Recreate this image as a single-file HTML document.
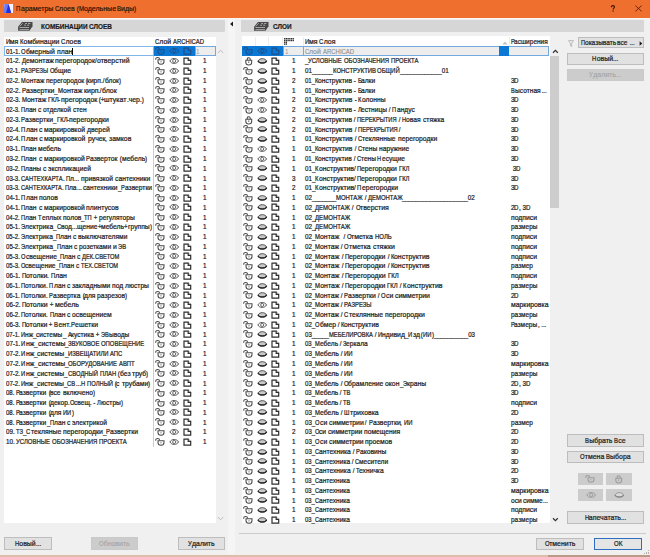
<!DOCTYPE html>
<html><head><meta charset="utf-8"><style>
html,body{margin:0;padding:0;width:650px;height:557px;overflow:hidden;background:#f0f0f0}
.a{position:absolute;display:block}
.t{position:absolute;white-space:pre;font-family:"Liberation Sans",sans-serif;font-size:6.94px;line-height:7px;color:#1c1c1c;-webkit-text-stroke:0.22px #1c1c1c}
.b{font-weight:bold}
.c{text-align:center}
</style></head><body>
<div class="a" style="left:0.00px;top:0.00px;width:650.00px;height:17.50px;background:#ee6f2e"></div>
<div class="a" style="left:0.00px;top:18.00px;width:650.00px;height:1.00px;background:#f8f7f0"></div>
<svg class="a" style="left:4.3px;top:4.3px" width="9" height="9" viewBox="0 0 8.75 8.75"><rect x="0" y="0" width="8.75" height="8.75" fill="#f4f2ff"/><path d="M0 0 H4.4 L7.0 8.75 H0 Z" fill="#6d78f0"/><path d="M2.0 8.75 L4.4 0 L7.0 8.75 Z" fill="#1f2ee0"/><path d="M0 0 H1.5 L0 5 Z" fill="#8f98f4"/></svg>
<div class="t" style="left:16.20px;top:5.00px;color:#240c02;-webkit-text-stroke:0.15px #240c02"><span style="display:inline-block;transform:scaleX(0.8674);transform-origin:0 0;margin-right:-0.662px">П</span><span style="display:inline-block;transform:scaleX(1.0100);transform-origin:0 0;margin-right:0.322px">араметры</span><span style="display:inline-block;transform:scaleX(0.9125);transform-origin:0 0;margin-right:-0.169px"> </span><span style="display:inline-block;transform:scaleX(0.8674);transform-origin:0 0;margin-right:-0.665px">С</span><span style="display:inline-block;transform:scaleX(1.0100);transform-origin:0 0;margin-right:0.155px">лоев</span><span style="display:inline-block;transform:scaleX(0.9125);transform-origin:0 0;margin-right:-0.371px"> (</span><span style="display:inline-block;transform:scaleX(0.8674);transform-origin:0 0;margin-right:-0.767px">М</span><span style="display:inline-block;transform:scaleX(1.0100);transform-origin:0 0;margin-right:0.321px">одельные</span><span style="display:inline-block;transform:scaleX(0.9125);transform-origin:0 0;margin-right:-0.169px"> </span><span style="display:inline-block;transform:scaleX(0.8674);transform-origin:0 0;margin-right:-0.614px">В</span><span style="display:inline-block;transform:scaleX(1.0100);transform-origin:0 0;margin-right:0.129px">иды</span><span style="display:inline-block;transform:scaleX(0.9125);transform-origin:0 0;margin-right:-0.202px">)</span></div>
<svg class="a" style="left:610px;top:5px" width="6" height="8" viewBox="0 0 6 8"><path d="M1.3 2.3 C1.3 0.9 2.2 0.6 2.9 0.6 C3.8 0.6 4.5 1.2 4.5 2.0 C4.5 3.1 3.1 3.3 3.1 4.6" fill="none" stroke="#3a1000" stroke-width="1.05"/><circle cx="3.1" cy="6.0" r="0.65" fill="#3a1000"/></svg>
<svg class="a" style="left:635px;top:5.3px" width="8" height="8" viewBox="0 0 8 8"><path d="M0.4 0.6 L6.6 6.3 M6.6 0.6 L0.4 6.3" stroke="#4a1804" stroke-width="0.8"/></svg>
<div class="a" style="left:4.00px;top:19.80px;width:220.70px;height:12.50px;background:#d6d6d6;border-radius:1.2px"></div>
<svg class="a" style="left:17.80px;top:21.60px" width="16" height="10" viewBox="0 0 16 10"><path d="M0.1 4.7 L3.9 0.1 H14.5 V4.3 L11.5 8.7 H0.1 Z" fill="#474747"/><path d="M1.5 5.5 H11.0 M1.5 7.6 H11.0" stroke="#d9d9d9" stroke-width="0.65"/><path d="M1.8 4.3 L4.8 1.1" stroke="#d9d9d9" stroke-width="0.6"/><path d="M7.2 1.5 H9.0 M10.2 1.5 H12.4 M6.2 3.2 H8.0 M9.2 3.2 H11.2" stroke="#d9d9d9" stroke-width="0.7"/></svg>
<div class="t b" style="left:40.90px;top:22.90px;font-size:7.25px"><span style="display:inline-block;transform:scaleX(0.8828);transform-origin:0 0;margin-right:-6.180px">КОМБИНАЦИИ</span><span style="display:inline-block;transform:scaleX(0.8648);transform-origin:0 0;margin-right:-0.272px"> </span><span style="display:inline-block;transform:scaleX(0.8828);transform-origin:0 0;margin-right:-3.052px">СЛОЕВ</span></div>
<div class="a" style="left:4.00px;top:36.60px;width:211.50px;height:486.40px;background:#fff"></div>
<div class="t" style="left:5.50px;top:38.00px;"><span style="display:inline-block;transform:scaleX(0.8588);transform-origin:0 0;margin-right:-0.704px">И</span>мя<span style="display:inline-block;transform:scaleX(0.9035);transform-origin:0 0;margin-right:-0.186px"> </span><span style="display:inline-block;transform:scaleX(0.8588);transform-origin:0 0;margin-right:-0.571px">К</span>омбинации<span style="display:inline-block;transform:scaleX(0.9035);transform-origin:0 0;margin-right:-0.186px"> </span><span style="display:inline-block;transform:scaleX(0.8588);transform-origin:0 0;margin-right:-0.708px">С</span>лоев</div>
<div class="t" style="left:155.00px;top:38.00px;"><span style="display:inline-block;transform:scaleX(0.8588);transform-origin:0 0;margin-right:-0.708px">С</span>лой<span style="display:inline-block;transform:scaleX(0.9035);transform-origin:0 0;margin-right:-0.186px"> </span><span style="display:inline-block;transform:scaleX(0.8588);transform-origin:0 0;margin-right:-5.118px">ARCHICAD</span></div>
<div class="a" style="left:153.30px;top:46.30px;width:0.70px;height:400.74px;background:#cdcdcd"></div>
<div class="a" style="left:4.20px;top:46.30px;width:149.40px;height:9.60px;border:1px solid #80b6e8;box-sizing:border-box"></div>
<div class="a" style="left:153.60px;top:46.30px;width:41.00px;height:9.60px;background:#0a78d4"></div>
<div class="a" style="left:194.50px;top:46.30px;width:21.20px;height:9.60px;background:#ededed;border:1px solid #72aae0;box-sizing:border-box"></div>
<div class="t" style="left:5.50px;top:47.60px;width:147.5px;height:10px;overflow:hidden"><span style="display:inline-block;transform:scaleX(0.8971);transform-origin:0 0;margin-right:-1.826px">01-1. </span><span style="display:inline-block;transform:scaleX(0.8528);transform-origin:0 0;margin-right:-0.795px">О</span><span style="display:inline-block;transform:scaleX(0.9930);transform-origin:0 0;margin-right:-0.204px">бмерный</span><span style="display:inline-block;transform:scaleX(0.8971);transform-origin:0 0;margin-right:-0.198px"> </span><span style="display:inline-block;transform:scaleX(0.9930);transform-origin:0 0;margin-right:-0.108px">план</span></div>
<svg class="a" style="left:151.60px;top:46.30px" width="14" height="10" viewBox="0 0 14 10"><path d="M3.7 3.8 C3.5 2.0 4.6 1.5 5.8 1.5 C6.9 1.5 7.5 2.2 7.6 3.4" fill="none" stroke="#1d4f8c" stroke-width="1.05"/><path d="M6.0 3.75 H12.0 V5.5 C12.0 7.3 10.3 8.3 9.0 8.35 C7.7 8.3 6.0 7.3 6.0 5.5 Z" fill="none" stroke="#1d4f8c" stroke-width="1.05"/><circle cx="9.0" cy="5.8" r="0.6" fill="#1d4f8c"/></svg>
<svg class="a" style="left:168.00px;top:46.30px" width="12" height="10" viewBox="0 0 12 10"><path d="M1.9 4.95 C3.3 1.7 9.1 1.7 10.5 4.95 C9.1 8.2 3.3 8.2 1.9 4.95 Z" fill="none" stroke="#1d4f8c" stroke-width="1.0"/><circle cx="6.2" cy="4.95" r="1.55" fill="none" stroke="#1d4f8c" stroke-width="0.9"/></svg>
<svg class="a" style="left:181.90px;top:46.30px" width="11" height="10" viewBox="0 0 11 10"><path d="M2.0 2.1 H6.2 V4.3 H8.7 V8.2 H2.0 Z" fill="none" stroke="#1d4f8c" stroke-width="1.2"/><path d="M6.4 2.0 L8.7 4.0" fill="none" stroke="#1d4f8c" stroke-width="0.7" opacity="0.55"/></svg>
<div class="t" style="left:196.20px;top:47.60px;color:#a0a0a0;-webkit-text-stroke:0"><span style="display:inline-block;transform:scaleX(0.9035);transform-origin:0 0;margin-right:-0.373px">1</span></div>
<div class="a" style="left:72.20px;top:47.90px;width:0.70px;height:7.00px;background:#000"></div>
<div class="t" style="left:5.50px;top:57.36px;width:147.5px;height:10px;overflow:hidden"><span style="display:inline-block;transform:scaleX(0.9017);transform-origin:0 0;margin-right:-1.744px">01-2. </span><span style="display:inline-block;transform:scaleX(0.8572);transform-origin:0 0;margin-right:-0.671px">Д</span><span style="display:inline-block;transform:scaleX(0.9981);transform-origin:0 0;margin-right:-0.053px">емонтаж</span><span style="display:inline-block;transform:scaleX(0.9017);transform-origin:0 0;margin-right:-0.189px"> </span><span style="display:inline-block;transform:scaleX(0.9981);transform-origin:0 0;margin-right:-0.077px">перегородок</span><span style="display:inline-block;transform:scaleX(0.9017);transform-origin:0 0;margin-right:-0.189px">/</span><span style="display:inline-block;transform:scaleX(0.9981);transform-origin:0 0;margin-right:-0.062px">отверстий</span></div>
<svg class="a" style="left:151.60px;top:56.06px" width="14" height="10" viewBox="0 0 14 10"><path d="M3.7 3.8 C3.5 2.0 4.6 1.5 5.8 1.5 C6.9 1.5 7.5 2.2 7.6 3.4" fill="none" stroke="#4a4a4a" stroke-width="1.05"/><path d="M6.0 3.75 H12.0 V5.5 C12.0 7.3 10.3 8.3 9.0 8.35 C7.7 8.3 6.0 7.3 6.0 5.5 Z" fill="#fff" stroke="#4a4a4a" stroke-width="1.05"/><circle cx="9.0" cy="5.8" r="0.6" fill="#4a4a4a"/></svg>
<svg class="a" style="left:168.00px;top:56.06px" width="12" height="10" viewBox="0 0 12 10"><path d="M1.9 4.95 C3.3 1.7 9.1 1.7 10.5 4.95 C9.1 8.2 3.3 8.2 1.9 4.95 Z" fill="#fff" stroke="#555" stroke-width="1.0"/><circle cx="6.2" cy="4.95" r="1.55" fill="none" stroke="#555" stroke-width="0.9"/></svg>
<svg class="a" style="left:181.90px;top:56.06px" width="11" height="10" viewBox="0 0 11 10"><path d="M2.0 2.1 H6.2 V4.3 H8.7 V8.2 H2.0 Z" fill="#fff" stroke="#2e2e2e" stroke-width="1.2"/><path d="M6.4 2.0 L8.7 4.0" fill="none" stroke="#2e2e2e" stroke-width="0.7" opacity="0.55"/></svg>
<div class="t" style="left:203.00px;top:57.36px;"><span style="display:inline-block;transform:scaleX(0.9035);transform-origin:0 0;margin-right:-0.373px">1</span></div>
<div class="t" style="left:5.50px;top:67.12px;width:147.5px;height:10px;overflow:hidden"><span style="display:inline-block;transform:scaleX(0.8823);transform-origin:0 0;margin-right:-2.088px">02-1. </span><span style="display:inline-block;transform:scaleX(0.8387);transform-origin:0 0;margin-right:-5.330px">РАЗРЕЗЫ</span><span style="display:inline-block;transform:scaleX(0.8823);transform-origin:0 0;margin-right:-0.227px"> </span><span style="display:inline-block;transform:scaleX(0.8387);transform-origin:0 0;margin-right:-0.871px">О</span><span style="display:inline-block;transform:scaleX(0.9766);transform-origin:0 0;margin-right:-0.408px">бщие</span></div>
<svg class="a" style="left:151.60px;top:65.82px" width="14" height="10" viewBox="0 0 14 10"><path d="M3.7 3.8 C3.5 2.0 4.6 1.5 5.8 1.5 C6.9 1.5 7.5 2.2 7.6 3.4" fill="none" stroke="#4a4a4a" stroke-width="1.05"/><path d="M6.0 3.75 H12.0 V5.5 C12.0 7.3 10.3 8.3 9.0 8.35 C7.7 8.3 6.0 7.3 6.0 5.5 Z" fill="#fff" stroke="#4a4a4a" stroke-width="1.05"/><circle cx="9.0" cy="5.8" r="0.6" fill="#4a4a4a"/></svg>
<svg class="a" style="left:168.00px;top:65.82px" width="12" height="10" viewBox="0 0 12 10"><path d="M1.9 4.95 C3.3 1.7 9.1 1.7 10.5 4.95 C9.1 8.2 3.3 8.2 1.9 4.95 Z" fill="#fff" stroke="#555" stroke-width="1.0"/><circle cx="6.2" cy="4.95" r="1.55" fill="none" stroke="#555" stroke-width="0.9"/></svg>
<svg class="a" style="left:181.90px;top:65.82px" width="11" height="10" viewBox="0 0 11 10"><path d="M2.0 2.1 H6.2 V4.3 H8.7 V8.2 H2.0 Z" fill="#fff" stroke="#2e2e2e" stroke-width="1.2"/><path d="M6.4 2.0 L8.7 4.0" fill="none" stroke="#2e2e2e" stroke-width="0.7" opacity="0.55"/></svg>
<div class="t" style="left:203.00px;top:67.12px;"><span style="display:inline-block;transform:scaleX(0.9035);transform-origin:0 0;margin-right:-0.373px">1</span></div>
<div class="t" style="left:5.50px;top:76.89px;width:147.5px;height:10px;overflow:hidden"><span style="display:inline-block;transform:scaleX(0.8614);transform-origin:0 0;margin-right:-2.459px">02-2. </span><span style="display:inline-block;transform:scaleX(0.8189);transform-origin:0 0;margin-right:-1.047px">М</span><span style="display:inline-block;transform:scaleX(0.9535);transform-origin:0 0;margin-right:-0.901px">онтаж</span><span style="display:inline-block;transform:scaleX(0.8614);transform-origin:0 0;margin-right:-0.267px"> </span><span style="display:inline-block;transform:scaleX(0.9535);transform-origin:0 0;margin-right:-1.878px">перегородок</span><span style="display:inline-block;transform:scaleX(0.8614);transform-origin:0 0;margin-right:-0.587px"> (</span><span style="display:inline-block;transform:scaleX(0.9535);transform-origin:0 0;margin-right:-0.676px">кирп</span><span style="display:inline-block;transform:scaleX(0.8614);transform-origin:0 0;margin-right:-0.534px">./</span><span style="display:inline-block;transform:scaleX(0.9535);transform-origin:0 0;margin-right:-0.694px">блок</span><span style="display:inline-block;transform:scaleX(0.8614);transform-origin:0 0;margin-right:-0.320px">)</span></div>
<svg class="a" style="left:151.60px;top:75.59px" width="14" height="10" viewBox="0 0 14 10"><path d="M3.7 3.8 C3.5 2.0 4.6 1.5 5.8 1.5 C6.9 1.5 7.5 2.2 7.6 3.4" fill="none" stroke="#4a4a4a" stroke-width="1.05"/><path d="M6.0 3.75 H12.0 V5.5 C12.0 7.3 10.3 8.3 9.0 8.35 C7.7 8.3 6.0 7.3 6.0 5.5 Z" fill="#fff" stroke="#4a4a4a" stroke-width="1.05"/><circle cx="9.0" cy="5.8" r="0.6" fill="#4a4a4a"/></svg>
<svg class="a" style="left:168.00px;top:75.59px" width="12" height="10" viewBox="0 0 12 10"><path d="M1.9 4.95 C3.3 1.7 9.1 1.7 10.5 4.95 C9.1 8.2 3.3 8.2 1.9 4.95 Z" fill="#fff" stroke="#555" stroke-width="1.0"/><circle cx="6.2" cy="4.95" r="1.55" fill="none" stroke="#555" stroke-width="0.9"/></svg>
<svg class="a" style="left:181.90px;top:75.59px" width="11" height="10" viewBox="0 0 11 10"><path d="M2.0 2.1 H6.2 V4.3 H8.7 V8.2 H2.0 Z" fill="#fff" stroke="#2e2e2e" stroke-width="1.2"/><path d="M6.4 2.0 L8.7 4.0" fill="none" stroke="#2e2e2e" stroke-width="0.7" opacity="0.55"/></svg>
<div class="t" style="left:203.00px;top:76.89px;"><span style="display:inline-block;transform:scaleX(0.9035);transform-origin:0 0;margin-right:-0.373px">1</span></div>
<div class="t" style="left:5.50px;top:86.65px;width:147.5px;height:10px;overflow:hidden"><span style="display:inline-block;transform:scaleX(0.9098);transform-origin:0 0;margin-right:-1.601px">02-2. </span><span style="display:inline-block;transform:scaleX(0.8648);transform-origin:0 0;margin-right:-0.626px">Р</span><span style="display:inline-block;transform:scaleX(1.0070);transform-origin:0 0;margin-right:0.200px">азвертки</span><span style="display:inline-block;transform:scaleX(0.9098);transform-origin:0 0;margin-right:-0.348px">_</span><span style="display:inline-block;transform:scaleX(0.8648);transform-origin:0 0;margin-right:-0.782px">М</span><span style="display:inline-block;transform:scaleX(1.0070);transform-origin:0 0;margin-right:0.136px">онтаж</span><span style="display:inline-block;transform:scaleX(0.9098);transform-origin:0 0;margin-right:-0.174px"> </span><span style="display:inline-block;transform:scaleX(1.0070);transform-origin:0 0;margin-right:0.102px">кирп</span><span style="display:inline-block;transform:scaleX(0.9098);transform-origin:0 0;margin-right:-0.348px">./</span><span style="display:inline-block;transform:scaleX(1.0070);transform-origin:0 0;margin-right:0.104px">блок</span></div>
<svg class="a" style="left:151.60px;top:85.35px" width="14" height="10" viewBox="0 0 14 10"><path d="M3.7 3.8 C3.5 2.0 4.6 1.5 5.8 1.5 C6.9 1.5 7.5 2.2 7.6 3.4" fill="none" stroke="#4a4a4a" stroke-width="1.05"/><path d="M6.0 3.75 H12.0 V5.5 C12.0 7.3 10.3 8.3 9.0 8.35 C7.7 8.3 6.0 7.3 6.0 5.5 Z" fill="#fff" stroke="#4a4a4a" stroke-width="1.05"/><circle cx="9.0" cy="5.8" r="0.6" fill="#4a4a4a"/></svg>
<svg class="a" style="left:168.00px;top:85.35px" width="12" height="10" viewBox="0 0 12 10"><path d="M1.9 4.95 C3.3 1.7 9.1 1.7 10.5 4.95 C9.1 8.2 3.3 8.2 1.9 4.95 Z" fill="#fff" stroke="#555" stroke-width="1.0"/><circle cx="6.2" cy="4.95" r="1.55" fill="none" stroke="#555" stroke-width="0.9"/></svg>
<svg class="a" style="left:181.90px;top:85.35px" width="11" height="10" viewBox="0 0 11 10"><path d="M2.0 2.1 H6.2 V4.3 H8.7 V8.2 H2.0 Z" fill="#fff" stroke="#2e2e2e" stroke-width="1.2"/><path d="M6.4 2.0 L8.7 4.0" fill="none" stroke="#2e2e2e" stroke-width="0.7" opacity="0.55"/></svg>
<div class="t" style="left:203.00px;top:86.65px;"><span style="display:inline-block;transform:scaleX(0.9035);transform-origin:0 0;margin-right:-0.373px">1</span></div>
<div class="t" style="left:5.50px;top:96.41px;width:147.5px;height:10px;overflow:hidden"><span style="display:inline-block;transform:scaleX(0.9071);transform-origin:0 0;margin-right:-1.649px">02-3. </span><span style="display:inline-block;transform:scaleX(0.8622);transform-origin:0 0;margin-right:-0.796px">М</span><span style="display:inline-block;transform:scaleX(1.0040);transform-origin:0 0;margin-right:0.077px">онтаж</span><span style="display:inline-block;transform:scaleX(0.9071);transform-origin:0 0;margin-right:-0.179px"> </span><span style="display:inline-block;transform:scaleX(0.8622);transform-origin:0 0;margin-right:-1.702px">ГКЛ</span><span style="display:inline-block;transform:scaleX(0.9071);transform-origin:0 0;margin-right:-0.215px">-</span><span style="display:inline-block;transform:scaleX(1.0040);transform-origin:0 0;margin-right:0.146px">прегородок</span><span style="display:inline-block;transform:scaleX(0.9071);transform-origin:0 0;margin-right:-0.771px"> (+</span><span style="display:inline-block;transform:scaleX(1.0040);transform-origin:0 0;margin-right:0.089px">штукат</span><span style="display:inline-block;transform:scaleX(0.9071);transform-origin:0 0;margin-right:-0.179px">.</span>чер<span style="display:inline-block;transform:scaleX(0.9071);transform-origin:0 0;margin-right:-0.394px">.)</span></div>
<svg class="a" style="left:151.60px;top:95.11px" width="14" height="10" viewBox="0 0 14 10"><path d="M3.7 3.8 C3.5 2.0 4.6 1.5 5.8 1.5 C6.9 1.5 7.5 2.2 7.6 3.4" fill="none" stroke="#4a4a4a" stroke-width="1.05"/><path d="M6.0 3.75 H12.0 V5.5 C12.0 7.3 10.3 8.3 9.0 8.35 C7.7 8.3 6.0 7.3 6.0 5.5 Z" fill="#fff" stroke="#4a4a4a" stroke-width="1.05"/><circle cx="9.0" cy="5.8" r="0.6" fill="#4a4a4a"/></svg>
<svg class="a" style="left:168.00px;top:95.11px" width="12" height="10" viewBox="0 0 12 10"><path d="M1.9 4.95 C3.3 1.7 9.1 1.7 10.5 4.95 C9.1 8.2 3.3 8.2 1.9 4.95 Z" fill="#fff" stroke="#555" stroke-width="1.0"/><circle cx="6.2" cy="4.95" r="1.55" fill="none" stroke="#555" stroke-width="0.9"/></svg>
<svg class="a" style="left:181.90px;top:95.11px" width="11" height="10" viewBox="0 0 11 10"><path d="M2.0 2.1 H6.2 V4.3 H8.7 V8.2 H2.0 Z" fill="#fff" stroke="#2e2e2e" stroke-width="1.2"/><path d="M6.4 2.0 L8.7 4.0" fill="none" stroke="#2e2e2e" stroke-width="0.7" opacity="0.55"/></svg>
<div class="t" style="left:203.00px;top:96.41px;"><span style="display:inline-block;transform:scaleX(0.9035);transform-origin:0 0;margin-right:-0.373px">1</span></div>
<div class="t" style="left:5.50px;top:106.17px;width:147.5px;height:10px;overflow:hidden"><span style="display:inline-block;transform:scaleX(0.8664);transform-origin:0 0;margin-right:-2.371px">02-3. </span><span style="display:inline-block;transform:scaleX(0.8236);transform-origin:0 0;margin-right:-0.880px">П</span><span style="display:inline-block;transform:scaleX(0.9590);transform-origin:0 0;margin-right:-0.481px">лан</span><span style="display:inline-block;transform:scaleX(0.8664);transform-origin:0 0;margin-right:-0.258px"> </span><span style="display:inline-block;transform:scaleX(0.9590);transform-origin:0 0;margin-right:-0.142px">с</span><span style="display:inline-block;transform:scaleX(0.8664);transform-origin:0 0;margin-right:-0.258px"> </span><span style="display:inline-block;transform:scaleX(0.9590);transform-origin:0 0;margin-right:-1.221px">отделкой</span><span style="display:inline-block;transform:scaleX(0.8664);transform-origin:0 0;margin-right:-0.258px"> </span><span style="display:inline-block;transform:scaleX(0.9590);transform-origin:0 0;margin-right:-0.588px">стен</span></div>
<svg class="a" style="left:151.60px;top:104.87px" width="14" height="10" viewBox="0 0 14 10"><path d="M3.7 3.8 C3.5 2.0 4.6 1.5 5.8 1.5 C6.9 1.5 7.5 2.2 7.6 3.4" fill="none" stroke="#4a4a4a" stroke-width="1.05"/><path d="M6.0 3.75 H12.0 V5.5 C12.0 7.3 10.3 8.3 9.0 8.35 C7.7 8.3 6.0 7.3 6.0 5.5 Z" fill="#fff" stroke="#4a4a4a" stroke-width="1.05"/><circle cx="9.0" cy="5.8" r="0.6" fill="#4a4a4a"/></svg>
<svg class="a" style="left:168.00px;top:104.87px" width="12" height="10" viewBox="0 0 12 10"><path d="M1.9 4.95 C3.3 1.7 9.1 1.7 10.5 4.95 C9.1 8.2 3.3 8.2 1.9 4.95 Z" fill="#fff" stroke="#555" stroke-width="1.0"/><circle cx="6.2" cy="4.95" r="1.55" fill="none" stroke="#555" stroke-width="0.9"/></svg>
<svg class="a" style="left:181.90px;top:104.87px" width="11" height="10" viewBox="0 0 11 10"><path d="M2.0 2.1 H6.2 V4.3 H8.7 V8.2 H2.0 Z" fill="#fff" stroke="#2e2e2e" stroke-width="1.2"/><path d="M6.4 2.0 L8.7 4.0" fill="none" stroke="#2e2e2e" stroke-width="0.7" opacity="0.55"/></svg>
<div class="t" style="left:203.00px;top:106.17px;"><span style="display:inline-block;transform:scaleX(0.9035);transform-origin:0 0;margin-right:-0.373px">1</span></div>
<div class="t" style="left:5.50px;top:115.93px;width:147.5px;height:10px;overflow:hidden"><span style="display:inline-block;transform:scaleX(0.8958);transform-origin:0 0;margin-right:-1.850px">02-3. </span><span style="display:inline-block;transform:scaleX(0.8515);transform-origin:0 0;margin-right:-0.687px">Р</span><span style="display:inline-block;transform:scaleX(0.9915);transform-origin:0 0;margin-right:-0.243px">азвертки</span><span style="display:inline-block;transform:scaleX(0.8958);transform-origin:0 0;margin-right:-0.402px">_</span><span style="display:inline-block;transform:scaleX(0.8515);transform-origin:0 0;margin-right:-1.835px">ГКЛ</span><span style="display:inline-block;transform:scaleX(0.8958);transform-origin:0 0;margin-right:-0.241px">-</span><span style="display:inline-block;transform:scaleX(0.9915);transform-origin:0 0;margin-right:-0.343px">перегородки</span></div>
<svg class="a" style="left:151.60px;top:114.63px" width="14" height="10" viewBox="0 0 14 10"><path d="M3.7 3.8 C3.5 2.0 4.6 1.5 5.8 1.5 C6.9 1.5 7.5 2.2 7.6 3.4" fill="none" stroke="#4a4a4a" stroke-width="1.05"/><path d="M6.0 3.75 H12.0 V5.5 C12.0 7.3 10.3 8.3 9.0 8.35 C7.7 8.3 6.0 7.3 6.0 5.5 Z" fill="#fff" stroke="#4a4a4a" stroke-width="1.05"/><circle cx="9.0" cy="5.8" r="0.6" fill="#4a4a4a"/></svg>
<svg class="a" style="left:168.00px;top:114.63px" width="12" height="10" viewBox="0 0 12 10"><path d="M1.9 4.95 C3.3 1.7 9.1 1.7 10.5 4.95 C9.1 8.2 3.3 8.2 1.9 4.95 Z" fill="#fff" stroke="#555" stroke-width="1.0"/><circle cx="6.2" cy="4.95" r="1.55" fill="none" stroke="#555" stroke-width="0.9"/></svg>
<svg class="a" style="left:181.90px;top:114.63px" width="11" height="10" viewBox="0 0 11 10"><path d="M2.0 2.1 H6.2 V4.3 H8.7 V8.2 H2.0 Z" fill="#fff" stroke="#2e2e2e" stroke-width="1.2"/><path d="M6.4 2.0 L8.7 4.0" fill="none" stroke="#2e2e2e" stroke-width="0.7" opacity="0.55"/></svg>
<div class="t" style="left:203.00px;top:115.93px;"><span style="display:inline-block;transform:scaleX(0.9035);transform-origin:0 0;margin-right:-0.373px">1</span></div>
<div class="t" style="left:5.50px;top:125.70px;width:147.5px;height:10px;overflow:hidden"><span style="display:inline-block;transform:scaleX(0.8904);transform-origin:0 0;margin-right:-1.944px">02-4. </span><span style="display:inline-block;transform:scaleX(0.8464);transform-origin:0 0;margin-right:-0.766px">П</span><span style="display:inline-block;transform:scaleX(0.9856);transform-origin:0 0;margin-right:-0.169px">лан</span><span style="display:inline-block;transform:scaleX(0.8904);transform-origin:0 0;margin-right:-0.211px"> </span>с<span style="display:inline-block;transform:scaleX(0.8904);transform-origin:0 0;margin-right:-0.211px"> </span><span style="display:inline-block;transform:scaleX(0.9856);transform-origin:0 0;margin-right:-0.599px">маркировкой</span><span style="display:inline-block;transform:scaleX(0.8904);transform-origin:0 0;margin-right:-0.211px"> </span><span style="display:inline-block;transform:scaleX(0.9856);transform-origin:0 0;margin-right:-0.334px">дверей</span></div>
<svg class="a" style="left:151.60px;top:124.40px" width="14" height="10" viewBox="0 0 14 10"><path d="M3.7 3.8 C3.5 2.0 4.6 1.5 5.8 1.5 C6.9 1.5 7.5 2.2 7.6 3.4" fill="none" stroke="#4a4a4a" stroke-width="1.05"/><path d="M6.0 3.75 H12.0 V5.5 C12.0 7.3 10.3 8.3 9.0 8.35 C7.7 8.3 6.0 7.3 6.0 5.5 Z" fill="#fff" stroke="#4a4a4a" stroke-width="1.05"/><circle cx="9.0" cy="5.8" r="0.6" fill="#4a4a4a"/></svg>
<svg class="a" style="left:168.00px;top:124.40px" width="12" height="10" viewBox="0 0 12 10"><path d="M1.9 4.95 C3.3 1.7 9.1 1.7 10.5 4.95 C9.1 8.2 3.3 8.2 1.9 4.95 Z" fill="#fff" stroke="#555" stroke-width="1.0"/><circle cx="6.2" cy="4.95" r="1.55" fill="none" stroke="#555" stroke-width="0.9"/></svg>
<svg class="a" style="left:181.90px;top:124.40px" width="11" height="10" viewBox="0 0 11 10"><path d="M2.0 2.1 H6.2 V4.3 H8.7 V8.2 H2.0 Z" fill="#fff" stroke="#2e2e2e" stroke-width="1.2"/><path d="M6.4 2.0 L8.7 4.0" fill="none" stroke="#2e2e2e" stroke-width="0.7" opacity="0.55"/></svg>
<div class="t" style="left:203.00px;top:125.70px;"><span style="display:inline-block;transform:scaleX(0.9035);transform-origin:0 0;margin-right:-0.373px">1</span></div>
<div class="t" style="left:5.50px;top:135.46px;width:147.5px;height:10px;overflow:hidden"><span style="display:inline-block;transform:scaleX(0.8974);transform-origin:0 0;margin-right:-1.821px">02-4. </span><span style="display:inline-block;transform:scaleX(0.8530);transform-origin:0 0;margin-right:-0.733px">П</span><span style="display:inline-block;transform:scaleX(0.9933);transform-origin:0 0;margin-right:-0.079px">лан</span><span style="display:inline-block;transform:scaleX(0.8974);transform-origin:0 0;margin-right:-0.198px"> </span>с<span style="display:inline-block;transform:scaleX(0.8974);transform-origin:0 0;margin-right:-0.198px"> </span><span style="display:inline-block;transform:scaleX(0.9933);transform-origin:0 0;margin-right:-0.279px">маркировкой</span><span style="display:inline-block;transform:scaleX(0.8974);transform-origin:0 0;margin-right:-0.198px"> </span><span style="display:inline-block;transform:scaleX(0.9933);transform-origin:0 0;margin-right:-0.120px">ручек</span><span style="display:inline-block;transform:scaleX(0.8974);transform-origin:0 0;margin-right:-0.396px">, </span><span style="display:inline-block;transform:scaleX(0.9933);transform-origin:0 0;margin-right:-0.150px">замков</span></div>
<svg class="a" style="left:151.60px;top:134.16px" width="14" height="10" viewBox="0 0 14 10"><path d="M3.7 3.8 C3.5 2.0 4.6 1.5 5.8 1.5 C6.9 1.5 7.5 2.2 7.6 3.4" fill="none" stroke="#4a4a4a" stroke-width="1.05"/><path d="M6.0 3.75 H12.0 V5.5 C12.0 7.3 10.3 8.3 9.0 8.35 C7.7 8.3 6.0 7.3 6.0 5.5 Z" fill="#fff" stroke="#4a4a4a" stroke-width="1.05"/><circle cx="9.0" cy="5.8" r="0.6" fill="#4a4a4a"/></svg>
<svg class="a" style="left:168.00px;top:134.16px" width="12" height="10" viewBox="0 0 12 10"><path d="M1.9 4.95 C3.3 1.7 9.1 1.7 10.5 4.95 C9.1 8.2 3.3 8.2 1.9 4.95 Z" fill="#fff" stroke="#555" stroke-width="1.0"/><circle cx="6.2" cy="4.95" r="1.55" fill="none" stroke="#555" stroke-width="0.9"/></svg>
<svg class="a" style="left:181.90px;top:134.16px" width="11" height="10" viewBox="0 0 11 10"><path d="M2.0 2.1 H6.2 V4.3 H8.7 V8.2 H2.0 Z" fill="#fff" stroke="#2e2e2e" stroke-width="1.2"/><path d="M6.4 2.0 L8.7 4.0" fill="none" stroke="#2e2e2e" stroke-width="0.7" opacity="0.55"/></svg>
<div class="t" style="left:203.00px;top:135.46px;"><span style="display:inline-block;transform:scaleX(0.9035);transform-origin:0 0;margin-right:-0.373px">1</span></div>
<div class="t" style="left:5.50px;top:145.22px;width:147.5px;height:10px;overflow:hidden"><span style="display:inline-block;transform:scaleX(0.8783);transform-origin:0 0;margin-right:-2.161px">03-1. </span><span style="display:inline-block;transform:scaleX(0.8348);transform-origin:0 0;margin-right:-0.824px">П</span><span style="display:inline-block;transform:scaleX(0.9721);transform-origin:0 0;margin-right:-0.328px">лан</span><span style="display:inline-block;transform:scaleX(0.8783);transform-origin:0 0;margin-right:-0.235px"> </span><span style="display:inline-block;transform:scaleX(0.9721);transform-origin:0 0;margin-right:-0.673px">мебель</span></div>
<svg class="a" style="left:151.60px;top:143.92px" width="14" height="10" viewBox="0 0 14 10"><path d="M3.7 3.8 C3.5 2.0 4.6 1.5 5.8 1.5 C6.9 1.5 7.5 2.2 7.6 3.4" fill="none" stroke="#4a4a4a" stroke-width="1.05"/><path d="M6.0 3.75 H12.0 V5.5 C12.0 7.3 10.3 8.3 9.0 8.35 C7.7 8.3 6.0 7.3 6.0 5.5 Z" fill="#fff" stroke="#4a4a4a" stroke-width="1.05"/><circle cx="9.0" cy="5.8" r="0.6" fill="#4a4a4a"/></svg>
<svg class="a" style="left:168.00px;top:143.92px" width="12" height="10" viewBox="0 0 12 10"><path d="M1.9 4.95 C3.3 1.7 9.1 1.7 10.5 4.95 C9.1 8.2 3.3 8.2 1.9 4.95 Z" fill="#fff" stroke="#555" stroke-width="1.0"/><circle cx="6.2" cy="4.95" r="1.55" fill="none" stroke="#555" stroke-width="0.9"/></svg>
<svg class="a" style="left:181.90px;top:143.92px" width="11" height="10" viewBox="0 0 11 10"><path d="M2.0 2.1 H6.2 V4.3 H8.7 V8.2 H2.0 Z" fill="#fff" stroke="#2e2e2e" stroke-width="1.2"/><path d="M6.4 2.0 L8.7 4.0" fill="none" stroke="#2e2e2e" stroke-width="0.7" opacity="0.55"/></svg>
<div class="t" style="left:203.00px;top:145.22px;"><span style="display:inline-block;transform:scaleX(0.9035);transform-origin:0 0;margin-right:-0.373px">1</span></div>
<div class="t" style="left:5.50px;top:154.98px;width:147.5px;height:10px;overflow:hidden"><span style="display:inline-block;transform:scaleX(0.8844);transform-origin:0 0;margin-right:-2.052px">03-2. </span><span style="display:inline-block;transform:scaleX(0.8407);transform-origin:0 0;margin-right:-0.795px">П</span><span style="display:inline-block;transform:scaleX(0.9789);transform-origin:0 0;margin-right:-0.248px">лан</span><span style="display:inline-block;transform:scaleX(0.8844);transform-origin:0 0;margin-right:-0.223px"> </span><span style="display:inline-block;transform:scaleX(0.9789);transform-origin:0 0;margin-right:-0.073px">с</span><span style="display:inline-block;transform:scaleX(0.8844);transform-origin:0 0;margin-right:-0.223px"> </span><span style="display:inline-block;transform:scaleX(0.9789);transform-origin:0 0;margin-right:-0.877px">маркировкой</span><span style="display:inline-block;transform:scaleX(0.8844);transform-origin:0 0;margin-right:-0.223px"> </span><span style="display:inline-block;transform:scaleX(0.8407);transform-origin:0 0;margin-right:-0.738px">Р</span><span style="display:inline-block;transform:scaleX(0.9789);transform-origin:0 0;margin-right:-0.602px">азверток</span><span style="display:inline-block;transform:scaleX(0.8844);transform-origin:0 0;margin-right:-0.490px"> (</span><span style="display:inline-block;transform:scaleX(0.9789);transform-origin:0 0;margin-right:-0.509px">мебель</span><span style="display:inline-block;transform:scaleX(0.8844);transform-origin:0 0;margin-right:-0.267px">)</span></div>
<svg class="a" style="left:151.60px;top:153.68px" width="14" height="10" viewBox="0 0 14 10"><path d="M3.7 3.8 C3.5 2.0 4.6 1.5 5.8 1.5 C6.9 1.5 7.5 2.2 7.6 3.4" fill="none" stroke="#4a4a4a" stroke-width="1.05"/><path d="M6.0 3.75 H12.0 V5.5 C12.0 7.3 10.3 8.3 9.0 8.35 C7.7 8.3 6.0 7.3 6.0 5.5 Z" fill="#fff" stroke="#4a4a4a" stroke-width="1.05"/><circle cx="9.0" cy="5.8" r="0.6" fill="#4a4a4a"/></svg>
<svg class="a" style="left:168.00px;top:153.68px" width="12" height="10" viewBox="0 0 12 10"><path d="M1.9 4.95 C3.3 1.7 9.1 1.7 10.5 4.95 C9.1 8.2 3.3 8.2 1.9 4.95 Z" fill="#fff" stroke="#555" stroke-width="1.0"/><circle cx="6.2" cy="4.95" r="1.55" fill="none" stroke="#555" stroke-width="0.9"/></svg>
<svg class="a" style="left:181.90px;top:153.68px" width="11" height="10" viewBox="0 0 11 10"><path d="M2.0 2.1 H6.2 V4.3 H8.7 V8.2 H2.0 Z" fill="#fff" stroke="#2e2e2e" stroke-width="1.2"/><path d="M6.4 2.0 L8.7 4.0" fill="none" stroke="#2e2e2e" stroke-width="0.7" opacity="0.55"/></svg>
<div class="t" style="left:203.00px;top:154.98px;"><span style="display:inline-block;transform:scaleX(0.9035);transform-origin:0 0;margin-right:-0.373px">1</span></div>
<div class="t" style="left:5.50px;top:164.74px;width:147.5px;height:10px;overflow:hidden"><span style="display:inline-block;transform:scaleX(0.8727);transform-origin:0 0;margin-right:-2.260px">03-2. </span><span style="display:inline-block;transform:scaleX(0.8295);transform-origin:0 0;margin-right:-0.850px">П</span><span style="display:inline-block;transform:scaleX(0.9659);transform-origin:0 0;margin-right:-0.570px">ланы</span><span style="display:inline-block;transform:scaleX(0.8727);transform-origin:0 0;margin-right:-0.246px"> </span><span style="display:inline-block;transform:scaleX(0.9659);transform-origin:0 0;margin-right:-0.118px">с</span><span style="display:inline-block;transform:scaleX(0.8727);transform-origin:0 0;margin-right:-0.246px"> </span><span style="display:inline-block;transform:scaleX(0.9659);transform-origin:0 0;margin-right:-1.508px">экспликацией</span></div>
<svg class="a" style="left:151.60px;top:163.44px" width="14" height="10" viewBox="0 0 14 10"><path d="M3.7 3.8 C3.5 2.0 4.6 1.5 5.8 1.5 C6.9 1.5 7.5 2.2 7.6 3.4" fill="none" stroke="#4a4a4a" stroke-width="1.05"/><path d="M6.0 3.75 H12.0 V5.5 C12.0 7.3 10.3 8.3 9.0 8.35 C7.7 8.3 6.0 7.3 6.0 5.5 Z" fill="#fff" stroke="#4a4a4a" stroke-width="1.05"/><circle cx="9.0" cy="5.8" r="0.6" fill="#4a4a4a"/></svg>
<svg class="a" style="left:168.00px;top:163.44px" width="12" height="10" viewBox="0 0 12 10"><path d="M1.9 4.95 C3.3 1.7 9.1 1.7 10.5 4.95 C9.1 8.2 3.3 8.2 1.9 4.95 Z" fill="#fff" stroke="#555" stroke-width="1.0"/><circle cx="6.2" cy="4.95" r="1.55" fill="none" stroke="#555" stroke-width="0.9"/></svg>
<svg class="a" style="left:181.90px;top:163.44px" width="11" height="10" viewBox="0 0 11 10"><path d="M2.0 2.1 H6.2 V4.3 H8.7 V8.2 H2.0 Z" fill="#fff" stroke="#2e2e2e" stroke-width="1.2"/><path d="M6.4 2.0 L8.7 4.0" fill="none" stroke="#2e2e2e" stroke-width="0.7" opacity="0.55"/></svg>
<div class="t" style="left:203.00px;top:164.74px;"><span style="display:inline-block;transform:scaleX(0.9035);transform-origin:0 0;margin-right:-0.373px">1</span></div>
<div class="t" style="left:5.50px;top:174.51px;width:147.5px;height:10px;overflow:hidden"><span style="display:inline-block;transform:scaleX(0.8826);transform-origin:0 0;margin-right:-2.084px">03-3. </span><span style="display:inline-block;transform:scaleX(0.8390);transform-origin:0 0;margin-right:-8.104px">САНТЕХКАРТА</span><span style="display:inline-block;transform:scaleX(0.8826);transform-origin:0 0;margin-right:-0.453px">. </span><span style="display:inline-block;transform:scaleX(0.8390);transform-origin:0 0;margin-right:-0.803px">П</span><span style="display:inline-block;transform:scaleX(0.9769);transform-origin:0 0;margin-right:-0.094px">л</span><span style="display:inline-block;transform:scaleX(0.8826);transform-origin:0 0;margin-right:-0.906px">... </span><span style="display:inline-block;transform:scaleX(0.9769);transform-origin:0 0;margin-right:-0.760px">привязкой</span><span style="display:inline-block;transform:scaleX(0.8826);transform-origin:0 0;margin-right:-0.226px"> </span><span style="display:inline-block;transform:scaleX(0.9769);transform-origin:0 0;margin-right:-0.838px">сантехники</span></div>
<svg class="a" style="left:151.60px;top:173.21px" width="14" height="10" viewBox="0 0 14 10"><path d="M3.7 3.8 C3.5 2.0 4.6 1.5 5.8 1.5 C6.9 1.5 7.5 2.2 7.6 3.4" fill="none" stroke="#4a4a4a" stroke-width="1.05"/><path d="M6.0 3.75 H12.0 V5.5 C12.0 7.3 10.3 8.3 9.0 8.35 C7.7 8.3 6.0 7.3 6.0 5.5 Z" fill="#fff" stroke="#4a4a4a" stroke-width="1.05"/><circle cx="9.0" cy="5.8" r="0.6" fill="#4a4a4a"/></svg>
<svg class="a" style="left:168.00px;top:173.21px" width="12" height="10" viewBox="0 0 12 10"><path d="M1.9 4.95 C3.3 1.7 9.1 1.7 10.5 4.95 C9.1 8.2 3.3 8.2 1.9 4.95 Z" fill="#fff" stroke="#555" stroke-width="1.0"/><circle cx="6.2" cy="4.95" r="1.55" fill="none" stroke="#555" stroke-width="0.9"/></svg>
<svg class="a" style="left:181.90px;top:173.21px" width="11" height="10" viewBox="0 0 11 10"><path d="M2.0 2.1 H6.2 V4.3 H8.7 V8.2 H2.0 Z" fill="#fff" stroke="#2e2e2e" stroke-width="1.2"/><path d="M6.4 2.0 L8.7 4.0" fill="none" stroke="#2e2e2e" stroke-width="0.7" opacity="0.55"/></svg>
<div class="t" style="left:203.00px;top:174.51px;"><span style="display:inline-block;transform:scaleX(0.9035);transform-origin:0 0;margin-right:-0.373px">1</span></div>
<div class="t" style="left:5.50px;top:184.27px;width:147.5px;height:10px;overflow:hidden"><span style="display:inline-block;transform:scaleX(0.8647);transform-origin:0 0;margin-right:-2.401px">03-3. </span><span style="display:inline-block;transform:scaleX(0.8219);transform-origin:0 0;margin-right:-8.959px">САНТЕХКАРТА</span><span style="display:inline-block;transform:scaleX(0.8647);transform-origin:0 0;margin-right:-0.522px">. </span><span style="display:inline-block;transform:scaleX(0.8219);transform-origin:0 0;margin-right:-0.888px">П</span><span style="display:inline-block;transform:scaleX(0.9571);transform-origin:0 0;margin-right:-0.339px">ла</span><span style="display:inline-block;transform:scaleX(0.8647);transform-origin:0 0;margin-right:-1.044px">... </span><span style="display:inline-block;transform:scaleX(0.9571);transform-origin:0 0;margin-right:-1.557px">сантехники</span><span style="display:inline-block;transform:scaleX(0.8647);transform-origin:0 0;margin-right:-0.522px">_</span><span style="display:inline-block;transform:scaleX(0.8219);transform-origin:0 0;margin-right:-0.824px">Р</span><span style="display:inline-block;transform:scaleX(0.9571);transform-origin:0 0;margin-right:-1.224px">азвертки</span></div>
<svg class="a" style="left:151.60px;top:182.97px" width="14" height="10" viewBox="0 0 14 10"><path d="M3.7 3.8 C3.5 2.0 4.6 1.5 5.8 1.5 C6.9 1.5 7.5 2.2 7.6 3.4" fill="none" stroke="#4a4a4a" stroke-width="1.05"/><path d="M6.0 3.75 H12.0 V5.5 C12.0 7.3 10.3 8.3 9.0 8.35 C7.7 8.3 6.0 7.3 6.0 5.5 Z" fill="#fff" stroke="#4a4a4a" stroke-width="1.05"/><circle cx="9.0" cy="5.8" r="0.6" fill="#4a4a4a"/></svg>
<svg class="a" style="left:168.00px;top:182.97px" width="12" height="10" viewBox="0 0 12 10"><path d="M1.9 4.95 C3.3 1.7 9.1 1.7 10.5 4.95 C9.1 8.2 3.3 8.2 1.9 4.95 Z" fill="#fff" stroke="#555" stroke-width="1.0"/><circle cx="6.2" cy="4.95" r="1.55" fill="none" stroke="#555" stroke-width="0.9"/></svg>
<svg class="a" style="left:181.90px;top:182.97px" width="11" height="10" viewBox="0 0 11 10"><path d="M2.0 2.1 H6.2 V4.3 H8.7 V8.2 H2.0 Z" fill="#fff" stroke="#2e2e2e" stroke-width="1.2"/><path d="M6.4 2.0 L8.7 4.0" fill="none" stroke="#2e2e2e" stroke-width="0.7" opacity="0.55"/></svg>
<div class="t" style="left:203.00px;top:184.27px;"><span style="display:inline-block;transform:scaleX(0.9035);transform-origin:0 0;margin-right:-0.373px">1</span></div>
<div class="t" style="left:5.50px;top:194.03px;width:147.5px;height:10px;overflow:hidden"><span style="display:inline-block;transform:scaleX(0.8881);transform-origin:0 0;margin-right:-1.986px">04-1. </span><span style="display:inline-block;transform:scaleX(0.8442);transform-origin:0 0;margin-right:-0.777px">П</span><span style="display:inline-block;transform:scaleX(0.9830);transform-origin:0 0;margin-right:-0.200px">лан</span><span style="display:inline-block;transform:scaleX(0.8881);transform-origin:0 0;margin-right:-0.216px"> </span><span style="display:inline-block;transform:scaleX(0.9830);transform-origin:0 0;margin-right:-0.327px">полов</span></div>
<svg class="a" style="left:151.60px;top:192.73px" width="14" height="10" viewBox="0 0 14 10"><path d="M3.7 3.8 C3.5 2.0 4.6 1.5 5.8 1.5 C6.9 1.5 7.5 2.2 7.6 3.4" fill="none" stroke="#4a4a4a" stroke-width="1.05"/><path d="M6.0 3.75 H12.0 V5.5 C12.0 7.3 10.3 8.3 9.0 8.35 C7.7 8.3 6.0 7.3 6.0 5.5 Z" fill="#fff" stroke="#4a4a4a" stroke-width="1.05"/><circle cx="9.0" cy="5.8" r="0.6" fill="#4a4a4a"/></svg>
<svg class="a" style="left:168.00px;top:192.73px" width="12" height="10" viewBox="0 0 12 10"><path d="M1.9 4.95 C3.3 1.7 9.1 1.7 10.5 4.95 C9.1 8.2 3.3 8.2 1.9 4.95 Z" fill="#fff" stroke="#555" stroke-width="1.0"/><circle cx="6.2" cy="4.95" r="1.55" fill="none" stroke="#555" stroke-width="0.9"/></svg>
<svg class="a" style="left:181.90px;top:192.73px" width="11" height="10" viewBox="0 0 11 10"><path d="M2.0 2.1 H6.2 V4.3 H8.7 V8.2 H2.0 Z" fill="#fff" stroke="#2e2e2e" stroke-width="1.2"/><path d="M6.4 2.0 L8.7 4.0" fill="none" stroke="#2e2e2e" stroke-width="0.7" opacity="0.55"/></svg>
<div class="t" style="left:203.00px;top:194.03px;"><span style="display:inline-block;transform:scaleX(0.9035);transform-origin:0 0;margin-right:-0.373px">1</span></div>
<div class="t" style="left:5.50px;top:203.79px;width:147.5px;height:10px;overflow:hidden"><span style="display:inline-block;transform:scaleX(0.8858);transform-origin:0 0;margin-right:-2.028px">04-1. </span><span style="display:inline-block;transform:scaleX(0.8420);transform-origin:0 0;margin-right:-0.788px">П</span><span style="display:inline-block;transform:scaleX(0.9804);transform-origin:0 0;margin-right:-0.230px">лан</span><span style="display:inline-block;transform:scaleX(0.8858);transform-origin:0 0;margin-right:-0.220px"> </span><span style="display:inline-block;transform:scaleX(0.9804);transform-origin:0 0;margin-right:-0.068px">с</span><span style="display:inline-block;transform:scaleX(0.8858);transform-origin:0 0;margin-right:-0.220px"> </span><span style="display:inline-block;transform:scaleX(0.9804);transform-origin:0 0;margin-right:-0.815px">маркировкой</span><span style="display:inline-block;transform:scaleX(0.8858);transform-origin:0 0;margin-right:-0.220px"> </span><span style="display:inline-block;transform:scaleX(0.9804);transform-origin:0 0;margin-right:-0.650px">плинтусов</span></div>
<svg class="a" style="left:151.60px;top:202.49px" width="14" height="10" viewBox="0 0 14 10"><path d="M3.7 3.8 C3.5 2.0 4.6 1.5 5.8 1.5 C6.9 1.5 7.5 2.2 7.6 3.4" fill="none" stroke="#4a4a4a" stroke-width="1.05"/><path d="M6.0 3.75 H12.0 V5.5 C12.0 7.3 10.3 8.3 9.0 8.35 C7.7 8.3 6.0 7.3 6.0 5.5 Z" fill="#fff" stroke="#4a4a4a" stroke-width="1.05"/><circle cx="9.0" cy="5.8" r="0.6" fill="#4a4a4a"/></svg>
<svg class="a" style="left:168.00px;top:202.49px" width="12" height="10" viewBox="0 0 12 10"><path d="M1.9 4.95 C3.3 1.7 9.1 1.7 10.5 4.95 C9.1 8.2 3.3 8.2 1.9 4.95 Z" fill="#fff" stroke="#555" stroke-width="1.0"/><circle cx="6.2" cy="4.95" r="1.55" fill="none" stroke="#555" stroke-width="0.9"/></svg>
<svg class="a" style="left:181.90px;top:202.49px" width="11" height="10" viewBox="0 0 11 10"><path d="M2.0 2.1 H6.2 V4.3 H8.7 V8.2 H2.0 Z" fill="#fff" stroke="#2e2e2e" stroke-width="1.2"/><path d="M6.4 2.0 L8.7 4.0" fill="none" stroke="#2e2e2e" stroke-width="0.7" opacity="0.55"/></svg>
<div class="t" style="left:203.00px;top:203.79px;"><span style="display:inline-block;transform:scaleX(0.9035);transform-origin:0 0;margin-right:-0.373px">1</span></div>
<div class="t" style="left:5.50px;top:213.55px;width:147.5px;height:10px;overflow:hidden"><span style="display:inline-block;transform:scaleX(0.8683);transform-origin:0 0;margin-right:-2.337px">04-2. </span><span style="display:inline-block;transform:scaleX(0.8254);transform-origin:0 0;margin-right:-0.871px">П</span><span style="display:inline-block;transform:scaleX(0.9611);transform-origin:0 0;margin-right:-0.457px">лан</span><span style="display:inline-block;transform:scaleX(0.8683);transform-origin:0 0;margin-right:-0.254px"> </span><span style="display:inline-block;transform:scaleX(0.8254);transform-origin:0 0;margin-right:-0.740px">Т</span><span style="display:inline-block;transform:scaleX(0.9611);transform-origin:0 0;margin-right:-0.783px">еплых</span><span style="display:inline-block;transform:scaleX(0.8683);transform-origin:0 0;margin-right:-0.254px"> </span><span style="display:inline-block;transform:scaleX(0.9611);transform-origin:0 0;margin-right:-0.747px">полов</span><span style="display:inline-block;transform:scaleX(0.8683);transform-origin:0 0;margin-right:-0.508px">_</span><span style="display:inline-block;transform:scaleX(0.8254);transform-origin:0 0;margin-right:-1.611px">ТП</span><span style="display:inline-block;transform:scaleX(0.8683);transform-origin:0 0;margin-right:-1.042px"> + </span><span style="display:inline-block;transform:scaleX(0.9611);transform-origin:0 0;margin-right:-1.455px">регуляторы</span></div>
<svg class="a" style="left:151.60px;top:212.25px" width="14" height="10" viewBox="0 0 14 10"><path d="M3.7 3.8 C3.5 2.0 4.6 1.5 5.8 1.5 C6.9 1.5 7.5 2.2 7.6 3.4" fill="none" stroke="#4a4a4a" stroke-width="1.05"/><path d="M6.0 3.75 H12.0 V5.5 C12.0 7.3 10.3 8.3 9.0 8.35 C7.7 8.3 6.0 7.3 6.0 5.5 Z" fill="#fff" stroke="#4a4a4a" stroke-width="1.05"/><circle cx="9.0" cy="5.8" r="0.6" fill="#4a4a4a"/></svg>
<svg class="a" style="left:168.00px;top:212.25px" width="12" height="10" viewBox="0 0 12 10"><path d="M1.9 4.95 C3.3 1.7 9.1 1.7 10.5 4.95 C9.1 8.2 3.3 8.2 1.9 4.95 Z" fill="#fff" stroke="#555" stroke-width="1.0"/><circle cx="6.2" cy="4.95" r="1.55" fill="none" stroke="#555" stroke-width="0.9"/></svg>
<svg class="a" style="left:181.90px;top:212.25px" width="11" height="10" viewBox="0 0 11 10"><path d="M2.0 2.1 H6.2 V4.3 H8.7 V8.2 H2.0 Z" fill="#fff" stroke="#2e2e2e" stroke-width="1.2"/><path d="M6.4 2.0 L8.7 4.0" fill="none" stroke="#2e2e2e" stroke-width="0.7" opacity="0.55"/></svg>
<div class="t" style="left:203.00px;top:213.55px;"><span style="display:inline-block;transform:scaleX(0.9035);transform-origin:0 0;margin-right:-0.373px">1</span></div>
<div class="t" style="left:5.50px;top:223.32px;width:147.5px;height:10px;overflow:hidden"><span style="display:inline-block;transform:scaleX(0.8776);transform-origin:0 0;margin-right:-2.172px">05-1. </span><span style="display:inline-block;transform:scaleX(0.8342);transform-origin:0 0;margin-right:-0.827px">Э</span><span style="display:inline-block;transform:scaleX(0.9714);transform-origin:0 0;margin-right:-0.822px">лектрика</span><span style="display:inline-block;transform:scaleX(0.8776);transform-origin:0 0;margin-right:-0.472px">_</span><span style="display:inline-block;transform:scaleX(0.8342);transform-origin:0 0;margin-right:-0.831px">С</span><span style="display:inline-block;transform:scaleX(0.9714);transform-origin:0 0;margin-right:-0.332px">вод</span><span style="display:inline-block;transform:scaleX(0.8776);transform-origin:0 0;margin-right:-0.708px">...</span><span style="display:inline-block;transform:scaleX(0.9714);transform-origin:0 0;margin-right:-0.605px">щение</span><span style="display:inline-block;transform:scaleX(0.8776);transform-origin:0 0;margin-right:-0.496px">+</span><span style="display:inline-block;transform:scaleX(0.9714);transform-origin:0 0;margin-right:-0.690px">мебель</span><span style="display:inline-block;transform:scaleX(0.8776);transform-origin:0 0;margin-right:-0.496px">+</span><span style="display:inline-block;transform:scaleX(0.9714);transform-origin:0 0;margin-right:-0.640px">группы</span><span style="display:inline-block;transform:scaleX(0.8776);transform-origin:0 0;margin-right:-0.283px">)</span></div>
<svg class="a" style="left:151.60px;top:222.02px" width="14" height="10" viewBox="0 0 14 10"><path d="M3.7 3.8 C3.5 2.0 4.6 1.5 5.8 1.5 C6.9 1.5 7.5 2.2 7.6 3.4" fill="none" stroke="#4a4a4a" stroke-width="1.05"/><path d="M6.0 3.75 H12.0 V5.5 C12.0 7.3 10.3 8.3 9.0 8.35 C7.7 8.3 6.0 7.3 6.0 5.5 Z" fill="#fff" stroke="#4a4a4a" stroke-width="1.05"/><circle cx="9.0" cy="5.8" r="0.6" fill="#4a4a4a"/></svg>
<svg class="a" style="left:168.00px;top:222.02px" width="12" height="10" viewBox="0 0 12 10"><path d="M1.9 4.95 C3.3 1.7 9.1 1.7 10.5 4.95 C9.1 8.2 3.3 8.2 1.9 4.95 Z" fill="#fff" stroke="#555" stroke-width="1.0"/><circle cx="6.2" cy="4.95" r="1.55" fill="none" stroke="#555" stroke-width="0.9"/></svg>
<svg class="a" style="left:181.90px;top:222.02px" width="11" height="10" viewBox="0 0 11 10"><path d="M2.0 2.1 H6.2 V4.3 H8.7 V8.2 H2.0 Z" fill="#fff" stroke="#2e2e2e" stroke-width="1.2"/><path d="M6.4 2.0 L8.7 4.0" fill="none" stroke="#2e2e2e" stroke-width="0.7" opacity="0.55"/></svg>
<div class="t" style="left:203.00px;top:223.32px;"><span style="display:inline-block;transform:scaleX(0.9035);transform-origin:0 0;margin-right:-0.373px">1</span></div>
<div class="t" style="left:5.50px;top:233.08px;width:147.5px;height:10px;overflow:hidden"><span style="display:inline-block;transform:scaleX(0.8682);transform-origin:0 0;margin-right:-2.339px">05-2. </span><span style="display:inline-block;transform:scaleX(0.8253);transform-origin:0 0;margin-right:-0.871px">Э</span><span style="display:inline-block;transform:scaleX(0.9610);transform-origin:0 0;margin-right:-1.121px">лектрика</span><span style="display:inline-block;transform:scaleX(0.8682);transform-origin:0 0;margin-right:-0.509px">_</span><span style="display:inline-block;transform:scaleX(0.8253);transform-origin:0 0;margin-right:-0.871px">П</span><span style="display:inline-block;transform:scaleX(0.9610);transform-origin:0 0;margin-right:-0.458px">лан</span><span style="display:inline-block;transform:scaleX(0.8682);transform-origin:0 0;margin-right:-0.254px"> </span><span style="display:inline-block;transform:scaleX(0.9610);transform-origin:0 0;margin-right:-0.135px">с</span><span style="display:inline-block;transform:scaleX(0.8682);transform-origin:0 0;margin-right:-0.254px"> </span><span style="display:inline-block;transform:scaleX(0.9610);transform-origin:0 0;margin-right:-2.025px">выключателями</span></div>
<svg class="a" style="left:151.60px;top:231.78px" width="14" height="10" viewBox="0 0 14 10"><path d="M3.7 3.8 C3.5 2.0 4.6 1.5 5.8 1.5 C6.9 1.5 7.5 2.2 7.6 3.4" fill="none" stroke="#4a4a4a" stroke-width="1.05"/><path d="M6.0 3.75 H12.0 V5.5 C12.0 7.3 10.3 8.3 9.0 8.35 C7.7 8.3 6.0 7.3 6.0 5.5 Z" fill="#fff" stroke="#4a4a4a" stroke-width="1.05"/><circle cx="9.0" cy="5.8" r="0.6" fill="#4a4a4a"/></svg>
<svg class="a" style="left:168.00px;top:231.78px" width="12" height="10" viewBox="0 0 12 10"><path d="M1.9 4.95 C3.3 1.7 9.1 1.7 10.5 4.95 C9.1 8.2 3.3 8.2 1.9 4.95 Z" fill="#fff" stroke="#555" stroke-width="1.0"/><circle cx="6.2" cy="4.95" r="1.55" fill="none" stroke="#555" stroke-width="0.9"/></svg>
<svg class="a" style="left:181.90px;top:231.78px" width="11" height="10" viewBox="0 0 11 10"><path d="M2.0 2.1 H6.2 V4.3 H8.7 V8.2 H2.0 Z" fill="#fff" stroke="#2e2e2e" stroke-width="1.2"/><path d="M6.4 2.0 L8.7 4.0" fill="none" stroke="#2e2e2e" stroke-width="0.7" opacity="0.55"/></svg>
<div class="t" style="left:203.00px;top:233.08px;"><span style="display:inline-block;transform:scaleX(0.9035);transform-origin:0 0;margin-right:-0.373px">1</span></div>
<div class="t" style="left:5.50px;top:242.84px;width:147.5px;height:10px;overflow:hidden"><span style="display:inline-block;transform:scaleX(0.8757);transform-origin:0 0;margin-right:-2.205px">05-2. </span><span style="display:inline-block;transform:scaleX(0.8324);transform-origin:0 0;margin-right:-0.836px">Э</span><span style="display:inline-block;transform:scaleX(0.9693);transform-origin:0 0;margin-right:-0.883px">лектрика</span><span style="display:inline-block;transform:scaleX(0.8757);transform-origin:0 0;margin-right:-0.480px">_</span><span style="display:inline-block;transform:scaleX(0.8324);transform-origin:0 0;margin-right:-0.836px">П</span><span style="display:inline-block;transform:scaleX(0.9693);transform-origin:0 0;margin-right:-0.360px">лан</span><span style="display:inline-block;transform:scaleX(0.8757);transform-origin:0 0;margin-right:-0.240px"> </span><span style="display:inline-block;transform:scaleX(0.9693);transform-origin:0 0;margin-right:-0.107px">с</span><span style="display:inline-block;transform:scaleX(0.8757);transform-origin:0 0;margin-right:-0.240px"> </span><span style="display:inline-block;transform:scaleX(0.9693);transform-origin:0 0;margin-right:-1.028px">розетками</span><span style="display:inline-block;transform:scaleX(0.8757);transform-origin:0 0;margin-right:-0.240px"> </span><span style="display:inline-block;transform:scaleX(0.9693);transform-origin:0 0;margin-right:-0.119px">и</span><span style="display:inline-block;transform:scaleX(0.8757);transform-origin:0 0;margin-right:-0.240px"> </span><span style="display:inline-block;transform:scaleX(0.8324);transform-origin:0 0;margin-right:-1.612px">ЭВ</span></div>
<svg class="a" style="left:151.60px;top:241.54px" width="14" height="10" viewBox="0 0 14 10"><path d="M3.7 3.8 C3.5 2.0 4.6 1.5 5.8 1.5 C6.9 1.5 7.5 2.2 7.6 3.4" fill="none" stroke="#4a4a4a" stroke-width="1.05"/><path d="M6.0 3.75 H12.0 V5.5 C12.0 7.3 10.3 8.3 9.0 8.35 C7.7 8.3 6.0 7.3 6.0 5.5 Z" fill="#fff" stroke="#4a4a4a" stroke-width="1.05"/><circle cx="9.0" cy="5.8" r="0.6" fill="#4a4a4a"/></svg>
<svg class="a" style="left:168.00px;top:241.54px" width="12" height="10" viewBox="0 0 12 10"><path d="M1.9 4.95 C3.3 1.7 9.1 1.7 10.5 4.95 C9.1 8.2 3.3 8.2 1.9 4.95 Z" fill="#fff" stroke="#555" stroke-width="1.0"/><circle cx="6.2" cy="4.95" r="1.55" fill="none" stroke="#555" stroke-width="0.9"/></svg>
<svg class="a" style="left:181.90px;top:241.54px" width="11" height="10" viewBox="0 0 11 10"><path d="M2.0 2.1 H6.2 V4.3 H8.7 V8.2 H2.0 Z" fill="#fff" stroke="#2e2e2e" stroke-width="1.2"/><path d="M6.4 2.0 L8.7 4.0" fill="none" stroke="#2e2e2e" stroke-width="0.7" opacity="0.55"/></svg>
<div class="t" style="left:203.00px;top:242.84px;"><span style="display:inline-block;transform:scaleX(0.9035);transform-origin:0 0;margin-right:-0.373px">1</span></div>
<div class="t" style="left:5.50px;top:252.60px;width:147.5px;height:10px;overflow:hidden"><span style="display:inline-block;transform:scaleX(0.8743);transform-origin:0 0;margin-right:-2.231px">05-3. </span><span style="display:inline-block;transform:scaleX(0.8311);transform-origin:0 0;margin-right:-0.912px">О</span><span style="display:inline-block;transform:scaleX(0.9677);transform-origin:0 0;margin-right:-1.039px">свещение</span><span style="display:inline-block;transform:scaleX(0.8743);transform-origin:0 0;margin-right:-0.485px">_</span><span style="display:inline-block;transform:scaleX(0.8311);transform-origin:0 0;margin-right:-0.843px">П</span><span style="display:inline-block;transform:scaleX(0.9677);transform-origin:0 0;margin-right:-0.379px">лан</span><span style="display:inline-block;transform:scaleX(0.8743);transform-origin:0 0;margin-right:-0.242px"> </span><span style="display:inline-block;transform:scaleX(0.9677);transform-origin:0 0;margin-right:-0.112px">с</span><span style="display:inline-block;transform:scaleX(0.8743);transform-origin:0 0;margin-right:-0.242px"> </span><span style="display:inline-block;transform:scaleX(0.8311);transform-origin:0 0;margin-right:-2.259px">ДЕК</span><span style="display:inline-block;transform:scaleX(0.8743);transform-origin:0 0;margin-right:-0.242px">.</span><span style="display:inline-block;transform:scaleX(0.8311);transform-origin:0 0;margin-right:-5.016px">СВЕТОМ</span></div>
<svg class="a" style="left:151.60px;top:251.30px" width="14" height="10" viewBox="0 0 14 10"><path d="M3.7 3.8 C3.5 2.0 4.6 1.5 5.8 1.5 C6.9 1.5 7.5 2.2 7.6 3.4" fill="none" stroke="#4a4a4a" stroke-width="1.05"/><path d="M6.0 3.75 H12.0 V5.5 C12.0 7.3 10.3 8.3 9.0 8.35 C7.7 8.3 6.0 7.3 6.0 5.5 Z" fill="#fff" stroke="#4a4a4a" stroke-width="1.05"/><circle cx="9.0" cy="5.8" r="0.6" fill="#4a4a4a"/></svg>
<svg class="a" style="left:168.00px;top:251.30px" width="12" height="10" viewBox="0 0 12 10"><path d="M1.9 4.95 C3.3 1.7 9.1 1.7 10.5 4.95 C9.1 8.2 3.3 8.2 1.9 4.95 Z" fill="#fff" stroke="#555" stroke-width="1.0"/><circle cx="6.2" cy="4.95" r="1.55" fill="none" stroke="#555" stroke-width="0.9"/></svg>
<svg class="a" style="left:181.90px;top:251.30px" width="11" height="10" viewBox="0 0 11 10"><path d="M2.0 2.1 H6.2 V4.3 H8.7 V8.2 H2.0 Z" fill="#fff" stroke="#2e2e2e" stroke-width="1.2"/><path d="M6.4 2.0 L8.7 4.0" fill="none" stroke="#2e2e2e" stroke-width="0.7" opacity="0.55"/></svg>
<div class="t" style="left:203.00px;top:252.60px;"><span style="display:inline-block;transform:scaleX(0.9035);transform-origin:0 0;margin-right:-0.373px">1</span></div>
<div class="t" style="left:5.50px;top:262.36px;width:147.5px;height:10px;overflow:hidden"><span style="display:inline-block;transform:scaleX(0.8627);transform-origin:0 0;margin-right:-2.436px">05-3. </span><span style="display:inline-block;transform:scaleX(0.8201);transform-origin:0 0;margin-right:-0.971px">О</span><span style="display:inline-block;transform:scaleX(0.9549);transform-origin:0 0;margin-right:-1.450px">свещение</span><span style="display:inline-block;transform:scaleX(0.8627);transform-origin:0 0;margin-right:-0.530px">_</span><span style="display:inline-block;transform:scaleX(0.8201);transform-origin:0 0;margin-right:-0.898px">П</span><span style="display:inline-block;transform:scaleX(0.9549);transform-origin:0 0;margin-right:-0.530px">лан</span><span style="display:inline-block;transform:scaleX(0.8627);transform-origin:0 0;margin-right:-0.265px"> </span><span style="display:inline-block;transform:scaleX(0.9549);transform-origin:0 0;margin-right:-0.156px">с</span><span style="display:inline-block;transform:scaleX(0.8627);transform-origin:0 0;margin-right:-0.265px"> </span><span style="display:inline-block;transform:scaleX(0.8201);transform-origin:0 0;margin-right:-2.429px">ТЕХ</span><span style="display:inline-block;transform:scaleX(0.8627);transform-origin:0 0;margin-right:-0.265px">.</span><span style="display:inline-block;transform:scaleX(0.8201);transform-origin:0 0;margin-right:-5.342px">СВЕТОМ</span></div>
<svg class="a" style="left:151.60px;top:261.06px" width="14" height="10" viewBox="0 0 14 10"><path d="M3.7 3.8 C3.5 2.0 4.6 1.5 5.8 1.5 C6.9 1.5 7.5 2.2 7.6 3.4" fill="none" stroke="#4a4a4a" stroke-width="1.05"/><path d="M6.0 3.75 H12.0 V5.5 C12.0 7.3 10.3 8.3 9.0 8.35 C7.7 8.3 6.0 7.3 6.0 5.5 Z" fill="#fff" stroke="#4a4a4a" stroke-width="1.05"/><circle cx="9.0" cy="5.8" r="0.6" fill="#4a4a4a"/></svg>
<svg class="a" style="left:168.00px;top:261.06px" width="12" height="10" viewBox="0 0 12 10"><path d="M1.9 4.95 C3.3 1.7 9.1 1.7 10.5 4.95 C9.1 8.2 3.3 8.2 1.9 4.95 Z" fill="#fff" stroke="#555" stroke-width="1.0"/><circle cx="6.2" cy="4.95" r="1.55" fill="none" stroke="#555" stroke-width="0.9"/></svg>
<svg class="a" style="left:181.90px;top:261.06px" width="11" height="10" viewBox="0 0 11 10"><path d="M2.0 2.1 H6.2 V4.3 H8.7 V8.2 H2.0 Z" fill="#fff" stroke="#2e2e2e" stroke-width="1.2"/><path d="M6.4 2.0 L8.7 4.0" fill="none" stroke="#2e2e2e" stroke-width="0.7" opacity="0.55"/></svg>
<div class="t" style="left:203.00px;top:262.36px;"><span style="display:inline-block;transform:scaleX(0.9035);transform-origin:0 0;margin-right:-0.373px">1</span></div>
<div class="t" style="left:5.50px;top:272.13px;width:147.5px;height:10px;overflow:hidden"><span style="display:inline-block;transform:scaleX(0.9053);transform-origin:0 0;margin-right:-1.681px">06-1. </span><span style="display:inline-block;transform:scaleX(0.8605);transform-origin:0 0;margin-right:-0.696px">П</span>отолки<span style="display:inline-block;transform:scaleX(0.9053);transform-origin:0 0;margin-right:-0.365px">. </span><span style="display:inline-block;transform:scaleX(0.8605);transform-origin:0 0;margin-right:-0.696px">П</span>лан</div>
<svg class="a" style="left:151.60px;top:270.83px" width="14" height="10" viewBox="0 0 14 10"><path d="M3.7 3.8 C3.5 2.0 4.6 1.5 5.8 1.5 C6.9 1.5 7.5 2.2 7.6 3.4" fill="none" stroke="#4a4a4a" stroke-width="1.05"/><path d="M6.0 3.75 H12.0 V5.5 C12.0 7.3 10.3 8.3 9.0 8.35 C7.7 8.3 6.0 7.3 6.0 5.5 Z" fill="#fff" stroke="#4a4a4a" stroke-width="1.05"/><circle cx="9.0" cy="5.8" r="0.6" fill="#4a4a4a"/></svg>
<svg class="a" style="left:168.00px;top:270.83px" width="12" height="10" viewBox="0 0 12 10"><path d="M1.9 4.95 C3.3 1.7 9.1 1.7 10.5 4.95 C9.1 8.2 3.3 8.2 1.9 4.95 Z" fill="#fff" stroke="#555" stroke-width="1.0"/><circle cx="6.2" cy="4.95" r="1.55" fill="none" stroke="#555" stroke-width="0.9"/></svg>
<svg class="a" style="left:181.90px;top:270.83px" width="11" height="10" viewBox="0 0 11 10"><path d="M2.0 2.1 H6.2 V4.3 H8.7 V8.2 H2.0 Z" fill="#fff" stroke="#2e2e2e" stroke-width="1.2"/><path d="M6.4 2.0 L8.7 4.0" fill="none" stroke="#2e2e2e" stroke-width="0.7" opacity="0.55"/></svg>
<div class="t" style="left:203.00px;top:272.13px;"><span style="display:inline-block;transform:scaleX(0.9035);transform-origin:0 0;margin-right:-0.373px">1</span></div>
<div class="t" style="left:5.50px;top:281.89px;width:147.5px;height:10px;overflow:hidden"><span style="display:inline-block;transform:scaleX(0.8745);transform-origin:0 0;margin-right:-2.228px">06-1. </span><span style="display:inline-block;transform:scaleX(0.8312);transform-origin:0 0;margin-right:-0.842px">П</span><span style="display:inline-block;transform:scaleX(0.9679);transform-origin:0 0;margin-right:-0.702px">отолки</span><span style="display:inline-block;transform:scaleX(0.8745);transform-origin:0 0;margin-right:-0.484px">. </span><span style="display:inline-block;transform:scaleX(0.8312);transform-origin:0 0;margin-right:-0.842px">П</span><span style="display:inline-block;transform:scaleX(0.9679);transform-origin:0 0;margin-right:-0.377px">лан</span><span style="display:inline-block;transform:scaleX(0.8745);transform-origin:0 0;margin-right:-0.242px"> </span><span style="display:inline-block;transform:scaleX(0.9679);transform-origin:0 0;margin-right:-0.111px">с</span><span style="display:inline-block;transform:scaleX(0.8745);transform-origin:0 0;margin-right:-0.242px"> </span><span style="display:inline-block;transform:scaleX(0.9679);transform-origin:0 0;margin-right:-1.268px">закладными</span><span style="display:inline-block;transform:scaleX(0.8745);transform-origin:0 0;margin-right:-0.242px"> </span><span style="display:inline-block;transform:scaleX(0.9679);transform-origin:0 0;margin-right:-0.375px">под</span><span style="display:inline-block;transform:scaleX(0.8745);transform-origin:0 0;margin-right:-0.242px"> </span><span style="display:inline-block;transform:scaleX(0.9679);transform-origin:0 0;margin-right:-0.795px">люстры</span></div>
<svg class="a" style="left:151.60px;top:280.59px" width="14" height="10" viewBox="0 0 14 10"><path d="M3.7 3.8 C3.5 2.0 4.6 1.5 5.8 1.5 C6.9 1.5 7.5 2.2 7.6 3.4" fill="none" stroke="#4a4a4a" stroke-width="1.05"/><path d="M6.0 3.75 H12.0 V5.5 C12.0 7.3 10.3 8.3 9.0 8.35 C7.7 8.3 6.0 7.3 6.0 5.5 Z" fill="#fff" stroke="#4a4a4a" stroke-width="1.05"/><circle cx="9.0" cy="5.8" r="0.6" fill="#4a4a4a"/></svg>
<svg class="a" style="left:168.00px;top:280.59px" width="12" height="10" viewBox="0 0 12 10"><path d="M1.9 4.95 C3.3 1.7 9.1 1.7 10.5 4.95 C9.1 8.2 3.3 8.2 1.9 4.95 Z" fill="#fff" stroke="#555" stroke-width="1.0"/><circle cx="6.2" cy="4.95" r="1.55" fill="none" stroke="#555" stroke-width="0.9"/></svg>
<svg class="a" style="left:181.90px;top:280.59px" width="11" height="10" viewBox="0 0 11 10"><path d="M2.0 2.1 H6.2 V4.3 H8.7 V8.2 H2.0 Z" fill="#fff" stroke="#2e2e2e" stroke-width="1.2"/><path d="M6.4 2.0 L8.7 4.0" fill="none" stroke="#2e2e2e" stroke-width="0.7" opacity="0.55"/></svg>
<div class="t" style="left:203.00px;top:281.89px;"><span style="display:inline-block;transform:scaleX(0.9035);transform-origin:0 0;margin-right:-0.373px">1</span></div>
<div class="t" style="left:5.50px;top:291.65px;width:147.5px;height:10px;overflow:hidden"><span style="display:inline-block;transform:scaleX(0.8728);transform-origin:0 0;margin-right:-2.257px">06-1. </span><span style="display:inline-block;transform:scaleX(0.8297);transform-origin:0 0;margin-right:-0.850px">П</span><span style="display:inline-block;transform:scaleX(0.9661);transform-origin:0 0;margin-right:-0.741px">отолки</span><span style="display:inline-block;transform:scaleX(0.8728);transform-origin:0 0;margin-right:-0.490px">. </span><span style="display:inline-block;transform:scaleX(0.8297);transform-origin:0 0;margin-right:-0.788px">Р</span><span style="display:inline-block;transform:scaleX(0.9661);transform-origin:0 0;margin-right:-0.967px">азвертка</span><span style="display:inline-block;transform:scaleX(0.8728);transform-origin:0 0;margin-right:-0.539px"> (</span><span style="display:inline-block;transform:scaleX(0.9661);transform-origin:0 0;margin-right:-0.402px">для</span><span style="display:inline-block;transform:scaleX(0.8728);transform-origin:0 0;margin-right:-0.245px"> </span><span style="display:inline-block;transform:scaleX(0.9661);transform-origin:0 0;margin-right:-0.995px">разрезов</span><span style="display:inline-block;transform:scaleX(0.8728);transform-origin:0 0;margin-right:-0.294px">)</span></div>
<svg class="a" style="left:151.60px;top:290.35px" width="14" height="10" viewBox="0 0 14 10"><path d="M3.7 3.8 C3.5 2.0 4.6 1.5 5.8 1.5 C6.9 1.5 7.5 2.2 7.6 3.4" fill="none" stroke="#4a4a4a" stroke-width="1.05"/><path d="M6.0 3.75 H12.0 V5.5 C12.0 7.3 10.3 8.3 9.0 8.35 C7.7 8.3 6.0 7.3 6.0 5.5 Z" fill="#fff" stroke="#4a4a4a" stroke-width="1.05"/><circle cx="9.0" cy="5.8" r="0.6" fill="#4a4a4a"/></svg>
<svg class="a" style="left:168.00px;top:290.35px" width="12" height="10" viewBox="0 0 12 10"><path d="M1.9 4.95 C3.3 1.7 9.1 1.7 10.5 4.95 C9.1 8.2 3.3 8.2 1.9 4.95 Z" fill="#fff" stroke="#555" stroke-width="1.0"/><circle cx="6.2" cy="4.95" r="1.55" fill="none" stroke="#555" stroke-width="0.9"/></svg>
<svg class="a" style="left:181.90px;top:290.35px" width="11" height="10" viewBox="0 0 11 10"><path d="M2.0 2.1 H6.2 V4.3 H8.7 V8.2 H2.0 Z" fill="#fff" stroke="#2e2e2e" stroke-width="1.2"/><path d="M6.4 2.0 L8.7 4.0" fill="none" stroke="#2e2e2e" stroke-width="0.7" opacity="0.55"/></svg>
<div class="t" style="left:203.00px;top:291.65px;"><span style="display:inline-block;transform:scaleX(0.9035);transform-origin:0 0;margin-right:-0.373px">1</span></div>
<div class="t" style="left:5.50px;top:301.41px;width:147.5px;height:10px;overflow:hidden"><span style="display:inline-block;transform:scaleX(0.9103);transform-origin:0 0;margin-right:-1.591px">06-2. </span><span style="display:inline-block;transform:scaleX(0.8653);transform-origin:0 0;margin-right:-0.672px">П</span><span style="display:inline-block;transform:scaleX(1.0076);transform-origin:0 0;margin-right:0.166px">отолки</span><span style="display:inline-block;transform:scaleX(0.9103);transform-origin:0 0;margin-right:-0.709px"> + </span><span style="display:inline-block;transform:scaleX(1.0076);transform-origin:0 0;margin-right:0.183px">мебель</span></div>
<svg class="a" style="left:151.60px;top:300.11px" width="14" height="10" viewBox="0 0 14 10"><path d="M3.7 3.8 C3.5 2.0 4.6 1.5 5.8 1.5 C6.9 1.5 7.5 2.2 7.6 3.4" fill="none" stroke="#4a4a4a" stroke-width="1.05"/><path d="M6.0 3.75 H12.0 V5.5 C12.0 7.3 10.3 8.3 9.0 8.35 C7.7 8.3 6.0 7.3 6.0 5.5 Z" fill="#fff" stroke="#4a4a4a" stroke-width="1.05"/><circle cx="9.0" cy="5.8" r="0.6" fill="#4a4a4a"/></svg>
<svg class="a" style="left:168.00px;top:300.11px" width="12" height="10" viewBox="0 0 12 10"><path d="M1.9 4.95 C3.3 1.7 9.1 1.7 10.5 4.95 C9.1 8.2 3.3 8.2 1.9 4.95 Z" fill="#fff" stroke="#555" stroke-width="1.0"/><circle cx="6.2" cy="4.95" r="1.55" fill="none" stroke="#555" stroke-width="0.9"/></svg>
<svg class="a" style="left:181.90px;top:300.11px" width="11" height="10" viewBox="0 0 11 10"><path d="M2.0 2.1 H6.2 V4.3 H8.7 V8.2 H2.0 Z" fill="#fff" stroke="#2e2e2e" stroke-width="1.2"/><path d="M6.4 2.0 L8.7 4.0" fill="none" stroke="#2e2e2e" stroke-width="0.7" opacity="0.55"/></svg>
<div class="t" style="left:203.00px;top:301.41px;"><span style="display:inline-block;transform:scaleX(0.9035);transform-origin:0 0;margin-right:-0.373px">1</span></div>
<div class="t" style="left:5.50px;top:311.17px;width:147.5px;height:10px;overflow:hidden"><span style="display:inline-block;transform:scaleX(0.8811);transform-origin:0 0;margin-right:-2.111px">06-2. </span><span style="display:inline-block;transform:scaleX(0.8375);transform-origin:0 0;margin-right:-0.811px">П</span><span style="display:inline-block;transform:scaleX(0.9752);transform-origin:0 0;margin-right:-0.542px">отолки</span><span style="display:inline-block;transform:scaleX(0.8811);transform-origin:0 0;margin-right:-0.459px">. </span><span style="display:inline-block;transform:scaleX(0.8375);transform-origin:0 0;margin-right:-0.811px">П</span><span style="display:inline-block;transform:scaleX(0.9752);transform-origin:0 0;margin-right:-0.291px">лан</span><span style="display:inline-block;transform:scaleX(0.8811);transform-origin:0 0;margin-right:-0.229px"> </span><span style="display:inline-block;transform:scaleX(0.9752);transform-origin:0 0;margin-right:-0.086px">с</span><span style="display:inline-block;transform:scaleX(0.8811);transform-origin:0 0;margin-right:-0.229px"> </span><span style="display:inline-block;transform:scaleX(0.9752);transform-origin:0 0;margin-right:-1.011px">освещением</span></div>
<svg class="a" style="left:151.60px;top:309.87px" width="14" height="10" viewBox="0 0 14 10"><path d="M3.7 3.8 C3.5 2.0 4.6 1.5 5.8 1.5 C6.9 1.5 7.5 2.2 7.6 3.4" fill="none" stroke="#4a4a4a" stroke-width="1.05"/><path d="M6.0 3.75 H12.0 V5.5 C12.0 7.3 10.3 8.3 9.0 8.35 C7.7 8.3 6.0 7.3 6.0 5.5 Z" fill="#fff" stroke="#4a4a4a" stroke-width="1.05"/><circle cx="9.0" cy="5.8" r="0.6" fill="#4a4a4a"/></svg>
<svg class="a" style="left:168.00px;top:309.87px" width="12" height="10" viewBox="0 0 12 10"><path d="M1.9 4.95 C3.3 1.7 9.1 1.7 10.5 4.95 C9.1 8.2 3.3 8.2 1.9 4.95 Z" fill="#fff" stroke="#555" stroke-width="1.0"/><circle cx="6.2" cy="4.95" r="1.55" fill="none" stroke="#555" stroke-width="0.9"/></svg>
<svg class="a" style="left:181.90px;top:309.87px" width="11" height="10" viewBox="0 0 11 10"><path d="M2.0 2.1 H6.2 V4.3 H8.7 V8.2 H2.0 Z" fill="#fff" stroke="#2e2e2e" stroke-width="1.2"/><path d="M6.4 2.0 L8.7 4.0" fill="none" stroke="#2e2e2e" stroke-width="0.7" opacity="0.55"/></svg>
<div class="t" style="left:203.00px;top:311.17px;"><span style="display:inline-block;transform:scaleX(0.9035);transform-origin:0 0;margin-right:-0.373px">1</span></div>
<div class="t" style="left:5.50px;top:320.94px;width:147.5px;height:10px;overflow:hidden"><span style="display:inline-block;transform:scaleX(0.9026);transform-origin:0 0;margin-right:-1.728px">06-3. </span><span style="display:inline-block;transform:scaleX(0.8580);transform-origin:0 0;margin-right:-0.708px">П</span>отолки<span style="display:inline-block;transform:scaleX(0.9026);transform-origin:0 0;margin-right:-0.770px"> + </span><span style="display:inline-block;transform:scaleX(0.8580);transform-origin:0 0;margin-right:-0.657px">В</span>ент<span style="display:inline-block;transform:scaleX(0.9026);transform-origin:0 0;margin-right:-0.188px">.</span><span style="display:inline-block;transform:scaleX(0.8580);transform-origin:0 0;margin-right:-0.657px">Р</span>ешетки</div>
<svg class="a" style="left:151.60px;top:319.64px" width="14" height="10" viewBox="0 0 14 10"><path d="M3.7 3.8 C3.5 2.0 4.6 1.5 5.8 1.5 C6.9 1.5 7.5 2.2 7.6 3.4" fill="none" stroke="#4a4a4a" stroke-width="1.05"/><path d="M6.0 3.75 H12.0 V5.5 C12.0 7.3 10.3 8.3 9.0 8.35 C7.7 8.3 6.0 7.3 6.0 5.5 Z" fill="#fff" stroke="#4a4a4a" stroke-width="1.05"/><circle cx="9.0" cy="5.8" r="0.6" fill="#4a4a4a"/></svg>
<svg class="a" style="left:168.00px;top:319.64px" width="12" height="10" viewBox="0 0 12 10"><path d="M1.9 4.95 C3.3 1.7 9.1 1.7 10.5 4.95 C9.1 8.2 3.3 8.2 1.9 4.95 Z" fill="#fff" stroke="#555" stroke-width="1.0"/><circle cx="6.2" cy="4.95" r="1.55" fill="none" stroke="#555" stroke-width="0.9"/></svg>
<svg class="a" style="left:181.90px;top:319.64px" width="11" height="10" viewBox="0 0 11 10"><path d="M2.0 2.1 H6.2 V4.3 H8.7 V8.2 H2.0 Z" fill="#fff" stroke="#2e2e2e" stroke-width="1.2"/><path d="M6.4 2.0 L8.7 4.0" fill="none" stroke="#2e2e2e" stroke-width="0.7" opacity="0.55"/></svg>
<div class="t" style="left:203.00px;top:320.94px;"><span style="display:inline-block;transform:scaleX(0.9035);transform-origin:0 0;margin-right:-0.373px">1</span></div>
<div class="t" style="left:5.50px;top:330.70px;width:147.5px;height:10px;overflow:hidden"><span style="display:inline-block;transform:scaleX(0.8619);transform-origin:0 0;margin-right:-2.451px">07-1. </span><span style="display:inline-block;transform:scaleX(0.8193);transform-origin:0 0;margin-right:-0.901px">И</span><span style="display:inline-block;transform:scaleX(0.9540);transform-origin:0 0;margin-right:-0.390px">нж</span><span style="display:inline-block;transform:scaleX(0.8619);transform-origin:0 0;margin-right:-0.533px">_</span><span style="display:inline-block;transform:scaleX(0.9540);transform-origin:0 0;margin-right:-1.270px">системы</span><span style="display:inline-block;transform:scaleX(0.8619);transform-origin:0 0;margin-right:-0.799px">_ </span><span style="display:inline-block;transform:scaleX(0.8193);transform-origin:0 0;margin-right:-0.837px">А</span><span style="display:inline-block;transform:scaleX(0.9540);transform-origin:0 0;margin-right:-1.101px">кустика</span><span style="display:inline-block;transform:scaleX(0.8619);transform-origin:0 0;margin-right:-1.092px"> + </span><span style="display:inline-block;transform:scaleX(0.8193);transform-origin:0 0;margin-right:-1.738px">ЭВ</span><span style="display:inline-block;transform:scaleX(0.9540);transform-origin:0 0;margin-right:-0.992px">ыводы</span></div>
<svg class="a" style="left:151.60px;top:329.40px" width="14" height="10" viewBox="0 0 14 10"><path d="M3.7 3.8 C3.5 2.0 4.6 1.5 5.8 1.5 C6.9 1.5 7.5 2.2 7.6 3.4" fill="none" stroke="#4a4a4a" stroke-width="1.05"/><path d="M6.0 3.75 H12.0 V5.5 C12.0 7.3 10.3 8.3 9.0 8.35 C7.7 8.3 6.0 7.3 6.0 5.5 Z" fill="#fff" stroke="#4a4a4a" stroke-width="1.05"/><circle cx="9.0" cy="5.8" r="0.6" fill="#4a4a4a"/></svg>
<svg class="a" style="left:168.00px;top:329.40px" width="12" height="10" viewBox="0 0 12 10"><path d="M1.9 4.95 C3.3 1.7 9.1 1.7 10.5 4.95 C9.1 8.2 3.3 8.2 1.9 4.95 Z" fill="#fff" stroke="#555" stroke-width="1.0"/><circle cx="6.2" cy="4.95" r="1.55" fill="none" stroke="#555" stroke-width="0.9"/></svg>
<svg class="a" style="left:181.90px;top:329.40px" width="11" height="10" viewBox="0 0 11 10"><path d="M2.0 2.1 H6.2 V4.3 H8.7 V8.2 H2.0 Z" fill="#fff" stroke="#2e2e2e" stroke-width="1.2"/><path d="M6.4 2.0 L8.7 4.0" fill="none" stroke="#2e2e2e" stroke-width="0.7" opacity="0.55"/></svg>
<div class="t" style="left:203.00px;top:330.70px;"><span style="display:inline-block;transform:scaleX(0.9035);transform-origin:0 0;margin-right:-0.373px">1</span></div>
<div class="t" style="left:5.50px;top:340.46px;width:147.5px;height:10px;overflow:hidden"><span style="display:inline-block;transform:scaleX(0.8972);transform-origin:0 0;margin-right:-1.824px">07-1. </span><span style="display:inline-block;transform:scaleX(0.8529);transform-origin:0 0;margin-right:-0.734px">И</span><span style="display:inline-block;transform:scaleX(0.9931);transform-origin:0 0;margin-right:-0.058px">нж</span><span style="display:inline-block;transform:scaleX(0.8972);transform-origin:0 0;margin-right:-0.397px">_</span><span style="display:inline-block;transform:scaleX(0.9931);transform-origin:0 0;margin-right:-0.191px">системы</span><span style="display:inline-block;transform:scaleX(0.8972);transform-origin:0 0;margin-right:-0.397px">_</span><span style="display:inline-block;transform:scaleX(0.8529);transform-origin:0 0;margin-right:-5.492px">ЗВУКОВОЕ</span><span style="display:inline-block;transform:scaleX(0.8972);transform-origin:0 0;margin-right:-0.198px"> </span><span style="display:inline-block;transform:scaleX(0.8529);transform-origin:0 0;margin-right:-7.475px">ОПОВЕЩЕНИЕ</span></div>
<svg class="a" style="left:151.60px;top:339.16px" width="14" height="10" viewBox="0 0 14 10"><path d="M3.7 3.8 C3.5 2.0 4.6 1.5 5.8 1.5 C6.9 1.5 7.5 2.2 7.6 3.4" fill="none" stroke="#4a4a4a" stroke-width="1.05"/><path d="M6.0 3.75 H12.0 V5.5 C12.0 7.3 10.3 8.3 9.0 8.35 C7.7 8.3 6.0 7.3 6.0 5.5 Z" fill="#fff" stroke="#4a4a4a" stroke-width="1.05"/><circle cx="9.0" cy="5.8" r="0.6" fill="#4a4a4a"/></svg>
<svg class="a" style="left:168.00px;top:339.16px" width="12" height="10" viewBox="0 0 12 10"><path d="M1.9 4.95 C3.3 1.7 9.1 1.7 10.5 4.95 C9.1 8.2 3.3 8.2 1.9 4.95 Z" fill="#fff" stroke="#555" stroke-width="1.0"/><circle cx="6.2" cy="4.95" r="1.55" fill="none" stroke="#555" stroke-width="0.9"/></svg>
<svg class="a" style="left:181.90px;top:339.16px" width="11" height="10" viewBox="0 0 11 10"><path d="M2.0 2.1 H6.2 V4.3 H8.7 V8.2 H2.0 Z" fill="#fff" stroke="#2e2e2e" stroke-width="1.2"/><path d="M6.4 2.0 L8.7 4.0" fill="none" stroke="#2e2e2e" stroke-width="0.7" opacity="0.55"/></svg>
<div class="t" style="left:203.00px;top:340.46px;"><span style="display:inline-block;transform:scaleX(0.9035);transform-origin:0 0;margin-right:-0.373px">1</span></div>
<div class="t" style="left:5.50px;top:350.22px;width:147.5px;height:10px;overflow:hidden"><span style="display:inline-block;transform:scaleX(0.8936);transform-origin:0 0;margin-right:-1.888px">07-2. </span><span style="display:inline-block;transform:scaleX(0.8494);transform-origin:0 0;margin-right:-0.751px">И</span><span style="display:inline-block;transform:scaleX(0.9891);transform-origin:0 0;margin-right:-0.092px">нж</span><span style="display:inline-block;transform:scaleX(0.8936);transform-origin:0 0;margin-right:-0.411px">_</span><span style="display:inline-block;transform:scaleX(0.9891);transform-origin:0 0;margin-right:-0.301px">системы</span><span style="display:inline-block;transform:scaleX(0.8936);transform-origin:0 0;margin-right:-0.411px">_</span><span style="display:inline-block;transform:scaleX(0.8494);transform-origin:0 0;margin-right:-7.279px">ИЗВЕЩАТИЛИ</span><span style="display:inline-block;transform:scaleX(0.8936);transform-origin:0 0;margin-right:-0.205px"> </span><span style="display:inline-block;transform:scaleX(0.8494);transform-origin:0 0;margin-right:-2.203px">АПС</span></div>
<svg class="a" style="left:151.60px;top:348.92px" width="14" height="10" viewBox="0 0 14 10"><path d="M3.7 3.8 C3.5 2.0 4.6 1.5 5.8 1.5 C6.9 1.5 7.5 2.2 7.6 3.4" fill="none" stroke="#4a4a4a" stroke-width="1.05"/><path d="M6.0 3.75 H12.0 V5.5 C12.0 7.3 10.3 8.3 9.0 8.35 C7.7 8.3 6.0 7.3 6.0 5.5 Z" fill="#fff" stroke="#4a4a4a" stroke-width="1.05"/><circle cx="9.0" cy="5.8" r="0.6" fill="#4a4a4a"/></svg>
<svg class="a" style="left:168.00px;top:348.92px" width="12" height="10" viewBox="0 0 12 10"><path d="M1.9 4.95 C3.3 1.7 9.1 1.7 10.5 4.95 C9.1 8.2 3.3 8.2 1.9 4.95 Z" fill="#fff" stroke="#555" stroke-width="1.0"/><circle cx="6.2" cy="4.95" r="1.55" fill="none" stroke="#555" stroke-width="0.9"/></svg>
<svg class="a" style="left:181.90px;top:348.92px" width="11" height="10" viewBox="0 0 11 10"><path d="M2.0 2.1 H6.2 V4.3 H8.7 V8.2 H2.0 Z" fill="#fff" stroke="#2e2e2e" stroke-width="1.2"/><path d="M6.4 2.0 L8.7 4.0" fill="none" stroke="#2e2e2e" stroke-width="0.7" opacity="0.55"/></svg>
<div class="t" style="left:203.00px;top:350.22px;"><span style="display:inline-block;transform:scaleX(0.9035);transform-origin:0 0;margin-right:-0.373px">1</span></div>
<div class="t" style="left:5.50px;top:359.98px;width:147.5px;height:10px;overflow:hidden"><span style="display:inline-block;transform:scaleX(0.8947);transform-origin:0 0;margin-right:-1.869px">07-2. </span><span style="display:inline-block;transform:scaleX(0.8505);transform-origin:0 0;margin-right:-0.746px">И</span><span style="display:inline-block;transform:scaleX(0.9903);transform-origin:0 0;margin-right:-0.082px">нж</span><span style="display:inline-block;transform:scaleX(0.8947);transform-origin:0 0;margin-right:-0.406px">_</span><span style="display:inline-block;transform:scaleX(0.9903);transform-origin:0 0;margin-right:-0.268px">системы</span><span style="display:inline-block;transform:scaleX(0.8947);transform-origin:0 0;margin-right:-0.406px">_</span><span style="display:inline-block;transform:scaleX(0.8505);transform-origin:0 0;margin-right:-8.729px">ОБОРУДОВАНИЕ</span><span style="display:inline-block;transform:scaleX(0.8947);transform-origin:0 0;margin-right:-0.203px"> </span><span style="display:inline-block;transform:scaleX(0.8505);transform-origin:0 0;margin-right:-2.764px">АВПТ</span></div>
<svg class="a" style="left:151.60px;top:358.68px" width="14" height="10" viewBox="0 0 14 10"><path d="M3.7 3.8 C3.5 2.0 4.6 1.5 5.8 1.5 C6.9 1.5 7.5 2.2 7.6 3.4" fill="none" stroke="#4a4a4a" stroke-width="1.05"/><path d="M6.0 3.75 H12.0 V5.5 C12.0 7.3 10.3 8.3 9.0 8.35 C7.7 8.3 6.0 7.3 6.0 5.5 Z" fill="#fff" stroke="#4a4a4a" stroke-width="1.05"/><circle cx="9.0" cy="5.8" r="0.6" fill="#4a4a4a"/></svg>
<svg class="a" style="left:168.00px;top:358.68px" width="12" height="10" viewBox="0 0 12 10"><path d="M1.9 4.95 C3.3 1.7 9.1 1.7 10.5 4.95 C9.1 8.2 3.3 8.2 1.9 4.95 Z" fill="#fff" stroke="#555" stroke-width="1.0"/><circle cx="6.2" cy="4.95" r="1.55" fill="none" stroke="#555" stroke-width="0.9"/></svg>
<svg class="a" style="left:181.90px;top:358.68px" width="11" height="10" viewBox="0 0 11 10"><path d="M2.0 2.1 H6.2 V4.3 H8.7 V8.2 H2.0 Z" fill="#fff" stroke="#2e2e2e" stroke-width="1.2"/><path d="M6.4 2.0 L8.7 4.0" fill="none" stroke="#2e2e2e" stroke-width="0.7" opacity="0.55"/></svg>
<div class="t" style="left:203.00px;top:359.98px;"><span style="display:inline-block;transform:scaleX(0.9035);transform-origin:0 0;margin-right:-0.373px">1</span></div>
<div class="t" style="left:5.50px;top:369.75px;width:147.5px;height:10px;overflow:hidden"><span style="display:inline-block;transform:scaleX(0.8889);transform-origin:0 0;margin-right:-1.971px">07-2. </span><span style="display:inline-block;transform:scaleX(0.8450);transform-origin:0 0;margin-right:-0.773px">И</span><span style="display:inline-block;transform:scaleX(0.9839);transform-origin:0 0;margin-right:-0.136px">нж</span><span style="display:inline-block;transform:scaleX(0.8889);transform-origin:0 0;margin-right:-0.429px">_</span><span style="display:inline-block;transform:scaleX(0.9839);transform-origin:0 0;margin-right:-0.445px">системы</span><span style="display:inline-block;transform:scaleX(0.8889);transform-origin:0 0;margin-right:-0.429px">_</span><span style="display:inline-block;transform:scaleX(0.8450);transform-origin:0 0;margin-right:-5.563px">СВОДНЫЙ</span><span style="display:inline-block;transform:scaleX(0.8889);transform-origin:0 0;margin-right:-0.214px"> </span><span style="display:inline-block;transform:scaleX(0.8450);transform-origin:0 0;margin-right:-2.974px">ПЛАН</span><span style="display:inline-block;transform:scaleX(0.8889);transform-origin:0 0;margin-right:-0.471px"> (</span><span style="display:inline-block;transform:scaleX(0.9839);transform-origin:0 0;margin-right:-0.177px">без</span><span style="display:inline-block;transform:scaleX(0.8889);transform-origin:0 0;margin-right:-0.214px"> </span><span style="display:inline-block;transform:scaleX(0.9839);transform-origin:0 0;margin-right:-0.233px">труб</span><span style="display:inline-block;transform:scaleX(0.8889);transform-origin:0 0;margin-right:-0.257px">)</span></div>
<svg class="a" style="left:151.60px;top:368.45px" width="14" height="10" viewBox="0 0 14 10"><path d="M3.7 3.8 C3.5 2.0 4.6 1.5 5.8 1.5 C6.9 1.5 7.5 2.2 7.6 3.4" fill="none" stroke="#4a4a4a" stroke-width="1.05"/><path d="M6.0 3.75 H12.0 V5.5 C12.0 7.3 10.3 8.3 9.0 8.35 C7.7 8.3 6.0 7.3 6.0 5.5 Z" fill="#fff" stroke="#4a4a4a" stroke-width="1.05"/><circle cx="9.0" cy="5.8" r="0.6" fill="#4a4a4a"/></svg>
<svg class="a" style="left:168.00px;top:368.45px" width="12" height="10" viewBox="0 0 12 10"><path d="M1.9 4.95 C3.3 1.7 9.1 1.7 10.5 4.95 C9.1 8.2 3.3 8.2 1.9 4.95 Z" fill="#fff" stroke="#555" stroke-width="1.0"/><circle cx="6.2" cy="4.95" r="1.55" fill="none" stroke="#555" stroke-width="0.9"/></svg>
<svg class="a" style="left:181.90px;top:368.45px" width="11" height="10" viewBox="0 0 11 10"><path d="M2.0 2.1 H6.2 V4.3 H8.7 V8.2 H2.0 Z" fill="#fff" stroke="#2e2e2e" stroke-width="1.2"/><path d="M6.4 2.0 L8.7 4.0" fill="none" stroke="#2e2e2e" stroke-width="0.7" opacity="0.55"/></svg>
<div class="t" style="left:203.00px;top:369.75px;"><span style="display:inline-block;transform:scaleX(0.9035);transform-origin:0 0;margin-right:-0.373px">1</span></div>
<div class="t" style="left:5.50px;top:379.51px;width:147.5px;height:10px;overflow:hidden"><span style="display:inline-block;transform:scaleX(0.8833);transform-origin:0 0;margin-right:-2.071px">07-2. </span><span style="display:inline-block;transform:scaleX(0.8396);transform-origin:0 0;margin-right:-0.800px">И</span><span style="display:inline-block;transform:scaleX(0.9777);transform-origin:0 0;margin-right:-0.189px">нж</span><span style="display:inline-block;transform:scaleX(0.8833);transform-origin:0 0;margin-right:-0.450px">_</span><span style="display:inline-block;transform:scaleX(0.9777);transform-origin:0 0;margin-right:-0.616px">системы</span><span style="display:inline-block;transform:scaleX(0.8833);transform-origin:0 0;margin-right:-0.450px">_</span><span style="display:inline-block;transform:scaleX(0.8396);transform-origin:0 0;margin-right:-1.546px">СВ</span><span style="display:inline-block;transform:scaleX(0.8833);transform-origin:0 0;margin-right:-0.675px">...</span><span style="display:inline-block;transform:scaleX(0.8396);transform-origin:0 0;margin-right:-0.804px">Н</span><span style="display:inline-block;transform:scaleX(0.8833);transform-origin:0 0;margin-right:-0.225px"> </span><span style="display:inline-block;transform:scaleX(0.8396);transform-origin:0 0;margin-right:-4.985px">ПОЛНЫЙ</span><span style="display:inline-block;transform:scaleX(0.8833);transform-origin:0 0;margin-right:-0.495px"> (</span><span style="display:inline-block;transform:scaleX(0.9777);transform-origin:0 0;margin-right:-0.077px">с</span><span style="display:inline-block;transform:scaleX(0.8833);transform-origin:0 0;margin-right:-0.225px"> </span><span style="display:inline-block;transform:scaleX(0.9777);transform-origin:0 0;margin-right:-0.602px">трубами</span><span style="display:inline-block;transform:scaleX(0.8833);transform-origin:0 0;margin-right:-0.270px">)</span></div>
<svg class="a" style="left:151.60px;top:378.21px" width="14" height="10" viewBox="0 0 14 10"><path d="M3.7 3.8 C3.5 2.0 4.6 1.5 5.8 1.5 C6.9 1.5 7.5 2.2 7.6 3.4" fill="none" stroke="#4a4a4a" stroke-width="1.05"/><path d="M6.0 3.75 H12.0 V5.5 C12.0 7.3 10.3 8.3 9.0 8.35 C7.7 8.3 6.0 7.3 6.0 5.5 Z" fill="#fff" stroke="#4a4a4a" stroke-width="1.05"/><circle cx="9.0" cy="5.8" r="0.6" fill="#4a4a4a"/></svg>
<svg class="a" style="left:168.00px;top:378.21px" width="12" height="10" viewBox="0 0 12 10"><path d="M1.9 4.95 C3.3 1.7 9.1 1.7 10.5 4.95 C9.1 8.2 3.3 8.2 1.9 4.95 Z" fill="#fff" stroke="#555" stroke-width="1.0"/><circle cx="6.2" cy="4.95" r="1.55" fill="none" stroke="#555" stroke-width="0.9"/></svg>
<svg class="a" style="left:181.90px;top:378.21px" width="11" height="10" viewBox="0 0 11 10"><path d="M2.0 2.1 H6.2 V4.3 H8.7 V8.2 H2.0 Z" fill="#fff" stroke="#2e2e2e" stroke-width="1.2"/><path d="M6.4 2.0 L8.7 4.0" fill="none" stroke="#2e2e2e" stroke-width="0.7" opacity="0.55"/></svg>
<div class="t" style="left:203.00px;top:379.51px;"><span style="display:inline-block;transform:scaleX(0.9035);transform-origin:0 0;margin-right:-0.373px">1</span></div>
<div class="t" style="left:5.50px;top:389.27px;width:147.5px;height:10px;overflow:hidden"><span style="display:inline-block;transform:scaleX(0.8731);transform-origin:0 0;margin-right:-1.469px">08. </span><span style="display:inline-block;transform:scaleX(0.8299);transform-origin:0 0;margin-right:-0.787px">Р</span><span style="display:inline-block;transform:scaleX(0.9664);transform-origin:0 0;margin-right:-0.959px">азвертки</span><span style="display:inline-block;transform:scaleX(0.8731);transform-origin:0 0;margin-right:-0.538px"> (</span><span style="display:inline-block;transform:scaleX(0.9664);transform-origin:0 0;margin-right:-0.370px">все</span><span style="display:inline-block;transform:scaleX(0.8731);transform-origin:0 0;margin-right:-0.245px"> </span><span style="display:inline-block;transform:scaleX(0.9664);transform-origin:0 0;margin-right:-1.046px">включено</span><span style="display:inline-block;transform:scaleX(0.8731);transform-origin:0 0;margin-right:-0.293px">)</span></div>
<svg class="a" style="left:151.60px;top:387.97px" width="14" height="10" viewBox="0 0 14 10"><path d="M3.7 3.8 C3.5 2.0 4.6 1.5 5.8 1.5 C6.9 1.5 7.5 2.2 7.6 3.4" fill="none" stroke="#4a4a4a" stroke-width="1.05"/><path d="M6.0 3.75 H12.0 V5.5 C12.0 7.3 10.3 8.3 9.0 8.35 C7.7 8.3 6.0 7.3 6.0 5.5 Z" fill="#fff" stroke="#4a4a4a" stroke-width="1.05"/><circle cx="9.0" cy="5.8" r="0.6" fill="#4a4a4a"/></svg>
<svg class="a" style="left:168.00px;top:387.97px" width="12" height="10" viewBox="0 0 12 10"><path d="M1.9 4.95 C3.3 1.7 9.1 1.7 10.5 4.95 C9.1 8.2 3.3 8.2 1.9 4.95 Z" fill="#fff" stroke="#555" stroke-width="1.0"/><circle cx="6.2" cy="4.95" r="1.55" fill="none" stroke="#555" stroke-width="0.9"/></svg>
<svg class="a" style="left:181.90px;top:387.97px" width="11" height="10" viewBox="0 0 11 10"><path d="M2.0 2.1 H6.2 V4.3 H8.7 V8.2 H2.0 Z" fill="#fff" stroke="#2e2e2e" stroke-width="1.2"/><path d="M6.4 2.0 L8.7 4.0" fill="none" stroke="#2e2e2e" stroke-width="0.7" opacity="0.55"/></svg>
<div class="t" style="left:203.00px;top:389.27px;"><span style="display:inline-block;transform:scaleX(0.9035);transform-origin:0 0;margin-right:-0.373px">1</span></div>
<div class="t" style="left:5.50px;top:399.03px;width:147.5px;height:10px;overflow:hidden"><span style="display:inline-block;transform:scaleX(0.8680);transform-origin:0 0;margin-right:-1.529px">08. </span><span style="display:inline-block;transform:scaleX(0.8250);transform-origin:0 0;margin-right:-0.810px">Р</span><span style="display:inline-block;transform:scaleX(0.9607);transform-origin:0 0;margin-right:-1.122px">азвертки</span><span style="display:inline-block;transform:scaleX(0.8680);transform-origin:0 0;margin-right:-0.560px"> (</span><span style="display:inline-block;transform:scaleX(0.9607);transform-origin:0 0;margin-right:-0.734px">декор</span><span style="display:inline-block;transform:scaleX(0.8680);transform-origin:0 0;margin-right:-0.255px">.</span><span style="display:inline-block;transform:scaleX(0.8250);transform-origin:0 0;margin-right:-0.944px">О</span><span style="display:inline-block;transform:scaleX(0.9607);transform-origin:0 0;margin-right:-0.657px">свещ</span><span style="display:inline-block;transform:scaleX(0.8680);transform-origin:0 0;margin-right:-1.069px">. - </span><span style="display:inline-block;transform:scaleX(0.8250);transform-origin:0 0;margin-right:-0.797px">Л</span><span style="display:inline-block;transform:scaleX(0.9607);transform-origin:0 0;margin-right:-0.814px">юстры</span><span style="display:inline-block;transform:scaleX(0.8680);transform-origin:0 0;margin-right:-0.305px">)</span></div>
<svg class="a" style="left:151.60px;top:397.73px" width="14" height="10" viewBox="0 0 14 10"><path d="M3.7 3.8 C3.5 2.0 4.6 1.5 5.8 1.5 C6.9 1.5 7.5 2.2 7.6 3.4" fill="none" stroke="#4a4a4a" stroke-width="1.05"/><path d="M6.0 3.75 H12.0 V5.5 C12.0 7.3 10.3 8.3 9.0 8.35 C7.7 8.3 6.0 7.3 6.0 5.5 Z" fill="#fff" stroke="#4a4a4a" stroke-width="1.05"/><circle cx="9.0" cy="5.8" r="0.6" fill="#4a4a4a"/></svg>
<svg class="a" style="left:168.00px;top:397.73px" width="12" height="10" viewBox="0 0 12 10"><path d="M1.9 4.95 C3.3 1.7 9.1 1.7 10.5 4.95 C9.1 8.2 3.3 8.2 1.9 4.95 Z" fill="#fff" stroke="#555" stroke-width="1.0"/><circle cx="6.2" cy="4.95" r="1.55" fill="none" stroke="#555" stroke-width="0.9"/></svg>
<svg class="a" style="left:181.90px;top:397.73px" width="11" height="10" viewBox="0 0 11 10"><path d="M2.0 2.1 H6.2 V4.3 H8.7 V8.2 H2.0 Z" fill="#fff" stroke="#2e2e2e" stroke-width="1.2"/><path d="M6.4 2.0 L8.7 4.0" fill="none" stroke="#2e2e2e" stroke-width="0.7" opacity="0.55"/></svg>
<div class="t" style="left:203.00px;top:399.03px;"><span style="display:inline-block;transform:scaleX(0.9035);transform-origin:0 0;margin-right:-0.373px">1</span></div>
<div class="t" style="left:5.50px;top:408.79px;width:147.5px;height:10px;overflow:hidden"><span style="display:inline-block;transform:scaleX(0.8698);transform-origin:0 0;margin-right:-1.508px">08. </span><span style="display:inline-block;transform:scaleX(0.8268);transform-origin:0 0;margin-right:-0.802px">Р</span><span style="display:inline-block;transform:scaleX(0.9627);transform-origin:0 0;margin-right:-1.065px">азвертки</span><span style="display:inline-block;transform:scaleX(0.8698);transform-origin:0 0;margin-right:-0.552px"> (</span><span style="display:inline-block;transform:scaleX(0.9627);transform-origin:0 0;margin-right:-0.442px">для</span><span style="display:inline-block;transform:scaleX(0.8698);transform-origin:0 0;margin-right:-0.251px"> </span><span style="display:inline-block;transform:scaleX(0.8268);transform-origin:0 0;margin-right:-1.728px">ИИ</span><span style="display:inline-block;transform:scaleX(0.8698);transform-origin:0 0;margin-right:-0.301px">)</span></div>
<svg class="a" style="left:151.60px;top:407.49px" width="14" height="10" viewBox="0 0 14 10"><path d="M3.7 3.8 C3.5 2.0 4.6 1.5 5.8 1.5 C6.9 1.5 7.5 2.2 7.6 3.4" fill="none" stroke="#4a4a4a" stroke-width="1.05"/><path d="M6.0 3.75 H12.0 V5.5 C12.0 7.3 10.3 8.3 9.0 8.35 C7.7 8.3 6.0 7.3 6.0 5.5 Z" fill="#fff" stroke="#4a4a4a" stroke-width="1.05"/><circle cx="9.0" cy="5.8" r="0.6" fill="#4a4a4a"/></svg>
<svg class="a" style="left:168.00px;top:407.49px" width="12" height="10" viewBox="0 0 12 10"><path d="M1.9 4.95 C3.3 1.7 9.1 1.7 10.5 4.95 C9.1 8.2 3.3 8.2 1.9 4.95 Z" fill="#fff" stroke="#555" stroke-width="1.0"/><circle cx="6.2" cy="4.95" r="1.55" fill="none" stroke="#555" stroke-width="0.9"/></svg>
<svg class="a" style="left:181.90px;top:407.49px" width="11" height="10" viewBox="0 0 11 10"><path d="M2.0 2.1 H6.2 V4.3 H8.7 V8.2 H2.0 Z" fill="#fff" stroke="#2e2e2e" stroke-width="1.2"/><path d="M6.4 2.0 L8.7 4.0" fill="none" stroke="#2e2e2e" stroke-width="0.7" opacity="0.55"/></svg>
<div class="t" style="left:203.00px;top:408.79px;"><span style="display:inline-block;transform:scaleX(0.9035);transform-origin:0 0;margin-right:-0.373px">1</span></div>
<div class="t" style="left:5.50px;top:418.56px;width:147.5px;height:10px;overflow:hidden"><span style="display:inline-block;transform:scaleX(0.8716);transform-origin:0 0;margin-right:-1.487px">08. </span><span style="display:inline-block;transform:scaleX(0.8285);transform-origin:0 0;margin-right:-0.794px">Р</span><span style="display:inline-block;transform:scaleX(0.9647);transform-origin:0 0;margin-right:-1.007px">азвертки</span><span style="display:inline-block;transform:scaleX(0.8716);transform-origin:0 0;margin-right:-0.496px">_</span><span style="display:inline-block;transform:scaleX(0.8285);transform-origin:0 0;margin-right:-0.856px">П</span><span style="display:inline-block;transform:scaleX(0.9647);transform-origin:0 0;margin-right:-0.414px">лан</span><span style="display:inline-block;transform:scaleX(0.8716);transform-origin:0 0;margin-right:-0.248px"> </span><span style="display:inline-block;transform:scaleX(0.9647);transform-origin:0 0;margin-right:-0.122px">с</span><span style="display:inline-block;transform:scaleX(0.8716);transform-origin:0 0;margin-right:-0.248px"> </span><span style="display:inline-block;transform:scaleX(0.9647);transform-origin:0 0;margin-right:-1.277px">электрикой</span></div>
<svg class="a" style="left:151.60px;top:417.26px" width="14" height="10" viewBox="0 0 14 10"><path d="M3.7 3.8 C3.5 2.0 4.6 1.5 5.8 1.5 C6.9 1.5 7.5 2.2 7.6 3.4" fill="none" stroke="#4a4a4a" stroke-width="1.05"/><path d="M6.0 3.75 H12.0 V5.5 C12.0 7.3 10.3 8.3 9.0 8.35 C7.7 8.3 6.0 7.3 6.0 5.5 Z" fill="#fff" stroke="#4a4a4a" stroke-width="1.05"/><circle cx="9.0" cy="5.8" r="0.6" fill="#4a4a4a"/></svg>
<svg class="a" style="left:168.00px;top:417.26px" width="12" height="10" viewBox="0 0 12 10"><path d="M1.9 4.95 C3.3 1.7 9.1 1.7 10.5 4.95 C9.1 8.2 3.3 8.2 1.9 4.95 Z" fill="#fff" stroke="#555" stroke-width="1.0"/><circle cx="6.2" cy="4.95" r="1.55" fill="none" stroke="#555" stroke-width="0.9"/></svg>
<svg class="a" style="left:181.90px;top:417.26px" width="11" height="10" viewBox="0 0 11 10"><path d="M2.0 2.1 H6.2 V4.3 H8.7 V8.2 H2.0 Z" fill="#fff" stroke="#2e2e2e" stroke-width="1.2"/><path d="M6.4 2.0 L8.7 4.0" fill="none" stroke="#2e2e2e" stroke-width="0.7" opacity="0.55"/></svg>
<div class="t" style="left:203.00px;top:418.56px;"><span style="display:inline-block;transform:scaleX(0.9035);transform-origin:0 0;margin-right:-0.373px">1</span></div>
<div class="t" style="left:5.50px;top:428.32px;width:147.5px;height:10px;overflow:hidden"><span style="display:inline-block;transform:scaleX(0.8960);transform-origin:0 0;margin-right:-1.204px">09. </span><span style="display:inline-block;transform:scaleX(0.8517);transform-origin:0 0;margin-right:-1.251px">ТЗ</span><span style="display:inline-block;transform:scaleX(0.8960);transform-origin:0 0;margin-right:-0.402px">_</span><span style="display:inline-block;transform:scaleX(0.8517);transform-origin:0 0;margin-right:-0.743px">С</span><span style="display:inline-block;transform:scaleX(0.9917);transform-origin:0 0;margin-right:-0.254px">текляные</span><span style="display:inline-block;transform:scaleX(0.8960);transform-origin:0 0;margin-right:-0.201px"> </span><span style="display:inline-block;transform:scaleX(0.9917);transform-origin:0 0;margin-right:-0.335px">перегородки</span><span style="display:inline-block;transform:scaleX(0.8960);transform-origin:0 0;margin-right:-0.402px">_</span><span style="display:inline-block;transform:scaleX(0.8517);transform-origin:0 0;margin-right:-0.687px">Р</span><span style="display:inline-block;transform:scaleX(0.9917);transform-origin:0 0;margin-right:-0.237px">азвертки</span></div>
<svg class="a" style="left:151.60px;top:427.02px" width="14" height="10" viewBox="0 0 14 10"><path d="M3.7 3.8 C3.5 2.0 4.6 1.5 5.8 1.5 C6.9 1.5 7.5 2.2 7.6 3.4" fill="none" stroke="#4a4a4a" stroke-width="1.05"/><path d="M6.0 3.75 H12.0 V5.5 C12.0 7.3 10.3 8.3 9.0 8.35 C7.7 8.3 6.0 7.3 6.0 5.5 Z" fill="#fff" stroke="#4a4a4a" stroke-width="1.05"/><circle cx="9.0" cy="5.8" r="0.6" fill="#4a4a4a"/></svg>
<svg class="a" style="left:168.00px;top:427.02px" width="12" height="10" viewBox="0 0 12 10"><path d="M1.9 4.95 C3.3 1.7 9.1 1.7 10.5 4.95 C9.1 8.2 3.3 8.2 1.9 4.95 Z" fill="#fff" stroke="#555" stroke-width="1.0"/><circle cx="6.2" cy="4.95" r="1.55" fill="none" stroke="#555" stroke-width="0.9"/></svg>
<svg class="a" style="left:181.90px;top:427.02px" width="11" height="10" viewBox="0 0 11 10"><path d="M2.0 2.1 H6.2 V4.3 H8.7 V8.2 H2.0 Z" fill="#fff" stroke="#2e2e2e" stroke-width="1.2"/><path d="M6.4 2.0 L8.7 4.0" fill="none" stroke="#2e2e2e" stroke-width="0.7" opacity="0.55"/></svg>
<div class="t" style="left:203.00px;top:428.32px;"><span style="display:inline-block;transform:scaleX(0.9035);transform-origin:0 0;margin-right:-0.373px">1</span></div>
<div class="t" style="left:5.50px;top:438.08px;width:147.5px;height:10px;overflow:hidden"><span style="display:inline-block;transform:scaleX(0.9051);transform-origin:0 0;margin-right:-1.099px">10. </span><span style="display:inline-block;transform:scaleX(0.8603);transform-origin:0 0;margin-right:-5.557px">УСЛОВНЫЕ</span><span style="display:inline-block;transform:scaleX(0.9051);transform-origin:0 0;margin-right:-0.183px"> </span><span style="display:inline-block;transform:scaleX(0.8603);transform-origin:0 0;margin-right:-7.465px">ОБОЗНАЧЕНИЯ</span><span style="display:inline-block;transform:scaleX(0.9051);transform-origin:0 0;margin-right:-0.183px"> </span><span style="display:inline-block;transform:scaleX(0.8603);transform-origin:0 0;margin-right:-4.547px">ПРОЕКТА</span></div>
<svg class="a" style="left:151.60px;top:436.78px" width="14" height="10" viewBox="0 0 14 10"><path d="M3.7 3.8 C3.5 2.0 4.6 1.5 5.8 1.5 C6.9 1.5 7.5 2.2 7.6 3.4" fill="none" stroke="#4a4a4a" stroke-width="1.05"/><path d="M6.0 3.75 H12.0 V5.5 C12.0 7.3 10.3 8.3 9.0 8.35 C7.7 8.3 6.0 7.3 6.0 5.5 Z" fill="#fff" stroke="#4a4a4a" stroke-width="1.05"/><circle cx="9.0" cy="5.8" r="0.6" fill="#4a4a4a"/></svg>
<svg class="a" style="left:168.00px;top:436.78px" width="12" height="10" viewBox="0 0 12 10"><path d="M1.9 4.95 C3.3 1.7 9.1 1.7 10.5 4.95 C9.1 8.2 3.3 8.2 1.9 4.95 Z" fill="#fff" stroke="#555" stroke-width="1.0"/><circle cx="6.2" cy="4.95" r="1.55" fill="none" stroke="#555" stroke-width="0.9"/></svg>
<svg class="a" style="left:181.90px;top:436.78px" width="11" height="10" viewBox="0 0 11 10"><path d="M2.0 2.1 H6.2 V4.3 H8.7 V8.2 H2.0 Z" fill="#fff" stroke="#2e2e2e" stroke-width="1.2"/><path d="M6.4 2.0 L8.7 4.0" fill="none" stroke="#2e2e2e" stroke-width="0.7" opacity="0.55"/></svg>
<div class="t" style="left:203.00px;top:438.08px;"><span style="display:inline-block;transform:scaleX(0.9035);transform-origin:0 0;margin-right:-0.373px">1</span></div>
<svg class="a" style="left:217.2px;top:49.2px" width="7" height="5" viewBox="0 0 7 5"><path d="M0.8 4 L3.5 1.2 L6.2 4" fill="none" stroke="#b8b8b8" stroke-width="0.9"/></svg>
<svg class="a" style="left:217.2px;top:516.0px" width="7" height="5" viewBox="0 0 7 5"><path d="M0.8 1 L3.5 3.8 L6.2 1" fill="none" stroke="#b8b8b8" stroke-width="0.9"/></svg>
<div class="a" style="left:4.20px;top:537.40px;width:47.50px;height:12.30px;background:#e1e1e1;border:1px solid #bdbdbd;box-sizing:border-box"></div><div class="t c" style="left:-32.05px;width:120px;top:539.65px;color:#1c1c1c"><span style="display:inline-block;transform:scaleX(0.8588);transform-origin:0 0;margin-right:-0.708px">Н</span>овый<span style="display:inline-block;transform:scaleX(0.9035);transform-origin:0 0;margin-right:-0.558px">...</span></div>
<div class="a" style="left:91.10px;top:537.40px;width:46.60px;height:12.30px;background:#cccccc;border:1px solid #cacaca;box-sizing:border-box"></div><div class="t c" style="left:54.40px;width:120px;top:539.65px;color:#a3a3a3;-webkit-text-stroke:0.1px #a3a3a3"><span style="display:inline-block;transform:scaleX(0.8588);transform-origin:0 0;margin-right:-0.762px">О</span>бновить</div>
<div class="a" style="left:178.10px;top:537.40px;width:46.60px;height:12.30px;background:#e1e1e1;border:1px solid #bdbdbd;box-sizing:border-box"></div><div class="t c" style="left:141.40px;width:120px;top:539.65px;color:#1c1c1c"><span style="display:inline-block;transform:scaleX(0.8588);transform-origin:0 0;margin-right:-0.623px">У</span>далить</div>
<div class="a" style="left:227.60px;top:18.50px;width:7.00px;height:535.00px;background:#f5f5f5"></div>
<svg class="a" style="left:228.9px;top:20.6px" width="5" height="6" viewBox="0 0 5 6"><path d="M4 0.4 L1.1 3 L4 5.6 Z" fill="#1a1a1a"/></svg>
<div class="a" style="left:241.30px;top:19.80px;width:403.20px;height:12.50px;background:#d6d6d6;border-radius:1.2px"></div>
<svg class="a" style="left:253.50px;top:21.80px" width="16" height="10" viewBox="0 0 16 10"><path d="M0.1 4.7 L3.9 0.1 H14.5 V4.3 L11.5 8.7 H0.1 Z" fill="#474747"/><path d="M1.5 5.5 H11.0 M1.5 7.6 H11.0" stroke="#d9d9d9" stroke-width="0.65"/><path d="M1.8 4.3 L4.8 1.1" stroke="#d9d9d9" stroke-width="0.6"/><path d="M7.2 1.5 H9.0 M10.2 1.5 H12.4 M6.2 3.2 H8.0 M9.2 3.2 H11.2" stroke="#d9d9d9" stroke-width="0.7"/></svg>
<div class="t b" style="left:272.70px;top:22.90px;font-size:7.25px"><span style="display:inline-block;transform:scaleX(0.8828);transform-origin:0 0;margin-right:-2.482px">СЛОИ</span></div>
<div class="a" style="left:241.60px;top:36.30px;width:308.40px;height:486.70px;background:#fff"></div>
<div class="a" style="left:255.00px;top:36.50px;width:0.70px;height:9.50px;background:#ececec"></div>
<div class="a" style="left:268.40px;top:36.50px;width:0.70px;height:9.50px;background:#ececec"></div>
<div class="a" style="left:282.20px;top:36.50px;width:0.70px;height:9.50px;background:#ececec"></div>
<div class="a" style="left:303.00px;top:36.50px;width:0.70px;height:9.50px;background:#ececec"></div>
<div class="a" style="left:509.40px;top:36.50px;width:0.70px;height:9.50px;background:#ececec"></div>
<svg class="a" style="left:283.8px;top:37.8px" width="11" height="8" viewBox="0 0 11 8"><rect x="0.00" y="0.00" width="1.35" height="1.4" fill="#333"/><rect x="1.72" y="0.00" width="1.35" height="1.4" fill="#333"/><rect x="3.44" y="0.00" width="1.35" height="1.4" fill="#333"/><rect x="5.16" y="0.00" width="1.35" height="1.4" fill="#333"/><rect x="6.88" y="0.00" width="1.35" height="1.4" fill="#333"/><rect x="8.60" y="0.00" width="1.35" height="1.4" fill="#333"/><rect x="0.00" y="1.80" width="1.35" height="1.4" fill="#333"/><rect x="1.72" y="1.80" width="1.35" height="1.4" fill="#333"/><rect x="3.44" y="1.80" width="1.35" height="1.4" fill="#333"/><rect x="5.16" y="1.80" width="1.35" height="1.4" fill="#333"/><rect x="6.88" y="1.80" width="1.35" height="1.4" fill="#333"/><rect x="8.60" y="1.80" width="1.35" height="1.4" fill="#333"/><rect x="0.00" y="3.60" width="1.35" height="1.4" fill="#333"/><rect x="1.72" y="3.60" width="1.35" height="1.4" fill="#333"/><rect x="0.00" y="5.40" width="1.35" height="1.4" fill="#333"/><rect x="1.72" y="5.40" width="1.35" height="1.4" fill="#333"/></svg>
<div class="t" style="left:304.80px;top:38.00px;"><span style="display:inline-block;transform:scaleX(0.8588);transform-origin:0 0;margin-right:-0.704px">И</span>мя<span style="display:inline-block;transform:scaleX(0.9035);transform-origin:0 0;margin-right:-0.186px"> </span><span style="display:inline-block;transform:scaleX(0.8588);transform-origin:0 0;margin-right:-0.708px">С</span>лоя</div>
<svg class="a" style="left:502.3px;top:41px" width="6" height="4" viewBox="0 0 6 4"><path d="M0.3 3.5 L3 0.5 L5.7 3.5 Z" fill="#c4c4c4"/></svg>
<div class="t" style="left:510.70px;top:38.00px;"><span style="display:inline-block;transform:scaleX(0.8073);transform-origin:0 0;margin-right:-0.892px">Р</span><span style="display:inline-block;transform:scaleX(0.9400);transform-origin:0 0;margin-right:-2.158px">асширения</span></div>
<div class="a" style="left:241.70px;top:46.30px;width:41.30px;height:9.50px;background:#0a78d4"></div>
<div class="a" style="left:282.70px;top:46.20px;width:21.10px;height:9.60px;background:#ededed;border:1px solid #72aae0;box-sizing:border-box"></div>
<div class="a" style="left:303.20px;top:46.20px;width:196.40px;height:9.60px;background:#ededed;border:1px solid #72aae0;border-right:none;box-sizing:border-box"></div>
<div class="a" style="left:499.40px;top:46.20px;width:9.80px;height:9.60px;background:#0a78d4"></div>
<div class="a" style="left:509.00px;top:46.20px;width:40.00px;height:9.60px;background:#ededed;border:1px solid #72aae0;border-left:none;box-sizing:border-box"></div>
<svg class="a" style="left:239.60px;top:46.30px" width="14" height="10" viewBox="0 0 14 10"><path d="M3.7 3.8 C3.5 2.0 4.6 1.5 5.8 1.5 C6.9 1.5 7.5 2.2 7.6 3.4" fill="none" stroke="#1d4f8c" stroke-width="1.05"/><path d="M6.0 3.75 H12.0 V5.5 C12.0 7.3 10.3 8.3 9.0 8.35 C7.7 8.3 6.0 7.3 6.0 5.5 Z" fill="none" stroke="#1d4f8c" stroke-width="1.05"/><circle cx="9.0" cy="5.8" r="0.6" fill="#1d4f8c"/></svg>
<svg class="a" style="left:256.00px;top:46.30px" width="12" height="10" viewBox="0 0 12 10"><path d="M1.9 4.95 C3.3 1.7 9.1 1.7 10.5 4.95 C9.1 8.2 3.3 8.2 1.9 4.95 Z" fill="none" stroke="#1d4f8c" stroke-width="1.0"/><circle cx="6.2" cy="4.95" r="1.55" fill="none" stroke="#1d4f8c" stroke-width="0.9"/></svg>
<svg class="a" style="left:269.90px;top:46.30px" width="11" height="10" viewBox="0 0 11 10"><path d="M2.0 2.1 H6.2 V4.3 H8.7 V8.2 H2.0 Z" fill="none" stroke="#1d4f8c" stroke-width="1.2"/><path d="M6.4 2.0 L8.7 4.0" fill="none" stroke="#1d4f8c" stroke-width="0.7" opacity="0.55"/></svg>
<div class="t" style="left:284.50px;top:47.60px;color:#9a9a9a;-webkit-text-stroke:0"><span style="display:inline-block;transform:scaleX(0.9035);transform-origin:0 0;margin-right:-0.373px">1</span></div>
<div class="t" style="left:304.60px;top:47.60px;color:#8a8a8a;-webkit-text-stroke:0.1px #8a8a8a"><span style="display:inline-block;transform:scaleX(0.8588);transform-origin:0 0;margin-right:-0.708px">С</span>лой<span style="display:inline-block;transform:scaleX(0.9035);transform-origin:0 0;margin-right:-0.186px"> </span><span style="display:inline-block;transform:scaleX(0.8588);transform-origin:0 0;margin-right:-5.118px">ARCHICAD</span></div>
<svg class="a" style="left:239.60px;top:56.06px" width="14" height="10" viewBox="0 0 14 10"><path d="M7.3 4.0 V3.0 C7.3 2.1 7.9 1.7 8.75 1.7 C9.6 1.7 10.2 2.1 10.2 3.0 V4.0" fill="none" stroke="#4a4a4a" stroke-width="1.05"/><path d="M5.8 4.3 H11.7 V6.2 C11.7 8.1 10.4 8.9 8.75 8.9 C7.1 8.9 5.8 8.1 5.8 6.2 Z" fill="#fff" stroke="#4a4a4a" stroke-width="1.05"/><path d="M8.75 5.4 V7.0" stroke="#4a4a4a" stroke-width="0.9"/></svg>
<svg class="a" style="left:256.00px;top:56.06px" width="12" height="10" viewBox="0 0 12 10"><path d="M2.0 4.95 C3.5 1.9 9.1 1.9 10.6 4.95 C9.1 8.0 3.5 8.0 2.0 4.95 Z" fill="#c8c8c8" stroke="#2a2a2a" stroke-width="0.9" stroke-opacity="0.9"/><path d="M1.9 4.9 C3.2 7.6 9.4 7.6 10.7 4.9" fill="none" stroke="#2a2a2a" stroke-width="1.25"/></svg>
<svg class="a" style="left:269.90px;top:56.06px" width="11" height="10" viewBox="0 0 11 10"><path d="M2.0 2.1 H6.2 V4.3 H8.7 V8.2 H2.0 Z" fill="#fff" stroke="#2e2e2e" stroke-width="1.2"/><path d="M6.4 2.0 L8.7 4.0" fill="none" stroke="#2e2e2e" stroke-width="0.7" opacity="0.55"/></svg>
<div class="t" style="left:291.70px;top:57.36px;"><span style="display:inline-block;transform:scaleX(0.9035);transform-origin:0 0;margin-right:-0.373px">1</span></div>
<div class="t dr" style="left:304.80px;top:57.36px;"><span style="display:inline-block;transform:scaleX(0.8986);transform-origin:0 0;margin-right:-0.391px">_</span><span style="display:inline-block;transform:scaleX(0.8542);transform-origin:0 0;margin-right:-5.803px">УСЛОВНЫЕ</span><span style="display:inline-block;transform:scaleX(0.8986);transform-origin:0 0;margin-right:-0.196px"> </span><span style="display:inline-block;transform:scaleX(0.8542);transform-origin:0 0;margin-right:-7.795px">ОБОЗНАЧЕНИЯ</span><span style="display:inline-block;transform:scaleX(0.8986);transform-origin:0 0;margin-right:-0.196px"> </span><span style="display:inline-block;transform:scaleX(0.8542);transform-origin:0 0;margin-right:-4.748px">ПРОЕКТА</span></div>
<svg class="a" style="left:239.60px;top:65.82px" width="14" height="10" viewBox="0 0 14 10"><path d="M3.7 3.8 C3.5 2.0 4.6 1.5 5.8 1.5 C6.9 1.5 7.5 2.2 7.6 3.4" fill="none" stroke="#4a4a4a" stroke-width="1.05"/><path d="M6.0 3.75 H12.0 V5.5 C12.0 7.3 10.3 8.3 9.0 8.35 C7.7 8.3 6.0 7.3 6.0 5.5 Z" fill="#fff" stroke="#4a4a4a" stroke-width="1.05"/><circle cx="9.0" cy="5.8" r="0.6" fill="#4a4a4a"/></svg>
<svg class="a" style="left:256.00px;top:65.82px" width="12" height="10" viewBox="0 0 12 10"><path d="M2.0 4.95 C3.5 1.9 9.1 1.9 10.6 4.95 C9.1 8.0 3.5 8.0 2.0 4.95 Z" fill="#c8c8c8" stroke="#2a2a2a" stroke-width="0.9" stroke-opacity="0.9"/><path d="M1.9 4.9 C3.2 7.6 9.4 7.6 10.7 4.9" fill="none" stroke="#2a2a2a" stroke-width="1.25"/></svg>
<svg class="a" style="left:269.90px;top:65.82px" width="11" height="10" viewBox="0 0 11 10"><path d="M2.0 2.1 H6.2 V4.3 H8.7 V8.2 H2.0 Z" fill="#fff" stroke="#2e2e2e" stroke-width="1.2"/><path d="M6.4 2.0 L8.7 4.0" fill="none" stroke="#2e2e2e" stroke-width="0.7" opacity="0.55"/></svg>
<div class="t" style="left:291.70px;top:67.12px;"><span style="display:inline-block;transform:scaleX(0.9035);transform-origin:0 0;margin-right:-0.373px">1</span></div>
<div class="t dr" style="left:304.80px;top:67.12px;"><span style="display:inline-block;transform:scaleX(0.9019);transform-origin:0 0;margin-right:-3.028px">01______</span><span style="display:inline-block;transform:scaleX(0.8573);transform-origin:0 0;margin-right:-7.225px">КОНСТРУКТИВ</span><span style="display:inline-block;transform:scaleX(0.9019);transform-origin:0 0;margin-right:-0.189px"> </span><span style="display:inline-block;transform:scaleX(0.8573);transform-origin:0 0;margin-right:-3.771px">ОБЩИЙ</span><span style="display:inline-block;transform:scaleX(0.9019);transform-origin:0 0;margin-right:-5.300px">____________01</span></div>
<svg class="a" style="left:239.60px;top:75.59px" width="14" height="10" viewBox="0 0 14 10"><path d="M3.7 3.8 C3.5 2.0 4.6 1.5 5.8 1.5 C6.9 1.5 7.5 2.2 7.6 3.4" fill="none" stroke="#4a4a4a" stroke-width="1.05"/><path d="M6.0 3.75 H12.0 V5.5 C12.0 7.3 10.3 8.3 9.0 8.35 C7.7 8.3 6.0 7.3 6.0 5.5 Z" fill="#fff" stroke="#4a4a4a" stroke-width="1.05"/><circle cx="9.0" cy="5.8" r="0.6" fill="#4a4a4a"/></svg>
<svg class="a" style="left:256.00px;top:75.59px" width="12" height="10" viewBox="0 0 12 10"><path d="M2.0 4.95 C3.5 1.9 9.1 1.9 10.6 4.95 C9.1 8.0 3.5 8.0 2.0 4.95 Z" fill="#c8c8c8" stroke="#2a2a2a" stroke-width="0.9" stroke-opacity="0.9"/><path d="M1.9 4.9 C3.2 7.6 9.4 7.6 10.7 4.9" fill="none" stroke="#2a2a2a" stroke-width="1.25"/></svg>
<svg class="a" style="left:269.90px;top:75.59px" width="11" height="10" viewBox="0 0 11 10"><path d="M2.0 2.1 H6.2 V4.3 H8.7 V8.2 H2.0 Z" fill="#fff" stroke="#2e2e2e" stroke-width="1.2"/><path d="M6.4 2.0 L8.7 4.0" fill="none" stroke="#2e2e2e" stroke-width="0.7" opacity="0.55"/></svg>
<div class="t" style="left:291.70px;top:76.89px;"><span style="display:inline-block;transform:scaleX(0.9035);transform-origin:0 0;margin-right:-0.373px">2</span></div>
<div class="t dr" style="left:304.80px;top:76.89px;"><span style="display:inline-block;transform:scaleX(0.8665);transform-origin:0 0;margin-right:-1.546px">01_</span><span style="display:inline-block;transform:scaleX(0.8237);transform-origin:0 0;margin-right:-0.713px">К</span><span style="display:inline-block;transform:scaleX(0.9591);transform-origin:0 0;margin-right:-1.450px">онструктив</span><span style="display:inline-block;transform:scaleX(0.8665);transform-origin:0 0;margin-right:-0.823px"> - </span><span style="display:inline-block;transform:scaleX(0.8237);transform-origin:0 0;margin-right:-0.803px">Б</span><span style="display:inline-block;transform:scaleX(0.9591);transform-origin:0 0;margin-right:-0.606px">алки</span></div>
<div class="t de" style="left:510.70px;top:76.89px;"><span style="display:inline-block;transform:scaleX(0.9382);transform-origin:0 0;margin-right:-0.238px">3</span><span style="display:inline-block;transform:scaleX(0.8919);transform-origin:0 0;margin-right:-0.542px">D</span></div>
<svg class="a" style="left:239.60px;top:85.35px" width="14" height="10" viewBox="0 0 14 10"><path d="M3.7 3.8 C3.5 2.0 4.6 1.5 5.8 1.5 C6.9 1.5 7.5 2.2 7.6 3.4" fill="none" stroke="#4a4a4a" stroke-width="1.05"/><path d="M6.0 3.75 H12.0 V5.5 C12.0 7.3 10.3 8.3 9.0 8.35 C7.7 8.3 6.0 7.3 6.0 5.5 Z" fill="#fff" stroke="#4a4a4a" stroke-width="1.05"/><circle cx="9.0" cy="5.8" r="0.6" fill="#4a4a4a"/></svg>
<svg class="a" style="left:256.00px;top:85.35px" width="12" height="10" viewBox="0 0 12 10"><path d="M2.0 4.95 C3.5 1.9 9.1 1.9 10.6 4.95 C9.1 8.0 3.5 8.0 2.0 4.95 Z" fill="#c8c8c8" stroke="#2a2a2a" stroke-width="0.9" stroke-opacity="0.9"/><path d="M1.9 4.9 C3.2 7.6 9.4 7.6 10.7 4.9" fill="none" stroke="#2a2a2a" stroke-width="1.25"/></svg>
<svg class="a" style="left:269.90px;top:85.35px" width="11" height="10" viewBox="0 0 11 10"><path d="M2.0 2.1 H6.2 V4.3 H8.7 V8.2 H2.0 Z" fill="#fff" stroke="#2e2e2e" stroke-width="1.2"/><path d="M6.4 2.0 L8.7 4.0" fill="none" stroke="#2e2e2e" stroke-width="0.7" opacity="0.55"/></svg>
<div class="t" style="left:291.70px;top:86.65px;"><span style="display:inline-block;transform:scaleX(0.9035);transform-origin:0 0;margin-right:-0.373px">1</span></div>
<div class="t dr" style="left:304.80px;top:86.65px;"><span style="display:inline-block;transform:scaleX(0.8665);transform-origin:0 0;margin-right:-1.546px">01_</span><span style="display:inline-block;transform:scaleX(0.8237);transform-origin:0 0;margin-right:-0.713px">К</span><span style="display:inline-block;transform:scaleX(0.9591);transform-origin:0 0;margin-right:-1.450px">онструктив</span><span style="display:inline-block;transform:scaleX(0.8665);transform-origin:0 0;margin-right:-0.823px"> - </span><span style="display:inline-block;transform:scaleX(0.8237);transform-origin:0 0;margin-right:-0.803px">Б</span><span style="display:inline-block;transform:scaleX(0.9591);transform-origin:0 0;margin-right:-0.606px">алки</span></div>
<div class="t de" style="left:510.70px;top:86.65px;"><span style="display:inline-block;transform:scaleX(0.8214);transform-origin:0 0;margin-right:-0.827px">В</span><span style="display:inline-block;transform:scaleX(0.9565);transform-origin:0 0;margin-right:-1.172px">ысотная</span><span style="display:inline-block;transform:scaleX(0.8642);transform-origin:0 0;margin-right:-1.048px"> ...</span></div>
<svg class="a" style="left:239.60px;top:95.11px" width="14" height="10" viewBox="0 0 14 10"><path d="M3.7 3.8 C3.5 2.0 4.6 1.5 5.8 1.5 C6.9 1.5 7.5 2.2 7.6 3.4" fill="none" stroke="#4a4a4a" stroke-width="1.05"/><path d="M6.0 3.75 H12.0 V5.5 C12.0 7.3 10.3 8.3 9.0 8.35 C7.7 8.3 6.0 7.3 6.0 5.5 Z" fill="#fff" stroke="#4a4a4a" stroke-width="1.05"/><circle cx="9.0" cy="5.8" r="0.6" fill="#4a4a4a"/></svg>
<svg class="a" style="left:256.00px;top:95.11px" width="12" height="10" viewBox="0 0 12 10"><path d="M1.9 4.95 C3.3 1.7 9.1 1.7 10.5 4.95 C9.1 8.2 3.3 8.2 1.9 4.95 Z" fill="#fff" stroke="#555" stroke-width="1.0"/><circle cx="6.2" cy="4.95" r="1.55" fill="none" stroke="#555" stroke-width="0.9"/></svg>
<svg class="a" style="left:269.90px;top:95.11px" width="11" height="10" viewBox="0 0 11 10"><path d="M2.0 2.1 H6.2 V4.3 H8.7 V8.2 H2.0 Z" fill="#fff" stroke="#2e2e2e" stroke-width="1.2"/><path d="M6.4 2.0 L8.7 4.0" fill="none" stroke="#2e2e2e" stroke-width="0.7" opacity="0.55"/></svg>
<div class="t" style="left:291.70px;top:96.41px;"><span style="display:inline-block;transform:scaleX(0.9035);transform-origin:0 0;margin-right:-0.373px">2</span></div>
<div class="t dr" style="left:304.80px;top:96.41px;"><span style="display:inline-block;transform:scaleX(0.8773);transform-origin:0 0;margin-right:-1.420px">01_</span><span style="display:inline-block;transform:scaleX(0.8340);transform-origin:0 0;margin-right:-0.671px">К</span><span style="display:inline-block;transform:scaleX(0.9711);transform-origin:0 0;margin-right:-1.024px">онструктив</span><span style="display:inline-block;transform:scaleX(0.8773);transform-origin:0 0;margin-right:-0.756px"> - </span><span style="display:inline-block;transform:scaleX(0.8340);transform-origin:0 0;margin-right:-0.671px">К</span><span style="display:inline-block;transform:scaleX(0.9711);transform-origin:0 0;margin-right:-0.706px">олонны</span></div>
<div class="t de" style="left:510.70px;top:96.41px;"><span style="display:inline-block;transform:scaleX(0.9382);transform-origin:0 0;margin-right:-0.238px">3</span><span style="display:inline-block;transform:scaleX(0.8919);transform-origin:0 0;margin-right:-0.542px">D</span></div>
<svg class="a" style="left:239.60px;top:104.87px" width="14" height="10" viewBox="0 0 14 10"><path d="M3.7 3.8 C3.5 2.0 4.6 1.5 5.8 1.5 C6.9 1.5 7.5 2.2 7.6 3.4" fill="none" stroke="#4a4a4a" stroke-width="1.05"/><path d="M6.0 3.75 H12.0 V5.5 C12.0 7.3 10.3 8.3 9.0 8.35 C7.7 8.3 6.0 7.3 6.0 5.5 Z" fill="#fff" stroke="#4a4a4a" stroke-width="1.05"/><circle cx="9.0" cy="5.8" r="0.6" fill="#4a4a4a"/></svg>
<svg class="a" style="left:256.00px;top:104.87px" width="12" height="10" viewBox="0 0 12 10"><path d="M1.9 4.95 C3.3 1.7 9.1 1.7 10.5 4.95 C9.1 8.2 3.3 8.2 1.9 4.95 Z" fill="#fff" stroke="#555" stroke-width="1.0"/><circle cx="6.2" cy="4.95" r="1.55" fill="none" stroke="#555" stroke-width="0.9"/></svg>
<svg class="a" style="left:269.90px;top:104.87px" width="11" height="10" viewBox="0 0 11 10"><path d="M2.0 2.1 H6.2 V4.3 H8.7 V8.2 H2.0 Z" fill="#fff" stroke="#2e2e2e" stroke-width="1.2"/><path d="M6.4 2.0 L8.7 4.0" fill="none" stroke="#2e2e2e" stroke-width="0.7" opacity="0.55"/></svg>
<div class="t" style="left:291.70px;top:106.17px;"><span style="display:inline-block;transform:scaleX(0.9035);transform-origin:0 0;margin-right:-0.373px">2</span></div>
<div class="t dr" style="left:304.80px;top:106.17px;"><span style="display:inline-block;transform:scaleX(0.8661);transform-origin:0 0;margin-right:-1.550px">01_</span><span style="display:inline-block;transform:scaleX(0.8233);transform-origin:0 0;margin-right:-0.714px">К</span><span style="display:inline-block;transform:scaleX(0.9587);transform-origin:0 0;margin-right:-1.464px">онструктив</span><span style="display:inline-block;transform:scaleX(0.8661);transform-origin:0 0;margin-right:-0.826px"> - </span><span style="display:inline-block;transform:scaleX(0.8233);transform-origin:0 0;margin-right:-0.805px">Л</span><span style="display:inline-block;transform:scaleX(0.9587);transform-origin:0 0;margin-right:-1.123px">естницы</span><span style="display:inline-block;transform:scaleX(0.8661);transform-origin:0 0;margin-right:-0.774px"> / </span><span style="display:inline-block;transform:scaleX(0.8233);transform-origin:0 0;margin-right:-0.881px">П</span><span style="display:inline-block;transform:scaleX(0.9587);transform-origin:0 0;margin-right:-0.772px">андус</span></div>
<div class="t de" style="left:510.70px;top:106.17px;"><span style="display:inline-block;transform:scaleX(0.9382);transform-origin:0 0;margin-right:-0.238px">3</span><span style="display:inline-block;transform:scaleX(0.8919);transform-origin:0 0;margin-right:-0.542px">D</span></div>
<svg class="a" style="left:239.60px;top:114.63px" width="14" height="10" viewBox="0 0 14 10"><path d="M7.3 4.0 V3.0 C7.3 2.1 7.9 1.7 8.75 1.7 C9.6 1.7 10.2 2.1 10.2 3.0 V4.0" fill="none" stroke="#4a4a4a" stroke-width="1.05"/><path d="M5.8 4.3 H11.7 V6.2 C11.7 8.1 10.4 8.9 8.75 8.9 C7.1 8.9 5.8 8.1 5.8 6.2 Z" fill="#fff" stroke="#4a4a4a" stroke-width="1.05"/><path d="M8.75 5.4 V7.0" stroke="#4a4a4a" stroke-width="0.9"/></svg>
<svg class="a" style="left:256.00px;top:114.63px" width="12" height="10" viewBox="0 0 12 10"><path d="M2.0 4.95 C3.5 1.9 9.1 1.9 10.6 4.95 C9.1 8.0 3.5 8.0 2.0 4.95 Z" fill="#c8c8c8" stroke="#2a2a2a" stroke-width="0.9" stroke-opacity="0.9"/><path d="M1.9 4.9 C3.2 7.6 9.4 7.6 10.7 4.9" fill="none" stroke="#2a2a2a" stroke-width="1.25"/></svg>
<svg class="a" style="left:269.90px;top:114.63px" width="11" height="10" viewBox="0 0 11 10"><path d="M2.0 2.1 H6.2 V4.3 H8.7 V8.2 H2.0 Z" fill="#fff" stroke="#2e2e2e" stroke-width="1.2"/><path d="M6.4 2.0 L8.7 4.0" fill="none" stroke="#2e2e2e" stroke-width="0.7" opacity="0.55"/></svg>
<div class="t" style="left:291.70px;top:115.93px;"><span style="display:inline-block;transform:scaleX(0.9035);transform-origin:0 0;margin-right:-0.373px">2</span></div>
<div class="t dr" style="left:304.80px;top:115.93px;"><span style="display:inline-block;transform:scaleX(0.8702);transform-origin:0 0;margin-right:-1.503px">01_</span><span style="display:inline-block;transform:scaleX(0.8272);transform-origin:0 0;margin-right:-0.699px">К</span><span style="display:inline-block;transform:scaleX(0.9632);transform-origin:0 0;margin-right:-1.305px">онструктив</span><span style="display:inline-block;transform:scaleX(0.8702);transform-origin:0 0;margin-right:-0.751px"> / </span><span style="display:inline-block;transform:scaleX(0.8272);transform-origin:0 0;margin-right:-8.283px">ПЕРЕКРЫТИЯ</span><span style="display:inline-block;transform:scaleX(0.8702);transform-origin:0 0;margin-right:-0.751px"> / </span><span style="display:inline-block;transform:scaleX(0.8272);transform-origin:0 0;margin-right:-0.866px">Н</span><span style="display:inline-block;transform:scaleX(0.9632);transform-origin:0 0;margin-right:-0.558px">овая</span><span style="display:inline-block;transform:scaleX(0.8702);transform-origin:0 0;margin-right:-0.250px"> </span><span style="display:inline-block;transform:scaleX(0.9632);transform-origin:0 0;margin-right:-0.808px">стяжка</span></div>
<div class="t de" style="left:510.70px;top:115.93px;"><span style="display:inline-block;transform:scaleX(0.9382);transform-origin:0 0;margin-right:-0.238px">3</span><span style="display:inline-block;transform:scaleX(0.8919);transform-origin:0 0;margin-right:-0.542px">D</span></div>
<svg class="a" style="left:239.60px;top:124.40px" width="14" height="10" viewBox="0 0 14 10"><path d="M3.7 3.8 C3.5 2.0 4.6 1.5 5.8 1.5 C6.9 1.5 7.5 2.2 7.6 3.4" fill="none" stroke="#4a4a4a" stroke-width="1.05"/><path d="M6.0 3.75 H12.0 V5.5 C12.0 7.3 10.3 8.3 9.0 8.35 C7.7 8.3 6.0 7.3 6.0 5.5 Z" fill="#fff" stroke="#4a4a4a" stroke-width="1.05"/><circle cx="9.0" cy="5.8" r="0.6" fill="#4a4a4a"/></svg>
<svg class="a" style="left:256.00px;top:124.40px" width="12" height="10" viewBox="0 0 12 10"><path d="M2.0 4.95 C3.5 1.9 9.1 1.9 10.6 4.95 C9.1 8.0 3.5 8.0 2.0 4.95 Z" fill="#c8c8c8" stroke="#2a2a2a" stroke-width="0.9" stroke-opacity="0.9"/><path d="M1.9 4.9 C3.2 7.6 9.4 7.6 10.7 4.9" fill="none" stroke="#2a2a2a" stroke-width="1.25"/></svg>
<svg class="a" style="left:269.90px;top:124.40px" width="11" height="10" viewBox="0 0 11 10"><path d="M2.0 2.1 H6.2 V4.3 H8.7 V8.2 H2.0 Z" fill="#fff" stroke="#2e2e2e" stroke-width="1.2"/><path d="M6.4 2.0 L8.7 4.0" fill="none" stroke="#2e2e2e" stroke-width="0.7" opacity="0.55"/></svg>
<div class="t" style="left:291.70px;top:125.70px;"><span style="display:inline-block;transform:scaleX(0.9035);transform-origin:0 0;margin-right:-0.373px">2</span></div>
<div class="t dr" style="left:304.80px;top:125.70px;"><span style="display:inline-block;transform:scaleX(0.8726);transform-origin:0 0;margin-right:-1.476px">01_</span><span style="display:inline-block;transform:scaleX(0.8294);transform-origin:0 0;margin-right:-0.690px">К</span><span style="display:inline-block;transform:scaleX(0.9658);transform-origin:0 0;margin-right:-1.212px">онструктив</span><span style="display:inline-block;transform:scaleX(0.8726);transform-origin:0 0;margin-right:-0.737px"> / </span><span style="display:inline-block;transform:scaleX(0.8294);transform-origin:0 0;margin-right:-8.176px">ПЕРЕКРЫТИЯ</span><span style="display:inline-block;transform:scaleX(0.8726);transform-origin:0 0;margin-right:-0.491px"> /</span></div>
<div class="t de" style="left:510.70px;top:125.70px;"><span style="display:inline-block;transform:scaleX(0.9382);transform-origin:0 0;margin-right:-0.238px">3</span><span style="display:inline-block;transform:scaleX(0.8919);transform-origin:0 0;margin-right:-0.542px">D</span></div>
<svg class="a" style="left:239.60px;top:134.16px" width="14" height="10" viewBox="0 0 14 10"><path d="M3.7 3.8 C3.5 2.0 4.6 1.5 5.8 1.5 C6.9 1.5 7.5 2.2 7.6 3.4" fill="none" stroke="#4a4a4a" stroke-width="1.05"/><path d="M6.0 3.75 H12.0 V5.5 C12.0 7.3 10.3 8.3 9.0 8.35 C7.7 8.3 6.0 7.3 6.0 5.5 Z" fill="#fff" stroke="#4a4a4a" stroke-width="1.05"/><circle cx="9.0" cy="5.8" r="0.6" fill="#4a4a4a"/></svg>
<svg class="a" style="left:256.00px;top:134.16px" width="12" height="10" viewBox="0 0 12 10"><path d="M2.0 4.95 C3.5 1.9 9.1 1.9 10.6 4.95 C9.1 8.0 3.5 8.0 2.0 4.95 Z" fill="#c8c8c8" stroke="#2a2a2a" stroke-width="0.9" stroke-opacity="0.9"/><path d="M1.9 4.9 C3.2 7.6 9.4 7.6 10.7 4.9" fill="none" stroke="#2a2a2a" stroke-width="1.25"/></svg>
<svg class="a" style="left:269.90px;top:134.16px" width="11" height="10" viewBox="0 0 11 10"><path d="M2.0 2.1 H6.2 V4.3 H8.7 V8.2 H2.0 Z" fill="#fff" stroke="#2e2e2e" stroke-width="1.2"/><path d="M6.4 2.0 L8.7 4.0" fill="none" stroke="#2e2e2e" stroke-width="0.7" opacity="0.55"/></svg>
<div class="t" style="left:291.70px;top:135.46px;"><span style="display:inline-block;transform:scaleX(0.9035);transform-origin:0 0;margin-right:-0.373px">1</span></div>
<div class="t dr" style="left:304.80px;top:135.46px;"><span style="display:inline-block;transform:scaleX(0.8828);transform-origin:0 0;margin-right:-1.357px">01_</span><span style="display:inline-block;transform:scaleX(0.8391);transform-origin:0 0;margin-right:-0.650px">К</span><span style="display:inline-block;transform:scaleX(0.9771);transform-origin:0 0;margin-right:-0.812px">онструктив</span><span style="display:inline-block;transform:scaleX(0.8828);transform-origin:0 0;margin-right:-0.678px"> / </span><span style="display:inline-block;transform:scaleX(0.8391);transform-origin:0 0;margin-right:-0.806px">С</span><span style="display:inline-block;transform:scaleX(0.9771);transform-origin:0 0;margin-right:-0.788px">теклянные</span><span style="display:inline-block;transform:scaleX(0.8828);transform-origin:0 0;margin-right:-0.226px"> </span><span style="display:inline-block;transform:scaleX(0.9771);transform-origin:0 0;margin-right:-0.925px">перегородки</span></div>
<div class="t de" style="left:510.70px;top:135.46px;"><span style="display:inline-block;transform:scaleX(0.9382);transform-origin:0 0;margin-right:-0.238px">3</span><span style="display:inline-block;transform:scaleX(0.8919);transform-origin:0 0;margin-right:-0.542px">D</span></div>
<svg class="a" style="left:239.60px;top:143.92px" width="14" height="10" viewBox="0 0 14 10"><path d="M3.7 3.8 C3.5 2.0 4.6 1.5 5.8 1.5 C6.9 1.5 7.5 2.2 7.6 3.4" fill="none" stroke="#4a4a4a" stroke-width="1.05"/><path d="M6.0 3.75 H12.0 V5.5 C12.0 7.3 10.3 8.3 9.0 8.35 C7.7 8.3 6.0 7.3 6.0 5.5 Z" fill="#fff" stroke="#4a4a4a" stroke-width="1.05"/><circle cx="9.0" cy="5.8" r="0.6" fill="#4a4a4a"/></svg>
<svg class="a" style="left:256.00px;top:143.92px" width="12" height="10" viewBox="0 0 12 10"><path d="M1.9 4.95 C3.3 1.7 9.1 1.7 10.5 4.95 C9.1 8.2 3.3 8.2 1.9 4.95 Z" fill="#fff" stroke="#555" stroke-width="1.0"/><circle cx="6.2" cy="4.95" r="1.55" fill="none" stroke="#555" stroke-width="0.9"/></svg>
<svg class="a" style="left:269.90px;top:143.92px" width="11" height="10" viewBox="0 0 11 10"><path d="M2.0 2.1 H6.2 V4.3 H8.7 V8.2 H2.0 Z" fill="#fff" stroke="#2e2e2e" stroke-width="1.2"/><path d="M6.4 2.0 L8.7 4.0" fill="none" stroke="#2e2e2e" stroke-width="0.7" opacity="0.55"/></svg>
<div class="t" style="left:291.70px;top:145.22px;"><span style="display:inline-block;transform:scaleX(0.9035);transform-origin:0 0;margin-right:-0.373px">1</span></div>
<div class="t dr" style="left:304.80px;top:145.22px;"><span style="display:inline-block;transform:scaleX(0.8772);transform-origin:0 0;margin-right:-1.422px">01_</span><span style="display:inline-block;transform:scaleX(0.8338);transform-origin:0 0;margin-right:-0.672px">К</span><span style="display:inline-block;transform:scaleX(0.9709);transform-origin:0 0;margin-right:-1.032px">онструктив</span><span style="display:inline-block;transform:scaleX(0.8772);transform-origin:0 0;margin-right:-0.711px"> / </span><span style="display:inline-block;transform:scaleX(0.8338);transform-origin:0 0;margin-right:-0.833px">С</span><span style="display:inline-block;transform:scaleX(0.9709);transform-origin:0 0;margin-right:-0.461px">тены</span><span style="display:inline-block;transform:scaleX(0.8772);transform-origin:0 0;margin-right:-0.237px"> </span><span style="display:inline-block;transform:scaleX(0.9709);transform-origin:0 0;margin-right:-0.909px">наружние</span></div>
<div class="t de" style="left:510.70px;top:145.22px;"><span style="display:inline-block;transform:scaleX(0.9382);transform-origin:0 0;margin-right:-0.238px">3</span><span style="display:inline-block;transform:scaleX(0.8919);transform-origin:0 0;margin-right:-0.542px">D</span></div>
<svg class="a" style="left:239.60px;top:153.68px" width="14" height="10" viewBox="0 0 14 10"><path d="M3.7 3.8 C3.5 2.0 4.6 1.5 5.8 1.5 C6.9 1.5 7.5 2.2 7.6 3.4" fill="none" stroke="#4a4a4a" stroke-width="1.05"/><path d="M6.0 3.75 H12.0 V5.5 C12.0 7.3 10.3 8.3 9.0 8.35 C7.7 8.3 6.0 7.3 6.0 5.5 Z" fill="#fff" stroke="#4a4a4a" stroke-width="1.05"/><circle cx="9.0" cy="5.8" r="0.6" fill="#4a4a4a"/></svg>
<svg class="a" style="left:256.00px;top:153.68px" width="12" height="10" viewBox="0 0 12 10"><path d="M1.9 4.95 C3.3 1.7 9.1 1.7 10.5 4.95 C9.1 8.2 3.3 8.2 1.9 4.95 Z" fill="#fff" stroke="#555" stroke-width="1.0"/><circle cx="6.2" cy="4.95" r="1.55" fill="none" stroke="#555" stroke-width="0.9"/></svg>
<svg class="a" style="left:269.90px;top:153.68px" width="11" height="10" viewBox="0 0 11 10"><path d="M2.0 2.1 H6.2 V4.3 H8.7 V8.2 H2.0 Z" fill="#fff" stroke="#2e2e2e" stroke-width="1.2"/><path d="M6.4 2.0 L8.7 4.0" fill="none" stroke="#2e2e2e" stroke-width="0.7" opacity="0.55"/></svg>
<div class="t" style="left:291.70px;top:154.98px;"><span style="display:inline-block;transform:scaleX(0.9035);transform-origin:0 0;margin-right:-0.373px">1</span></div>
<div class="t dr" style="left:304.80px;top:154.98px;"><span style="display:inline-block;transform:scaleX(0.8582);transform-origin:0 0;margin-right:-1.642px">01_</span><span style="display:inline-block;transform:scaleX(0.8158);transform-origin:0 0;margin-right:-0.745px">К</span><span style="display:inline-block;transform:scaleX(0.9499);transform-origin:0 0;margin-right:-1.776px">онструктив</span><span style="display:inline-block;transform:scaleX(0.8582);transform-origin:0 0;margin-right:-0.820px"> / </span><span style="display:inline-block;transform:scaleX(0.8158);transform-origin:0 0;margin-right:-0.923px">С</span><span style="display:inline-block;transform:scaleX(0.9499);transform-origin:0 0;margin-right:-0.795px">тены</span><span style="display:inline-block;transform:scaleX(0.8582);transform-origin:0 0;margin-right:-0.273px"> </span><span style="display:inline-block;transform:scaleX(0.8158);transform-origin:0 0;margin-right:-0.923px">Н</span><span style="display:inline-block;transform:scaleX(0.9499);transform-origin:0 0;margin-right:-1.215px">есущие</span></div>
<div class="t de" style="left:510.70px;top:154.98px;"><span style="display:inline-block;transform:scaleX(0.9382);transform-origin:0 0;margin-right:-0.238px">3</span><span style="display:inline-block;transform:scaleX(0.8919);transform-origin:0 0;margin-right:-0.542px">D</span></div>
<svg class="a" style="left:239.60px;top:163.44px" width="14" height="10" viewBox="0 0 14 10"><path d="M3.7 3.8 C3.5 2.0 4.6 1.5 5.8 1.5 C6.9 1.5 7.5 2.2 7.6 3.4" fill="none" stroke="#4a4a4a" stroke-width="1.05"/><path d="M6.0 3.75 H12.0 V5.5 C12.0 7.3 10.3 8.3 9.0 8.35 C7.7 8.3 6.0 7.3 6.0 5.5 Z" fill="#fff" stroke="#4a4a4a" stroke-width="1.05"/><circle cx="9.0" cy="5.8" r="0.6" fill="#4a4a4a"/></svg>
<svg class="a" style="left:256.00px;top:163.44px" width="12" height="10" viewBox="0 0 12 10"><path d="M2.0 4.95 C3.5 1.9 9.1 1.9 10.6 4.95 C9.1 8.0 3.5 8.0 2.0 4.95 Z" fill="#c8c8c8" stroke="#2a2a2a" stroke-width="0.9" stroke-opacity="0.9"/><path d="M1.9 4.9 C3.2 7.6 9.4 7.6 10.7 4.9" fill="none" stroke="#2a2a2a" stroke-width="1.25"/></svg>
<svg class="a" style="left:269.90px;top:163.44px" width="11" height="10" viewBox="0 0 11 10"><path d="M2.0 2.1 H6.2 V4.3 H8.7 V8.2 H2.0 Z" fill="#fff" stroke="#2e2e2e" stroke-width="1.2"/><path d="M6.4 2.0 L8.7 4.0" fill="none" stroke="#2e2e2e" stroke-width="0.7" opacity="0.55"/></svg>
<div class="t" style="left:291.70px;top:164.74px;"><span style="display:inline-block;transform:scaleX(0.9035);transform-origin:0 0;margin-right:-0.373px">1</span></div>
<div class="t dr" style="left:304.80px;top:164.74px;"><span style="display:inline-block;transform:scaleX(0.8922);transform-origin:0 0;margin-right:-1.249px">01_</span><span style="display:inline-block;transform:scaleX(0.8481);transform-origin:0 0;margin-right:-0.614px">К</span><span style="display:inline-block;transform:scaleX(0.9875);transform-origin:0 0;margin-right:-0.443px">онструктив</span><span style="display:inline-block;transform:scaleX(0.8922);transform-origin:0 0;margin-right:-0.416px">/ </span><span style="display:inline-block;transform:scaleX(0.8481);transform-origin:0 0;margin-right:-0.758px">П</span><span style="display:inline-block;transform:scaleX(0.9875);transform-origin:0 0;margin-right:-0.458px">ерегородки</span><span style="display:inline-block;transform:scaleX(0.8922);transform-origin:0 0;margin-right:-0.208px"> </span><span style="display:inline-block;transform:scaleX(0.8481);transform-origin:0 0;margin-right:-1.877px">ГКЛ</span></div>
<div class="t de" style="left:510.70px;top:164.74px;"><span style="display:inline-block;transform:scaleX(0.9271);transform-origin:0 0;margin-right:-0.422px"> 3</span><span style="display:inline-block;transform:scaleX(0.8813);transform-origin:0 0;margin-right:-0.595px">D</span></div>
<svg class="a" style="left:239.60px;top:173.21px" width="14" height="10" viewBox="0 0 14 10"><path d="M3.7 3.8 C3.5 2.0 4.6 1.5 5.8 1.5 C6.9 1.5 7.5 2.2 7.6 3.4" fill="none" stroke="#4a4a4a" stroke-width="1.05"/><path d="M6.0 3.75 H12.0 V5.5 C12.0 7.3 10.3 8.3 9.0 8.35 C7.7 8.3 6.0 7.3 6.0 5.5 Z" fill="#fff" stroke="#4a4a4a" stroke-width="1.05"/><circle cx="9.0" cy="5.8" r="0.6" fill="#4a4a4a"/></svg>
<svg class="a" style="left:256.00px;top:173.21px" width="12" height="10" viewBox="0 0 12 10"><path d="M2.0 4.95 C3.5 1.9 9.1 1.9 10.6 4.95 C9.1 8.0 3.5 8.0 2.0 4.95 Z" fill="#c8c8c8" stroke="#2a2a2a" stroke-width="0.9" stroke-opacity="0.9"/><path d="M1.9 4.9 C3.2 7.6 9.4 7.6 10.7 4.9" fill="none" stroke="#2a2a2a" stroke-width="1.25"/></svg>
<svg class="a" style="left:269.90px;top:173.21px" width="11" height="10" viewBox="0 0 11 10"><path d="M2.0 2.1 H6.2 V4.3 H8.7 V8.2 H2.0 Z" fill="#fff" stroke="#2e2e2e" stroke-width="1.2"/><path d="M6.4 2.0 L8.7 4.0" fill="none" stroke="#2e2e2e" stroke-width="0.7" opacity="0.55"/></svg>
<div class="t" style="left:291.70px;top:174.51px;"><span style="display:inline-block;transform:scaleX(0.9035);transform-origin:0 0;margin-right:-0.373px">3</span></div>
<div class="t dr" style="left:304.80px;top:174.51px;"><span style="display:inline-block;transform:scaleX(0.8922);transform-origin:0 0;margin-right:-1.249px">01_</span><span style="display:inline-block;transform:scaleX(0.8481);transform-origin:0 0;margin-right:-0.614px">К</span><span style="display:inline-block;transform:scaleX(0.9875);transform-origin:0 0;margin-right:-0.443px">онструктив</span><span style="display:inline-block;transform:scaleX(0.8922);transform-origin:0 0;margin-right:-0.416px">/ </span><span style="display:inline-block;transform:scaleX(0.8481);transform-origin:0 0;margin-right:-0.758px">П</span><span style="display:inline-block;transform:scaleX(0.9875);transform-origin:0 0;margin-right:-0.458px">ерегородки</span><span style="display:inline-block;transform:scaleX(0.8922);transform-origin:0 0;margin-right:-0.208px"> </span><span style="display:inline-block;transform:scaleX(0.8481);transform-origin:0 0;margin-right:-1.877px">ГКЛ</span></div>
<div class="t de" style="left:510.70px;top:174.51px;"><span style="display:inline-block;transform:scaleX(0.9382);transform-origin:0 0;margin-right:-0.238px">3</span><span style="display:inline-block;transform:scaleX(0.8919);transform-origin:0 0;margin-right:-0.542px">D</span></div>
<svg class="a" style="left:239.60px;top:182.97px" width="14" height="10" viewBox="0 0 14 10"><path d="M3.7 3.8 C3.5 2.0 4.6 1.5 5.8 1.5 C6.9 1.5 7.5 2.2 7.6 3.4" fill="none" stroke="#4a4a4a" stroke-width="1.05"/><path d="M6.0 3.75 H12.0 V5.5 C12.0 7.3 10.3 8.3 9.0 8.35 C7.7 8.3 6.0 7.3 6.0 5.5 Z" fill="#fff" stroke="#4a4a4a" stroke-width="1.05"/><circle cx="9.0" cy="5.8" r="0.6" fill="#4a4a4a"/></svg>
<svg class="a" style="left:256.00px;top:182.97px" width="12" height="10" viewBox="0 0 12 10"><path d="M2.0 4.95 C3.5 1.9 9.1 1.9 10.6 4.95 C9.1 8.0 3.5 8.0 2.0 4.95 Z" fill="#c8c8c8" stroke="#2a2a2a" stroke-width="0.9" stroke-opacity="0.9"/><path d="M1.9 4.9 C3.2 7.6 9.4 7.6 10.7 4.9" fill="none" stroke="#2a2a2a" stroke-width="1.25"/></svg>
<svg class="a" style="left:269.90px;top:182.97px" width="11" height="10" viewBox="0 0 11 10"><path d="M2.0 2.1 H6.2 V4.3 H8.7 V8.2 H2.0 Z" fill="#fff" stroke="#2e2e2e" stroke-width="1.2"/><path d="M6.4 2.0 L8.7 4.0" fill="none" stroke="#2e2e2e" stroke-width="0.7" opacity="0.55"/></svg>
<div class="t" style="left:291.70px;top:184.27px;"><span style="display:inline-block;transform:scaleX(0.9035);transform-origin:0 0;margin-right:-0.373px">2</span></div>
<div class="t dr" style="left:304.80px;top:184.27px;"><span style="display:inline-block;transform:scaleX(0.8974);transform-origin:0 0;margin-right:-1.188px">01_</span><span style="display:inline-block;transform:scaleX(0.8530);transform-origin:0 0;margin-right:-0.594px">К</span><span style="display:inline-block;transform:scaleX(0.9933);transform-origin:0 0;margin-right:-0.238px">онструктив</span><span style="display:inline-block;transform:scaleX(0.8974);transform-origin:0 0;margin-right:-0.396px">/ </span><span style="display:inline-block;transform:scaleX(0.8530);transform-origin:0 0;margin-right:-0.733px">П</span><span style="display:inline-block;transform:scaleX(0.9933);transform-origin:0 0;margin-right:-0.246px">ерегородки</span></div>
<div class="t de" style="left:510.70px;top:184.27px;"><span style="display:inline-block;transform:scaleX(0.9382);transform-origin:0 0;margin-right:-0.238px">3</span><span style="display:inline-block;transform:scaleX(0.8919);transform-origin:0 0;margin-right:-0.542px">D</span></div>
<svg class="a" style="left:239.60px;top:192.73px" width="14" height="10" viewBox="0 0 14 10"><path d="M3.7 3.8 C3.5 2.0 4.6 1.5 5.8 1.5 C6.9 1.5 7.5 2.2 7.6 3.4" fill="none" stroke="#4a4a4a" stroke-width="1.05"/><path d="M6.0 3.75 H12.0 V5.5 C12.0 7.3 10.3 8.3 9.0 8.35 C7.7 8.3 6.0 7.3 6.0 5.5 Z" fill="#fff" stroke="#4a4a4a" stroke-width="1.05"/><circle cx="9.0" cy="5.8" r="0.6" fill="#4a4a4a"/></svg>
<svg class="a" style="left:256.00px;top:192.73px" width="12" height="10" viewBox="0 0 12 10"><path d="M2.0 4.95 C3.5 1.9 9.1 1.9 10.6 4.95 C9.1 8.0 3.5 8.0 2.0 4.95 Z" fill="#c8c8c8" stroke="#2a2a2a" stroke-width="0.9" stroke-opacity="0.9"/><path d="M1.9 4.9 C3.2 7.6 9.4 7.6 10.7 4.9" fill="none" stroke="#2a2a2a" stroke-width="1.25"/></svg>
<svg class="a" style="left:269.90px;top:192.73px" width="11" height="10" viewBox="0 0 11 10"><path d="M2.0 2.1 H6.2 V4.3 H8.7 V8.2 H2.0 Z" fill="#fff" stroke="#2e2e2e" stroke-width="1.2"/><path d="M6.4 2.0 L8.7 4.0" fill="none" stroke="#2e2e2e" stroke-width="0.7" opacity="0.55"/></svg>
<div class="t" style="left:291.70px;top:194.03px;"><span style="display:inline-block;transform:scaleX(0.9035);transform-origin:0 0;margin-right:-0.373px">1</span></div>
<div class="t dr" style="left:304.80px;top:194.03px;"><span style="display:inline-block;transform:scaleX(0.8984);transform-origin:0 0;margin-right:-3.529px">02_______</span><span style="display:inline-block;transform:scaleX(0.8540);transform-origin:0 0;margin-right:-4.595px">МОНТАЖ</span><span style="display:inline-block;transform:scaleX(0.8984);transform-origin:0 0;margin-right:-0.588px"> / </span><span style="display:inline-block;transform:scaleX(0.8540);transform-origin:0 0;margin-right:-5.957px">ДЕМОНТАЖ</span><span style="display:inline-block;transform:scaleX(0.8984);transform-origin:0 0;margin-right:-8.235px">___________________02</span></div>
<svg class="a" style="left:239.60px;top:202.49px" width="14" height="10" viewBox="0 0 14 10"><path d="M3.7 3.8 C3.5 2.0 4.6 1.5 5.8 1.5 C6.9 1.5 7.5 2.2 7.6 3.4" fill="none" stroke="#4a4a4a" stroke-width="1.05"/><path d="M6.0 3.75 H12.0 V5.5 C12.0 7.3 10.3 8.3 9.0 8.35 C7.7 8.3 6.0 7.3 6.0 5.5 Z" fill="#fff" stroke="#4a4a4a" stroke-width="1.05"/><circle cx="9.0" cy="5.8" r="0.6" fill="#4a4a4a"/></svg>
<svg class="a" style="left:256.00px;top:202.49px" width="12" height="10" viewBox="0 0 12 10"><path d="M2.0 4.95 C3.5 1.9 9.1 1.9 10.6 4.95 C9.1 8.0 3.5 8.0 2.0 4.95 Z" fill="#c8c8c8" stroke="#2a2a2a" stroke-width="0.9" stroke-opacity="0.9"/><path d="M1.9 4.9 C3.2 7.6 9.4 7.6 10.7 4.9" fill="none" stroke="#2a2a2a" stroke-width="1.25"/></svg>
<svg class="a" style="left:269.90px;top:202.49px" width="11" height="10" viewBox="0 0 11 10"><path d="M2.0 2.1 H6.2 V4.3 H8.7 V8.2 H2.0 Z" fill="#fff" stroke="#2e2e2e" stroke-width="1.2"/><path d="M6.4 2.0 L8.7 4.0" fill="none" stroke="#2e2e2e" stroke-width="0.7" opacity="0.55"/></svg>
<div class="t" style="left:291.70px;top:203.79px;"><span style="display:inline-block;transform:scaleX(0.9035);transform-origin:0 0;margin-right:-0.373px">1</span></div>
<div class="t dr" style="left:304.80px;top:203.79px;"><span style="display:inline-block;transform:scaleX(0.9071);transform-origin:0 0;margin-right:-1.076px">02_</span><span style="display:inline-block;transform:scaleX(0.8622);transform-origin:0 0;margin-right:-5.621px">ДЕМОНТАЖ</span><span style="display:inline-block;transform:scaleX(0.9071);transform-origin:0 0;margin-right:-0.538px"> / </span><span style="display:inline-block;transform:scaleX(0.8622);transform-origin:0 0;margin-right:-0.744px">О</span><span style="display:inline-block;transform:scaleX(1.0040);transform-origin:0 0;margin-right:0.115px">тверстия</span></div>
<div class="t de" style="left:510.70px;top:203.79px;"><span style="display:inline-block;transform:scaleX(0.9272);transform-origin:0 0;margin-right:-0.281px">2</span><span style="display:inline-block;transform:scaleX(0.8814);transform-origin:0 0;margin-right:-0.595px">D</span><span style="display:inline-block;transform:scaleX(0.9272);transform-origin:0 0;margin-right:-0.562px">, 3</span><span style="display:inline-block;transform:scaleX(0.8814);transform-origin:0 0;margin-right:-0.595px">D</span></div>
<svg class="a" style="left:239.60px;top:212.25px" width="14" height="10" viewBox="0 0 14 10"><path d="M3.7 3.8 C3.5 2.0 4.6 1.5 5.8 1.5 C6.9 1.5 7.5 2.2 7.6 3.4" fill="none" stroke="#4a4a4a" stroke-width="1.05"/><path d="M6.0 3.75 H12.0 V5.5 C12.0 7.3 10.3 8.3 9.0 8.35 C7.7 8.3 6.0 7.3 6.0 5.5 Z" fill="#fff" stroke="#4a4a4a" stroke-width="1.05"/><circle cx="9.0" cy="5.8" r="0.6" fill="#4a4a4a"/></svg>
<svg class="a" style="left:256.00px;top:212.25px" width="12" height="10" viewBox="0 0 12 10"><path d="M2.0 4.95 C3.5 1.9 9.1 1.9 10.6 4.95 C9.1 8.0 3.5 8.0 2.0 4.95 Z" fill="#c8c8c8" stroke="#2a2a2a" stroke-width="0.9" stroke-opacity="0.9"/><path d="M1.9 4.9 C3.2 7.6 9.4 7.6 10.7 4.9" fill="none" stroke="#2a2a2a" stroke-width="1.25"/></svg>
<svg class="a" style="left:269.90px;top:212.25px" width="11" height="10" viewBox="0 0 11 10"><path d="M2.0 2.1 H6.2 V4.3 H8.7 V8.2 H2.0 Z" fill="#fff" stroke="#2e2e2e" stroke-width="1.2"/><path d="M6.4 2.0 L8.7 4.0" fill="none" stroke="#2e2e2e" stroke-width="0.7" opacity="0.55"/></svg>
<div class="t" style="left:291.70px;top:213.55px;"><span style="display:inline-block;transform:scaleX(0.9035);transform-origin:0 0;margin-right:-0.373px">1</span></div>
<div class="t dr" style="left:304.80px;top:213.55px;"><span style="display:inline-block;transform:scaleX(0.9178);transform-origin:0 0;margin-right:-0.952px">02_</span><span style="display:inline-block;transform:scaleX(0.8724);transform-origin:0 0;margin-right:-5.204px">ДЕМОНТАЖ</span></div>
<div class="t de" style="left:510.70px;top:213.55px;"><span style="display:inline-block;transform:scaleX(0.9854);transform-origin:0 0;margin-right:-0.389px">подписи</span></div>
<svg class="a" style="left:239.60px;top:222.02px" width="14" height="10" viewBox="0 0 14 10"><path d="M3.7 3.8 C3.5 2.0 4.6 1.5 5.8 1.5 C6.9 1.5 7.5 2.2 7.6 3.4" fill="none" stroke="#4a4a4a" stroke-width="1.05"/><path d="M6.0 3.75 H12.0 V5.5 C12.0 7.3 10.3 8.3 9.0 8.35 C7.7 8.3 6.0 7.3 6.0 5.5 Z" fill="#fff" stroke="#4a4a4a" stroke-width="1.05"/><circle cx="9.0" cy="5.8" r="0.6" fill="#4a4a4a"/></svg>
<svg class="a" style="left:256.00px;top:222.02px" width="12" height="10" viewBox="0 0 12 10"><path d="M2.0 4.95 C3.5 1.9 9.1 1.9 10.6 4.95 C9.1 8.0 3.5 8.0 2.0 4.95 Z" fill="#c8c8c8" stroke="#2a2a2a" stroke-width="0.9" stroke-opacity="0.9"/><path d="M1.9 4.9 C3.2 7.6 9.4 7.6 10.7 4.9" fill="none" stroke="#2a2a2a" stroke-width="1.25"/></svg>
<svg class="a" style="left:269.90px;top:222.02px" width="11" height="10" viewBox="0 0 11 10"><path d="M2.0 2.1 H6.2 V4.3 H8.7 V8.2 H2.0 Z" fill="#fff" stroke="#2e2e2e" stroke-width="1.2"/><path d="M6.4 2.0 L8.7 4.0" fill="none" stroke="#2e2e2e" stroke-width="0.7" opacity="0.55"/></svg>
<div class="t" style="left:291.70px;top:223.32px;"><span style="display:inline-block;transform:scaleX(0.9035);transform-origin:0 0;margin-right:-0.373px">1</span></div>
<div class="t dr" style="left:304.80px;top:223.32px;"><span style="display:inline-block;transform:scaleX(0.9178);transform-origin:0 0;margin-right:-0.952px">02_</span><span style="display:inline-block;transform:scaleX(0.8724);transform-origin:0 0;margin-right:-5.204px">ДЕМОНТАЖ</span></div>
<div class="t de" style="left:510.70px;top:223.32px;"><span style="display:inline-block;transform:scaleX(0.9334);transform-origin:0 0;margin-right:-1.890px">размеры</span></div>
<svg class="a" style="left:239.60px;top:231.78px" width="14" height="10" viewBox="0 0 14 10"><path d="M3.7 3.8 C3.5 2.0 4.6 1.5 5.8 1.5 C6.9 1.5 7.5 2.2 7.6 3.4" fill="none" stroke="#4a4a4a" stroke-width="1.05"/><path d="M6.0 3.75 H12.0 V5.5 C12.0 7.3 10.3 8.3 9.0 8.35 C7.7 8.3 6.0 7.3 6.0 5.5 Z" fill="#fff" stroke="#4a4a4a" stroke-width="1.05"/><circle cx="9.0" cy="5.8" r="0.6" fill="#4a4a4a"/></svg>
<svg class="a" style="left:256.00px;top:231.78px" width="12" height="10" viewBox="0 0 12 10"><path d="M2.0 4.95 C3.5 1.9 9.1 1.9 10.6 4.95 C9.1 8.0 3.5 8.0 2.0 4.95 Z" fill="#c8c8c8" stroke="#2a2a2a" stroke-width="0.9" stroke-opacity="0.9"/><path d="M1.9 4.9 C3.2 7.6 9.4 7.6 10.7 4.9" fill="none" stroke="#2a2a2a" stroke-width="1.25"/></svg>
<svg class="a" style="left:269.90px;top:231.78px" width="11" height="10" viewBox="0 0 11 10"><path d="M2.0 2.1 H6.2 V4.3 H8.7 V8.2 H2.0 Z" fill="#fff" stroke="#2e2e2e" stroke-width="1.2"/><path d="M6.4 2.0 L8.7 4.0" fill="none" stroke="#2e2e2e" stroke-width="0.7" opacity="0.55"/></svg>
<div class="t" style="left:291.70px;top:233.08px;"><span style="display:inline-block;transform:scaleX(0.9035);transform-origin:0 0;margin-right:-0.373px">1</span></div>
<div class="t dr" style="left:304.80px;top:233.08px;"><span style="display:inline-block;transform:scaleX(0.9062);transform-origin:0 0;margin-right:-1.086px">02_</span><span style="display:inline-block;transform:scaleX(0.8614);transform-origin:0 0;margin-right:-0.801px">М</span><span style="display:inline-block;transform:scaleX(1.0030);transform-origin:0 0;margin-right:0.058px">онтаж</span><span style="display:inline-block;transform:scaleX(0.9062);transform-origin:0 0;margin-right:-0.724px">  / </span><span style="display:inline-block;transform:scaleX(0.8614);transform-origin:0 0;margin-right:-0.748px">О</span><span style="display:inline-block;transform:scaleX(1.0030);transform-origin:0 0;margin-right:0.066px">тметка</span><span style="display:inline-block;transform:scaleX(0.9062);transform-origin:0 0;margin-right:-0.181px"> </span><span style="display:inline-block;transform:scaleX(0.8614);transform-origin:0 0;margin-right:-2.706px">НОЛЬ</span></div>
<div class="t de" style="left:510.70px;top:233.08px;"><span style="display:inline-block;transform:scaleX(0.9854);transform-origin:0 0;margin-right:-0.389px">подписи</span></div>
<svg class="a" style="left:239.60px;top:241.54px" width="14" height="10" viewBox="0 0 14 10"><path d="M3.7 3.8 C3.5 2.0 4.6 1.5 5.8 1.5 C6.9 1.5 7.5 2.2 7.6 3.4" fill="none" stroke="#4a4a4a" stroke-width="1.05"/><path d="M6.0 3.75 H12.0 V5.5 C12.0 7.3 10.3 8.3 9.0 8.35 C7.7 8.3 6.0 7.3 6.0 5.5 Z" fill="#fff" stroke="#4a4a4a" stroke-width="1.05"/><circle cx="9.0" cy="5.8" r="0.6" fill="#4a4a4a"/></svg>
<svg class="a" style="left:256.00px;top:241.54px" width="12" height="10" viewBox="0 0 12 10"><path d="M2.0 4.95 C3.5 1.9 9.1 1.9 10.6 4.95 C9.1 8.0 3.5 8.0 2.0 4.95 Z" fill="#c8c8c8" stroke="#2a2a2a" stroke-width="0.9" stroke-opacity="0.9"/><path d="M1.9 4.9 C3.2 7.6 9.4 7.6 10.7 4.9" fill="none" stroke="#2a2a2a" stroke-width="1.25"/></svg>
<svg class="a" style="left:269.90px;top:241.54px" width="11" height="10" viewBox="0 0 11 10"><path d="M2.0 2.1 H6.2 V4.3 H8.7 V8.2 H2.0 Z" fill="#fff" stroke="#2e2e2e" stroke-width="1.2"/><path d="M6.4 2.0 L8.7 4.0" fill="none" stroke="#2e2e2e" stroke-width="0.7" opacity="0.55"/></svg>
<div class="t" style="left:291.70px;top:242.84px;"><span style="display:inline-block;transform:scaleX(0.9035);transform-origin:0 0;margin-right:-0.373px">1</span></div>
<div class="t dr" style="left:304.80px;top:242.84px;"><span style="display:inline-block;transform:scaleX(0.8966);transform-origin:0 0;margin-right:-1.197px">02_</span><span style="display:inline-block;transform:scaleX(0.8523);transform-origin:0 0;margin-right:-0.854px">М</span><span style="display:inline-block;transform:scaleX(0.9924);transform-origin:0 0;margin-right:-0.147px">онтаж</span><span style="display:inline-block;transform:scaleX(0.8966);transform-origin:0 0;margin-right:-0.598px"> / </span><span style="display:inline-block;transform:scaleX(0.8523);transform-origin:0 0;margin-right:-0.798px">О</span><span style="display:inline-block;transform:scaleX(0.9924);transform-origin:0 0;margin-right:-0.166px">тметка</span><span style="display:inline-block;transform:scaleX(0.8966);transform-origin:0 0;margin-right:-0.199px"> </span><span style="display:inline-block;transform:scaleX(0.9924);transform-origin:0 0;margin-right:-0.167px">стяжки</span></div>
<div class="t de" style="left:510.70px;top:242.84px;"><span style="display:inline-block;transform:scaleX(0.9854);transform-origin:0 0;margin-right:-0.389px">подписи</span></div>
<svg class="a" style="left:239.60px;top:251.30px" width="14" height="10" viewBox="0 0 14 10"><path d="M3.7 3.8 C3.5 2.0 4.6 1.5 5.8 1.5 C6.9 1.5 7.5 2.2 7.6 3.4" fill="none" stroke="#4a4a4a" stroke-width="1.05"/><path d="M6.0 3.75 H12.0 V5.5 C12.0 7.3 10.3 8.3 9.0 8.35 C7.7 8.3 6.0 7.3 6.0 5.5 Z" fill="#fff" stroke="#4a4a4a" stroke-width="1.05"/><circle cx="9.0" cy="5.8" r="0.6" fill="#4a4a4a"/></svg>
<svg class="a" style="left:256.00px;top:251.30px" width="12" height="10" viewBox="0 0 12 10"><path d="M2.0 4.95 C3.5 1.9 9.1 1.9 10.6 4.95 C9.1 8.0 3.5 8.0 2.0 4.95 Z" fill="#c8c8c8" stroke="#2a2a2a" stroke-width="0.9" stroke-opacity="0.9"/><path d="M1.9 4.9 C3.2 7.6 9.4 7.6 10.7 4.9" fill="none" stroke="#2a2a2a" stroke-width="1.25"/></svg>
<svg class="a" style="left:269.90px;top:251.30px" width="11" height="10" viewBox="0 0 11 10"><path d="M2.0 2.1 H6.2 V4.3 H8.7 V8.2 H2.0 Z" fill="#fff" stroke="#2e2e2e" stroke-width="1.2"/><path d="M6.4 2.0 L8.7 4.0" fill="none" stroke="#2e2e2e" stroke-width="0.7" opacity="0.55"/></svg>
<div class="t" style="left:291.70px;top:252.60px;"><span style="display:inline-block;transform:scaleX(0.9035);transform-origin:0 0;margin-right:-0.373px">1</span></div>
<div class="t dr" style="left:304.80px;top:252.60px;"><span style="display:inline-block;transform:scaleX(0.9064);transform-origin:0 0;margin-right:-1.083px">02_</span><span style="display:inline-block;transform:scaleX(0.8616);transform-origin:0 0;margin-right:-0.800px">М</span><span style="display:inline-block;transform:scaleX(1.0033);transform-origin:0 0;margin-right:0.064px">онтаж</span><span style="display:inline-block;transform:scaleX(0.9064);transform-origin:0 0;margin-right:-0.541px"> / </span><span style="display:inline-block;transform:scaleX(0.8616);transform-origin:0 0;margin-right:-0.690px">П</span><span style="display:inline-block;transform:scaleX(1.0033);transform-origin:0 0;margin-right:0.121px">ерегородки</span><span style="display:inline-block;transform:scaleX(0.9064);transform-origin:0 0;margin-right:-0.541px"> / </span><span style="display:inline-block;transform:scaleX(0.8616);transform-origin:0 0;margin-right:-0.559px">К</span><span style="display:inline-block;transform:scaleX(1.0033);transform-origin:0 0;margin-right:0.117px">онструктив</span></div>
<div class="t de" style="left:510.70px;top:252.60px;"><span style="display:inline-block;transform:scaleX(0.9854);transform-origin:0 0;margin-right:-0.389px">подписи</span></div>
<svg class="a" style="left:239.60px;top:261.06px" width="14" height="10" viewBox="0 0 14 10"><path d="M3.7 3.8 C3.5 2.0 4.6 1.5 5.8 1.5 C6.9 1.5 7.5 2.2 7.6 3.4" fill="none" stroke="#4a4a4a" stroke-width="1.05"/><path d="M6.0 3.75 H12.0 V5.5 C12.0 7.3 10.3 8.3 9.0 8.35 C7.7 8.3 6.0 7.3 6.0 5.5 Z" fill="#fff" stroke="#4a4a4a" stroke-width="1.05"/><circle cx="9.0" cy="5.8" r="0.6" fill="#4a4a4a"/></svg>
<svg class="a" style="left:256.00px;top:261.06px" width="12" height="10" viewBox="0 0 12 10"><path d="M2.0 4.95 C3.5 1.9 9.1 1.9 10.6 4.95 C9.1 8.0 3.5 8.0 2.0 4.95 Z" fill="#c8c8c8" stroke="#2a2a2a" stroke-width="0.9" stroke-opacity="0.9"/><path d="M1.9 4.9 C3.2 7.6 9.4 7.6 10.7 4.9" fill="none" stroke="#2a2a2a" stroke-width="1.25"/></svg>
<svg class="a" style="left:269.90px;top:261.06px" width="11" height="10" viewBox="0 0 11 10"><path d="M2.0 2.1 H6.2 V4.3 H8.7 V8.2 H2.0 Z" fill="#fff" stroke="#2e2e2e" stroke-width="1.2"/><path d="M6.4 2.0 L8.7 4.0" fill="none" stroke="#2e2e2e" stroke-width="0.7" opacity="0.55"/></svg>
<div class="t" style="left:291.70px;top:262.36px;"><span style="display:inline-block;transform:scaleX(0.9035);transform-origin:0 0;margin-right:-0.373px">1</span></div>
<div class="t dr" style="left:304.80px;top:262.36px;"><span style="display:inline-block;transform:scaleX(0.9064);transform-origin:0 0;margin-right:-1.083px">02_</span><span style="display:inline-block;transform:scaleX(0.8616);transform-origin:0 0;margin-right:-0.800px">М</span><span style="display:inline-block;transform:scaleX(1.0033);transform-origin:0 0;margin-right:0.064px">онтаж</span><span style="display:inline-block;transform:scaleX(0.9064);transform-origin:0 0;margin-right:-0.541px"> / </span><span style="display:inline-block;transform:scaleX(0.8616);transform-origin:0 0;margin-right:-0.690px">П</span><span style="display:inline-block;transform:scaleX(1.0033);transform-origin:0 0;margin-right:0.121px">ерегородки</span><span style="display:inline-block;transform:scaleX(0.9064);transform-origin:0 0;margin-right:-0.541px"> / </span><span style="display:inline-block;transform:scaleX(0.8616);transform-origin:0 0;margin-right:-0.559px">К</span><span style="display:inline-block;transform:scaleX(1.0033);transform-origin:0 0;margin-right:0.117px">онструктив</span></div>
<div class="t de" style="left:510.70px;top:262.36px;"><span style="display:inline-block;transform:scaleX(0.9442);transform-origin:0 0;margin-right:-1.305px">размер</span></div>
<svg class="a" style="left:239.60px;top:270.83px" width="14" height="10" viewBox="0 0 14 10"><path d="M3.7 3.8 C3.5 2.0 4.6 1.5 5.8 1.5 C6.9 1.5 7.5 2.2 7.6 3.4" fill="none" stroke="#4a4a4a" stroke-width="1.05"/><path d="M6.0 3.75 H12.0 V5.5 C12.0 7.3 10.3 8.3 9.0 8.35 C7.7 8.3 6.0 7.3 6.0 5.5 Z" fill="#fff" stroke="#4a4a4a" stroke-width="1.05"/><circle cx="9.0" cy="5.8" r="0.6" fill="#4a4a4a"/></svg>
<svg class="a" style="left:256.00px;top:270.83px" width="12" height="10" viewBox="0 0 12 10"><path d="M2.0 4.95 C3.5 1.9 9.1 1.9 10.6 4.95 C9.1 8.0 3.5 8.0 2.0 4.95 Z" fill="#c8c8c8" stroke="#2a2a2a" stroke-width="0.9" stroke-opacity="0.9"/><path d="M1.9 4.9 C3.2 7.6 9.4 7.6 10.7 4.9" fill="none" stroke="#2a2a2a" stroke-width="1.25"/></svg>
<svg class="a" style="left:269.90px;top:270.83px" width="11" height="10" viewBox="0 0 11 10"><path d="M2.0 2.1 H6.2 V4.3 H8.7 V8.2 H2.0 Z" fill="#fff" stroke="#2e2e2e" stroke-width="1.2"/><path d="M6.4 2.0 L8.7 4.0" fill="none" stroke="#2e2e2e" stroke-width="0.7" opacity="0.55"/></svg>
<div class="t" style="left:291.70px;top:272.13px;"><span style="display:inline-block;transform:scaleX(0.9035);transform-origin:0 0;margin-right:-0.373px">1</span></div>
<div class="t dr" style="left:304.80px;top:272.13px;"><span style="display:inline-block;transform:scaleX(0.9111);transform-origin:0 0;margin-right:-1.029px">02_</span><span style="display:inline-block;transform:scaleX(0.8661);transform-origin:0 0;margin-right:-0.774px">М</span><span style="display:inline-block;transform:scaleX(1.0085);transform-origin:0 0;margin-right:0.165px">онтаж</span><span style="display:inline-block;transform:scaleX(0.9111);transform-origin:0 0;margin-right:-0.514px"> / </span><span style="display:inline-block;transform:scaleX(0.8661);transform-origin:0 0;margin-right:-0.668px">П</span><span style="display:inline-block;transform:scaleX(1.0085);transform-origin:0 0;margin-right:0.312px">ерегородки</span><span style="display:inline-block;transform:scaleX(0.9111);transform-origin:0 0;margin-right:-0.171px"> </span><span style="display:inline-block;transform:scaleX(0.8661);transform-origin:0 0;margin-right:-1.654px">ГКЛ</span></div>
<div class="t de" style="left:510.70px;top:272.13px;"><span style="display:inline-block;transform:scaleX(0.9854);transform-origin:0 0;margin-right:-0.389px">подписи</span></div>
<svg class="a" style="left:239.60px;top:280.59px" width="14" height="10" viewBox="0 0 14 10"><path d="M3.7 3.8 C3.5 2.0 4.6 1.5 5.8 1.5 C6.9 1.5 7.5 2.2 7.6 3.4" fill="none" stroke="#4a4a4a" stroke-width="1.05"/><path d="M6.0 3.75 H12.0 V5.5 C12.0 7.3 10.3 8.3 9.0 8.35 C7.7 8.3 6.0 7.3 6.0 5.5 Z" fill="#fff" stroke="#4a4a4a" stroke-width="1.05"/><circle cx="9.0" cy="5.8" r="0.6" fill="#4a4a4a"/></svg>
<svg class="a" style="left:256.00px;top:280.59px" width="12" height="10" viewBox="0 0 12 10"><path d="M2.0 4.95 C3.5 1.9 9.1 1.9 10.6 4.95 C9.1 8.0 3.5 8.0 2.0 4.95 Z" fill="#c8c8c8" stroke="#2a2a2a" stroke-width="0.9" stroke-opacity="0.9"/><path d="M1.9 4.9 C3.2 7.6 9.4 7.6 10.7 4.9" fill="none" stroke="#2a2a2a" stroke-width="1.25"/></svg>
<svg class="a" style="left:269.90px;top:280.59px" width="11" height="10" viewBox="0 0 11 10"><path d="M2.0 2.1 H6.2 V4.3 H8.7 V8.2 H2.0 Z" fill="#fff" stroke="#2e2e2e" stroke-width="1.2"/><path d="M6.4 2.0 L8.7 4.0" fill="none" stroke="#2e2e2e" stroke-width="0.7" opacity="0.55"/></svg>
<div class="t" style="left:291.70px;top:281.89px;"><span style="display:inline-block;transform:scaleX(0.9035);transform-origin:0 0;margin-right:-0.373px">1</span></div>
<div class="t dr" style="left:304.80px;top:281.89px;"><span style="display:inline-block;transform:scaleX(0.9055);transform-origin:0 0;margin-right:-1.094px">02_</span><span style="display:inline-block;transform:scaleX(0.8608);transform-origin:0 0;margin-right:-0.805px">М</span>онтаж<span style="display:inline-block;transform:scaleX(0.9055);transform-origin:0 0;margin-right:-0.546px"> / </span><span style="display:inline-block;transform:scaleX(0.8608);transform-origin:0 0;margin-right:-0.695px">П</span><span style="display:inline-block;transform:scaleX(1.0023);transform-origin:0 0;margin-right:0.084px">ерегородки</span><span style="display:inline-block;transform:scaleX(0.9055);transform-origin:0 0;margin-right:-0.182px"> </span><span style="display:inline-block;transform:scaleX(0.8608);transform-origin:0 0;margin-right:-1.720px">ГКЛ</span><span style="display:inline-block;transform:scaleX(0.9055);transform-origin:0 0;margin-right:-0.546px"> / </span><span style="display:inline-block;transform:scaleX(0.8608);transform-origin:0 0;margin-right:-0.563px">К</span><span style="display:inline-block;transform:scaleX(1.0023);transform-origin:0 0;margin-right:0.082px">онструктив</span></div>
<div class="t de" style="left:510.70px;top:281.89px;"><span style="display:inline-block;transform:scaleX(0.9334);transform-origin:0 0;margin-right:-1.890px">размеры</span></div>
<svg class="a" style="left:239.60px;top:290.35px" width="14" height="10" viewBox="0 0 14 10"><path d="M3.7 3.8 C3.5 2.0 4.6 1.5 5.8 1.5 C6.9 1.5 7.5 2.2 7.6 3.4" fill="none" stroke="#4a4a4a" stroke-width="1.05"/><path d="M6.0 3.75 H12.0 V5.5 C12.0 7.3 10.3 8.3 9.0 8.35 C7.7 8.3 6.0 7.3 6.0 5.5 Z" fill="#fff" stroke="#4a4a4a" stroke-width="1.05"/><circle cx="9.0" cy="5.8" r="0.6" fill="#4a4a4a"/></svg>
<svg class="a" style="left:256.00px;top:290.35px" width="12" height="10" viewBox="0 0 12 10"><path d="M2.0 4.95 C3.5 1.9 9.1 1.9 10.6 4.95 C9.1 8.0 3.5 8.0 2.0 4.95 Z" fill="#c8c8c8" stroke="#2a2a2a" stroke-width="0.9" stroke-opacity="0.9"/><path d="M1.9 4.9 C3.2 7.6 9.4 7.6 10.7 4.9" fill="none" stroke="#2a2a2a" stroke-width="1.25"/></svg>
<svg class="a" style="left:269.90px;top:290.35px" width="11" height="10" viewBox="0 0 11 10"><path d="M2.0 2.1 H6.2 V4.3 H8.7 V8.2 H2.0 Z" fill="#fff" stroke="#2e2e2e" stroke-width="1.2"/><path d="M6.4 2.0 L8.7 4.0" fill="none" stroke="#2e2e2e" stroke-width="0.7" opacity="0.55"/></svg>
<div class="t" style="left:291.70px;top:291.65px;"><span style="display:inline-block;transform:scaleX(0.9035);transform-origin:0 0;margin-right:-0.373px">1</span></div>
<div class="t dr" style="left:304.80px;top:291.65px;"><span style="display:inline-block;transform:scaleX(0.8938);transform-origin:0 0;margin-right:-1.230px">02_</span><span style="display:inline-block;transform:scaleX(0.8496);transform-origin:0 0;margin-right:-0.869px">М</span><span style="display:inline-block;transform:scaleX(0.9893);transform-origin:0 0;margin-right:-0.207px">онтаж</span><span style="display:inline-block;transform:scaleX(0.8938);transform-origin:0 0;margin-right:-0.614px"> / </span><span style="display:inline-block;transform:scaleX(0.8496);transform-origin:0 0;margin-right:-0.696px">Р</span><span style="display:inline-block;transform:scaleX(0.9893);transform-origin:0 0;margin-right:-0.305px">азвертки</span><span style="display:inline-block;transform:scaleX(0.8938);transform-origin:0 0;margin-right:-0.614px"> / </span><span style="display:inline-block;transform:scaleX(0.8496);transform-origin:0 0;margin-right:-0.812px">О</span><span style="display:inline-block;transform:scaleX(0.9893);transform-origin:0 0;margin-right:-0.079px">си</span><span style="display:inline-block;transform:scaleX(0.8938);transform-origin:0 0;margin-right:-0.205px"> </span><span style="display:inline-block;transform:scaleX(0.9893);transform-origin:0 0;margin-right:-0.380px">симметрии</span></div>
<div class="t de" style="left:510.70px;top:291.65px;"><span style="display:inline-block;transform:scaleX(0.9382);transform-origin:0 0;margin-right:-0.238px">2</span><span style="display:inline-block;transform:scaleX(0.8919);transform-origin:0 0;margin-right:-0.542px">D</span></div>
<svg class="a" style="left:239.60px;top:300.11px" width="14" height="10" viewBox="0 0 14 10"><path d="M3.7 3.8 C3.5 2.0 4.6 1.5 5.8 1.5 C6.9 1.5 7.5 2.2 7.6 3.4" fill="none" stroke="#4a4a4a" stroke-width="1.05"/><path d="M6.0 3.75 H12.0 V5.5 C12.0 7.3 10.3 8.3 9.0 8.35 C7.7 8.3 6.0 7.3 6.0 5.5 Z" fill="#fff" stroke="#4a4a4a" stroke-width="1.05"/><circle cx="9.0" cy="5.8" r="0.6" fill="#4a4a4a"/></svg>
<svg class="a" style="left:256.00px;top:300.11px" width="12" height="10" viewBox="0 0 12 10"><path d="M1.9 4.95 C3.3 1.7 9.1 1.7 10.5 4.95 C9.1 8.2 3.3 8.2 1.9 4.95 Z" fill="#fff" stroke="#555" stroke-width="1.0"/><circle cx="6.2" cy="4.95" r="1.55" fill="none" stroke="#555" stroke-width="0.9"/></svg>
<svg class="a" style="left:269.90px;top:300.11px" width="11" height="10" viewBox="0 0 11 10"><path d="M2.0 2.1 H6.2 V4.3 H8.7 V8.2 H2.0 Z" fill="#fff" stroke="#2e2e2e" stroke-width="1.2"/><path d="M6.4 2.0 L8.7 4.0" fill="none" stroke="#2e2e2e" stroke-width="0.7" opacity="0.55"/></svg>
<div class="t" style="left:291.70px;top:301.41px;"><span style="display:inline-block;transform:scaleX(0.9035);transform-origin:0 0;margin-right:-0.373px">1</span></div>
<div class="t dr" style="left:304.80px;top:301.41px;"><span style="display:inline-block;transform:scaleX(0.8959);transform-origin:0 0;margin-right:-1.206px">02_</span><span style="display:inline-block;transform:scaleX(0.8516);transform-origin:0 0;margin-right:-0.858px">М</span><span style="display:inline-block;transform:scaleX(0.9916);transform-origin:0 0;margin-right:-0.163px">онтаж</span><span style="display:inline-block;transform:scaleX(0.8959);transform-origin:0 0;margin-right:-0.602px"> / </span><span style="display:inline-block;transform:scaleX(0.8516);transform-origin:0 0;margin-right:-4.904px">РАЗРЕЗЫ</span></div>
<div class="t de" style="left:510.70px;top:301.41px;"><span style="display:inline-block;transform:scaleX(0.9908);transform-origin:0 0;margin-right:-0.347px">маркировка</span></div>
<svg class="a" style="left:239.60px;top:309.87px" width="14" height="10" viewBox="0 0 14 10"><path d="M3.7 3.8 C3.5 2.0 4.6 1.5 5.8 1.5 C6.9 1.5 7.5 2.2 7.6 3.4" fill="none" stroke="#4a4a4a" stroke-width="1.05"/><path d="M6.0 3.75 H12.0 V5.5 C12.0 7.3 10.3 8.3 9.0 8.35 C7.7 8.3 6.0 7.3 6.0 5.5 Z" fill="#fff" stroke="#4a4a4a" stroke-width="1.05"/><circle cx="9.0" cy="5.8" r="0.6" fill="#4a4a4a"/></svg>
<svg class="a" style="left:256.00px;top:309.87px" width="12" height="10" viewBox="0 0 12 10"><path d="M2.0 4.95 C3.5 1.9 9.1 1.9 10.6 4.95 C9.1 8.0 3.5 8.0 2.0 4.95 Z" fill="#c8c8c8" stroke="#2a2a2a" stroke-width="0.9" stroke-opacity="0.9"/><path d="M1.9 4.9 C3.2 7.6 9.4 7.6 10.7 4.9" fill="none" stroke="#2a2a2a" stroke-width="1.25"/></svg>
<svg class="a" style="left:269.90px;top:309.87px" width="11" height="10" viewBox="0 0 11 10"><path d="M2.0 2.1 H6.2 V4.3 H8.7 V8.2 H2.0 Z" fill="#fff" stroke="#2e2e2e" stroke-width="1.2"/><path d="M6.4 2.0 L8.7 4.0" fill="none" stroke="#2e2e2e" stroke-width="0.7" opacity="0.55"/></svg>
<div class="t" style="left:291.70px;top:311.17px;"><span style="display:inline-block;transform:scaleX(0.9035);transform-origin:0 0;margin-right:-0.373px">1</span></div>
<div class="t dr" style="left:304.80px;top:311.17px;"><span style="display:inline-block;transform:scaleX(0.8964);transform-origin:0 0;margin-right:-1.199px">02_</span><span style="display:inline-block;transform:scaleX(0.8521);transform-origin:0 0;margin-right:-0.855px">М</span><span style="display:inline-block;transform:scaleX(0.9922);transform-origin:0 0;margin-right:-0.151px">онтаж</span><span style="display:inline-block;transform:scaleX(0.8964);transform-origin:0 0;margin-right:-0.599px"> / </span><span style="display:inline-block;transform:scaleX(0.8521);transform-origin:0 0;margin-right:-0.741px">С</span><span style="display:inline-block;transform:scaleX(0.9922);transform-origin:0 0;margin-right:-0.268px">теклянные</span><span style="display:inline-block;transform:scaleX(0.8964);transform-origin:0 0;margin-right:-0.200px"> </span><span style="display:inline-block;transform:scaleX(0.9922);transform-origin:0 0;margin-right:-0.315px">перегородки</span></div>
<div class="t de" style="left:510.70px;top:311.17px;"><span style="display:inline-block;transform:scaleX(0.9334);transform-origin:0 0;margin-right:-1.890px">размеры</span></div>
<svg class="a" style="left:239.60px;top:319.64px" width="14" height="10" viewBox="0 0 14 10"><path d="M3.7 3.8 C3.5 2.0 4.6 1.5 5.8 1.5 C6.9 1.5 7.5 2.2 7.6 3.4" fill="none" stroke="#4a4a4a" stroke-width="1.05"/><path d="M6.0 3.75 H12.0 V5.5 C12.0 7.3 10.3 8.3 9.0 8.35 C7.7 8.3 6.0 7.3 6.0 5.5 Z" fill="#fff" stroke="#4a4a4a" stroke-width="1.05"/><circle cx="9.0" cy="5.8" r="0.6" fill="#4a4a4a"/></svg>
<svg class="a" style="left:256.00px;top:319.64px" width="12" height="10" viewBox="0 0 12 10"><path d="M1.9 4.95 C3.3 1.7 9.1 1.7 10.5 4.95 C9.1 8.2 3.3 8.2 1.9 4.95 Z" fill="#fff" stroke="#555" stroke-width="1.0"/><circle cx="6.2" cy="4.95" r="1.55" fill="none" stroke="#555" stroke-width="0.9"/></svg>
<svg class="a" style="left:269.90px;top:319.64px" width="11" height="10" viewBox="0 0 11 10"><path d="M2.0 2.1 H6.2 V4.3 H8.7 V8.2 H2.0 Z" fill="#fff" stroke="#2e2e2e" stroke-width="1.2"/><path d="M6.4 2.0 L8.7 4.0" fill="none" stroke="#2e2e2e" stroke-width="0.7" opacity="0.55"/></svg>
<div class="t" style="left:291.70px;top:320.94px;"><span style="display:inline-block;transform:scaleX(0.9035);transform-origin:0 0;margin-right:-0.373px">1</span></div>
<div class="t dr" style="left:304.80px;top:320.94px;"><span style="display:inline-block;transform:scaleX(0.8890);transform-origin:0 0;margin-right:-1.285px">02_</span><span style="display:inline-block;transform:scaleX(0.8450);transform-origin:0 0;margin-right:-0.836px">О</span><span style="display:inline-block;transform:scaleX(0.9840);transform-origin:0 0;margin-right:-0.263px">бмер</span><span style="display:inline-block;transform:scaleX(0.8890);transform-origin:0 0;margin-right:-0.642px"> / </span><span style="display:inline-block;transform:scaleX(0.8450);transform-origin:0 0;margin-right:-0.626px">К</span><span style="display:inline-block;transform:scaleX(0.9840);transform-origin:0 0;margin-right:-0.567px">онструктив</span></div>
<div class="t de" style="left:510.70px;top:320.94px;"><span style="display:inline-block;transform:scaleX(0.8162);transform-origin:0 0;margin-right:-0.851px">Р</span><span style="display:inline-block;transform:scaleX(0.9504);transform-origin:0 0;margin-right:-1.216px">азмеры</span><span style="display:inline-block;transform:scaleX(0.8586);transform-origin:0 0;margin-right:-1.363px">, ...</span></div>
<svg class="a" style="left:239.60px;top:329.40px" width="14" height="10" viewBox="0 0 14 10"><path d="M3.7 3.8 C3.5 2.0 4.6 1.5 5.8 1.5 C6.9 1.5 7.5 2.2 7.6 3.4" fill="none" stroke="#4a4a4a" stroke-width="1.05"/><path d="M6.0 3.75 H12.0 V5.5 C12.0 7.3 10.3 8.3 9.0 8.35 C7.7 8.3 6.0 7.3 6.0 5.5 Z" fill="#fff" stroke="#4a4a4a" stroke-width="1.05"/><circle cx="9.0" cy="5.8" r="0.6" fill="#4a4a4a"/></svg>
<svg class="a" style="left:256.00px;top:329.40px" width="12" height="10" viewBox="0 0 12 10"><path d="M2.0 4.95 C3.5 1.9 9.1 1.9 10.6 4.95 C9.1 8.0 3.5 8.0 2.0 4.95 Z" fill="#c8c8c8" stroke="#2a2a2a" stroke-width="0.9" stroke-opacity="0.9"/><path d="M1.9 4.9 C3.2 7.6 9.4 7.6 10.7 4.9" fill="none" stroke="#2a2a2a" stroke-width="1.25"/></svg>
<svg class="a" style="left:269.90px;top:329.40px" width="11" height="10" viewBox="0 0 11 10"><path d="M2.0 2.1 H6.2 V4.3 H8.7 V8.2 H2.0 Z" fill="#fff" stroke="#2e2e2e" stroke-width="1.2"/><path d="M6.4 2.0 L8.7 4.0" fill="none" stroke="#2e2e2e" stroke-width="0.7" opacity="0.55"/></svg>
<div class="t" style="left:291.70px;top:330.70px;"><span style="display:inline-block;transform:scaleX(0.9035);transform-origin:0 0;margin-right:-0.373px">1</span></div>
<div class="t dr" style="left:304.80px;top:330.70px;"><span style="display:inline-block;transform:scaleX(0.8844);transform-origin:0 0;margin-right:-3.123px">03_____</span><span style="display:inline-block;transform:scaleX(0.8407);transform-origin:0 0;margin-right:-8.359px">МЕБЕЛИРОВКА</span><span style="display:inline-block;transform:scaleX(0.8844);transform-origin:0 0;margin-right:-0.669px"> / </span><span style="display:inline-block;transform:scaleX(0.8407);transform-origin:0 0;margin-right:-0.795px">И</span><span style="display:inline-block;transform:scaleX(0.9789);transform-origin:0 0;margin-right:-0.493px">ндивид</span><span style="display:inline-block;transform:scaleX(0.8844);transform-origin:0 0;margin-right:-0.446px">_</span><span style="display:inline-block;transform:scaleX(0.8407);transform-origin:0 0;margin-right:-0.795px">И</span><span style="display:inline-block;transform:scaleX(0.9789);transform-origin:0 0;margin-right:-0.153px">зд</span><span style="display:inline-block;transform:scaleX(0.8844);transform-origin:0 0;margin-right:-0.490px"> (</span><span style="display:inline-block;transform:scaleX(0.8407);transform-origin:0 0;margin-right:-1.590px">ИИ</span><span style="display:inline-block;transform:scaleX(0.8844);transform-origin:0 0;margin-right:-5.622px">)__________03</span></div>
<svg class="a" style="left:239.60px;top:339.16px" width="14" height="10" viewBox="0 0 14 10"><path d="M3.7 3.8 C3.5 2.0 4.6 1.5 5.8 1.5 C6.9 1.5 7.5 2.2 7.6 3.4" fill="none" stroke="#4a4a4a" stroke-width="1.05"/><path d="M6.0 3.75 H12.0 V5.5 C12.0 7.3 10.3 8.3 9.0 8.35 C7.7 8.3 6.0 7.3 6.0 5.5 Z" fill="#fff" stroke="#4a4a4a" stroke-width="1.05"/><circle cx="9.0" cy="5.8" r="0.6" fill="#4a4a4a"/></svg>
<svg class="a" style="left:256.00px;top:339.16px" width="12" height="10" viewBox="0 0 12 10"><path d="M2.0 4.95 C3.5 1.9 9.1 1.9 10.6 4.95 C9.1 8.0 3.5 8.0 2.0 4.95 Z" fill="#c8c8c8" stroke="#2a2a2a" stroke-width="0.9" stroke-opacity="0.9"/><path d="M1.9 4.9 C3.2 7.6 9.4 7.6 10.7 4.9" fill="none" stroke="#2a2a2a" stroke-width="1.25"/></svg>
<svg class="a" style="left:269.90px;top:339.16px" width="11" height="10" viewBox="0 0 11 10"><path d="M2.0 2.1 H6.2 V4.3 H8.7 V8.2 H2.0 Z" fill="#fff" stroke="#2e2e2e" stroke-width="1.2"/><path d="M6.4 2.0 L8.7 4.0" fill="none" stroke="#2e2e2e" stroke-width="0.7" opacity="0.55"/></svg>
<div class="t" style="left:291.70px;top:340.46px;"><span style="display:inline-block;transform:scaleX(0.9035);transform-origin:0 0;margin-right:-0.373px">1</span></div>
<div class="t dr" style="left:304.80px;top:340.46px;"><span style="display:inline-block;transform:scaleX(0.8658);transform-origin:0 0;margin-right:-1.554px">03_</span><span style="display:inline-block;transform:scaleX(0.8230);transform-origin:0 0;margin-right:-1.023px">М</span><span style="display:inline-block;transform:scaleX(0.9583);transform-origin:0 0;margin-right:-0.807px">ебель</span><span style="display:inline-block;transform:scaleX(0.8658);transform-origin:0 0;margin-right:-0.776px"> / </span><span style="display:inline-block;transform:scaleX(0.8230);transform-origin:0 0;margin-right:-0.742px">З</span><span style="display:inline-block;transform:scaleX(0.9583);transform-origin:0 0;margin-right:-0.939px">еркала</span></div>
<div class="t de" style="left:510.70px;top:340.46px;"><span style="display:inline-block;transform:scaleX(0.9382);transform-origin:0 0;margin-right:-0.238px">3</span><span style="display:inline-block;transform:scaleX(0.8919);transform-origin:0 0;margin-right:-0.542px">D</span></div>
<svg class="a" style="left:239.60px;top:348.92px" width="14" height="10" viewBox="0 0 14 10"><path d="M3.7 3.8 C3.5 2.0 4.6 1.5 5.8 1.5 C6.9 1.5 7.5 2.2 7.6 3.4" fill="none" stroke="#4a4a4a" stroke-width="1.05"/><path d="M6.0 3.75 H12.0 V5.5 C12.0 7.3 10.3 8.3 9.0 8.35 C7.7 8.3 6.0 7.3 6.0 5.5 Z" fill="#fff" stroke="#4a4a4a" stroke-width="1.05"/><circle cx="9.0" cy="5.8" r="0.6" fill="#4a4a4a"/></svg>
<svg class="a" style="left:256.00px;top:348.92px" width="12" height="10" viewBox="0 0 12 10"><path d="M2.0 4.95 C3.5 1.9 9.1 1.9 10.6 4.95 C9.1 8.0 3.5 8.0 2.0 4.95 Z" fill="#c8c8c8" stroke="#2a2a2a" stroke-width="0.9" stroke-opacity="0.9"/><path d="M1.9 4.9 C3.2 7.6 9.4 7.6 10.7 4.9" fill="none" stroke="#2a2a2a" stroke-width="1.25"/></svg>
<svg class="a" style="left:269.90px;top:348.92px" width="11" height="10" viewBox="0 0 11 10"><path d="M2.0 2.1 H6.2 V4.3 H8.7 V8.2 H2.0 Z" fill="#fff" stroke="#2e2e2e" stroke-width="1.2"/><path d="M6.4 2.0 L8.7 4.0" fill="none" stroke="#2e2e2e" stroke-width="0.7" opacity="0.55"/></svg>
<div class="t" style="left:291.70px;top:350.22px;"><span style="display:inline-block;transform:scaleX(0.9035);transform-origin:0 0;margin-right:-0.373px">1</span></div>
<div class="t dr" style="left:304.80px;top:350.22px;"><span style="display:inline-block;transform:scaleX(0.9010);transform-origin:0 0;margin-right:-1.146px">03_</span><span style="display:inline-block;transform:scaleX(0.8565);transform-origin:0 0;margin-right:-0.830px">М</span><span style="display:inline-block;transform:scaleX(0.9973);transform-origin:0 0;margin-right:-0.052px">ебель</span><span style="display:inline-block;transform:scaleX(0.9010);transform-origin:0 0;margin-right:-0.573px"> / </span><span style="display:inline-block;transform:scaleX(0.8565);transform-origin:0 0;margin-right:-1.432px">ИИ</span></div>
<div class="t de" style="left:510.70px;top:350.22px;"><span style="display:inline-block;transform:scaleX(0.9382);transform-origin:0 0;margin-right:-0.238px">3</span><span style="display:inline-block;transform:scaleX(0.8919);transform-origin:0 0;margin-right:-0.542px">D</span></div>
<svg class="a" style="left:239.60px;top:358.68px" width="14" height="10" viewBox="0 0 14 10"><path d="M3.7 3.8 C3.5 2.0 4.6 1.5 5.8 1.5 C6.9 1.5 7.5 2.2 7.6 3.4" fill="none" stroke="#4a4a4a" stroke-width="1.05"/><path d="M6.0 3.75 H12.0 V5.5 C12.0 7.3 10.3 8.3 9.0 8.35 C7.7 8.3 6.0 7.3 6.0 5.5 Z" fill="#fff" stroke="#4a4a4a" stroke-width="1.05"/><circle cx="9.0" cy="5.8" r="0.6" fill="#4a4a4a"/></svg>
<svg class="a" style="left:256.00px;top:358.68px" width="12" height="10" viewBox="0 0 12 10"><path d="M2.0 4.95 C3.5 1.9 9.1 1.9 10.6 4.95 C9.1 8.0 3.5 8.0 2.0 4.95 Z" fill="#c8c8c8" stroke="#2a2a2a" stroke-width="0.9" stroke-opacity="0.9"/><path d="M1.9 4.9 C3.2 7.6 9.4 7.6 10.7 4.9" fill="none" stroke="#2a2a2a" stroke-width="1.25"/></svg>
<svg class="a" style="left:269.90px;top:358.68px" width="11" height="10" viewBox="0 0 11 10"><path d="M2.0 2.1 H6.2 V4.3 H8.7 V8.2 H2.0 Z" fill="#fff" stroke="#2e2e2e" stroke-width="1.2"/><path d="M6.4 2.0 L8.7 4.0" fill="none" stroke="#2e2e2e" stroke-width="0.7" opacity="0.55"/></svg>
<div class="t" style="left:291.70px;top:359.98px;"><span style="display:inline-block;transform:scaleX(0.9035);transform-origin:0 0;margin-right:-0.373px">1</span></div>
<div class="t dr" style="left:304.80px;top:359.98px;"><span style="display:inline-block;transform:scaleX(0.9010);transform-origin:0 0;margin-right:-1.146px">03_</span><span style="display:inline-block;transform:scaleX(0.8565);transform-origin:0 0;margin-right:-0.830px">М</span><span style="display:inline-block;transform:scaleX(0.9973);transform-origin:0 0;margin-right:-0.052px">ебель</span><span style="display:inline-block;transform:scaleX(0.9010);transform-origin:0 0;margin-right:-0.573px"> / </span><span style="display:inline-block;transform:scaleX(0.8565);transform-origin:0 0;margin-right:-1.432px">ИИ</span></div>
<div class="t de" style="left:510.70px;top:359.98px;"><span style="display:inline-block;transform:scaleX(0.9908);transform-origin:0 0;margin-right:-0.347px">маркировка</span></div>
<svg class="a" style="left:239.60px;top:368.45px" width="14" height="10" viewBox="0 0 14 10"><path d="M3.7 3.8 C3.5 2.0 4.6 1.5 5.8 1.5 C6.9 1.5 7.5 2.2 7.6 3.4" fill="none" stroke="#4a4a4a" stroke-width="1.05"/><path d="M6.0 3.75 H12.0 V5.5 C12.0 7.3 10.3 8.3 9.0 8.35 C7.7 8.3 6.0 7.3 6.0 5.5 Z" fill="#fff" stroke="#4a4a4a" stroke-width="1.05"/><circle cx="9.0" cy="5.8" r="0.6" fill="#4a4a4a"/></svg>
<svg class="a" style="left:256.00px;top:368.45px" width="12" height="10" viewBox="0 0 12 10"><path d="M2.0 4.95 C3.5 1.9 9.1 1.9 10.6 4.95 C9.1 8.0 3.5 8.0 2.0 4.95 Z" fill="#c8c8c8" stroke="#2a2a2a" stroke-width="0.9" stroke-opacity="0.9"/><path d="M1.9 4.9 C3.2 7.6 9.4 7.6 10.7 4.9" fill="none" stroke="#2a2a2a" stroke-width="1.25"/></svg>
<svg class="a" style="left:269.90px;top:368.45px" width="11" height="10" viewBox="0 0 11 10"><path d="M2.0 2.1 H6.2 V4.3 H8.7 V8.2 H2.0 Z" fill="#fff" stroke="#2e2e2e" stroke-width="1.2"/><path d="M6.4 2.0 L8.7 4.0" fill="none" stroke="#2e2e2e" stroke-width="0.7" opacity="0.55"/></svg>
<div class="t" style="left:291.70px;top:369.75px;"><span style="display:inline-block;transform:scaleX(0.9035);transform-origin:0 0;margin-right:-0.373px">1</span></div>
<div class="t dr" style="left:304.80px;top:369.75px;"><span style="display:inline-block;transform:scaleX(0.9010);transform-origin:0 0;margin-right:-1.146px">03_</span><span style="display:inline-block;transform:scaleX(0.8565);transform-origin:0 0;margin-right:-0.830px">М</span><span style="display:inline-block;transform:scaleX(0.9973);transform-origin:0 0;margin-right:-0.052px">ебель</span><span style="display:inline-block;transform:scaleX(0.9010);transform-origin:0 0;margin-right:-0.573px"> / </span><span style="display:inline-block;transform:scaleX(0.8565);transform-origin:0 0;margin-right:-1.432px">ИИ</span></div>
<div class="t de" style="left:510.70px;top:369.75px;"><span style="display:inline-block;transform:scaleX(0.9334);transform-origin:0 0;margin-right:-1.890px">размеры</span></div>
<svg class="a" style="left:239.60px;top:378.21px" width="14" height="10" viewBox="0 0 14 10"><path d="M3.7 3.8 C3.5 2.0 4.6 1.5 5.8 1.5 C6.9 1.5 7.5 2.2 7.6 3.4" fill="none" stroke="#4a4a4a" stroke-width="1.05"/><path d="M6.0 3.75 H12.0 V5.5 C12.0 7.3 10.3 8.3 9.0 8.35 C7.7 8.3 6.0 7.3 6.0 5.5 Z" fill="#fff" stroke="#4a4a4a" stroke-width="1.05"/><circle cx="9.0" cy="5.8" r="0.6" fill="#4a4a4a"/></svg>
<svg class="a" style="left:256.00px;top:378.21px" width="12" height="10" viewBox="0 0 12 10"><path d="M2.0 4.95 C3.5 1.9 9.1 1.9 10.6 4.95 C9.1 8.0 3.5 8.0 2.0 4.95 Z" fill="#c8c8c8" stroke="#2a2a2a" stroke-width="0.9" stroke-opacity="0.9"/><path d="M1.9 4.9 C3.2 7.6 9.4 7.6 10.7 4.9" fill="none" stroke="#2a2a2a" stroke-width="1.25"/></svg>
<svg class="a" style="left:269.90px;top:378.21px" width="11" height="10" viewBox="0 0 11 10"><path d="M2.0 2.1 H6.2 V4.3 H8.7 V8.2 H2.0 Z" fill="#fff" stroke="#2e2e2e" stroke-width="1.2"/><path d="M6.4 2.0 L8.7 4.0" fill="none" stroke="#2e2e2e" stroke-width="0.7" opacity="0.55"/></svg>
<div class="t" style="left:291.70px;top:379.51px;"><span style="display:inline-block;transform:scaleX(0.9035);transform-origin:0 0;margin-right:-0.373px">1</span></div>
<div class="t dr" style="left:304.80px;top:379.51px;"><span style="display:inline-block;transform:scaleX(0.8870);transform-origin:0 0;margin-right:-1.308px">03_</span><span style="display:inline-block;transform:scaleX(0.8432);transform-origin:0 0;margin-right:-0.907px">М</span><span style="display:inline-block;transform:scaleX(0.9818);transform-origin:0 0;margin-right:-0.352px">ебель</span><span style="display:inline-block;transform:scaleX(0.8870);transform-origin:0 0;margin-right:-0.654px"> / </span><span style="display:inline-block;transform:scaleX(0.8432);transform-origin:0 0;margin-right:-0.847px">О</span><span style="display:inline-block;transform:scaleX(0.9818);transform-origin:0 0;margin-right:-0.654px">брамление</span><span style="display:inline-block;transform:scaleX(0.8870);transform-origin:0 0;margin-right:-0.218px"> </span><span style="display:inline-block;transform:scaleX(0.9818);transform-origin:0 0;margin-right:-0.266px">окон</span><span style="display:inline-block;transform:scaleX(0.8870);transform-origin:0 0;margin-right:-0.436px">_</span><span style="display:inline-block;transform:scaleX(0.8432);transform-origin:0 0;margin-right:-0.782px">Э</span><span style="display:inline-block;transform:scaleX(0.9818);transform-origin:0 0;margin-right:-0.356px">краны</span></div>
<div class="t de" style="left:510.70px;top:379.51px;"><span style="display:inline-block;transform:scaleX(0.9272);transform-origin:0 0;margin-right:-0.281px">2</span><span style="display:inline-block;transform:scaleX(0.8814);transform-origin:0 0;margin-right:-0.595px">D</span><span style="display:inline-block;transform:scaleX(0.9272);transform-origin:0 0;margin-right:-0.562px">, 3</span><span style="display:inline-block;transform:scaleX(0.8814);transform-origin:0 0;margin-right:-0.595px">D</span></div>
<svg class="a" style="left:239.60px;top:387.97px" width="14" height="10" viewBox="0 0 14 10"><path d="M3.7 3.8 C3.5 2.0 4.6 1.5 5.8 1.5 C6.9 1.5 7.5 2.2 7.6 3.4" fill="none" stroke="#4a4a4a" stroke-width="1.05"/><path d="M6.0 3.75 H12.0 V5.5 C12.0 7.3 10.3 8.3 9.0 8.35 C7.7 8.3 6.0 7.3 6.0 5.5 Z" fill="#fff" stroke="#4a4a4a" stroke-width="1.05"/><circle cx="9.0" cy="5.8" r="0.6" fill="#4a4a4a"/></svg>
<svg class="a" style="left:256.00px;top:387.97px" width="12" height="10" viewBox="0 0 12 10"><path d="M2.0 4.95 C3.5 1.9 9.1 1.9 10.6 4.95 C9.1 8.0 3.5 8.0 2.0 4.95 Z" fill="#c8c8c8" stroke="#2a2a2a" stroke-width="0.9" stroke-opacity="0.9"/><path d="M1.9 4.9 C3.2 7.6 9.4 7.6 10.7 4.9" fill="none" stroke="#2a2a2a" stroke-width="1.25"/></svg>
<svg class="a" style="left:269.90px;top:387.97px" width="11" height="10" viewBox="0 0 11 10"><path d="M2.0 2.1 H6.2 V4.3 H8.7 V8.2 H2.0 Z" fill="#fff" stroke="#2e2e2e" stroke-width="1.2"/><path d="M6.4 2.0 L8.7 4.0" fill="none" stroke="#2e2e2e" stroke-width="0.7" opacity="0.55"/></svg>
<div class="t" style="left:291.70px;top:389.27px;"><span style="display:inline-block;transform:scaleX(0.9035);transform-origin:0 0;margin-right:-0.373px">1</span></div>
<div class="t dr" style="left:304.80px;top:389.27px;"><span style="display:inline-block;transform:scaleX(0.8695);transform-origin:0 0;margin-right:-1.511px">03_</span><span style="display:inline-block;transform:scaleX(0.8265);transform-origin:0 0;margin-right:-1.003px">М</span><span style="display:inline-block;transform:scaleX(0.9624);transform-origin:0 0;margin-right:-0.728px">ебель</span><span style="display:inline-block;transform:scaleX(0.8695);transform-origin:0 0;margin-right:-0.755px"> / </span><span style="display:inline-block;transform:scaleX(0.8265);transform-origin:0 0;margin-right:-1.539px">ТВ</span></div>
<div class="t de" style="left:510.70px;top:389.27px;"><span style="display:inline-block;transform:scaleX(0.9382);transform-origin:0 0;margin-right:-0.238px">3</span><span style="display:inline-block;transform:scaleX(0.8919);transform-origin:0 0;margin-right:-0.542px">D</span></div>
<svg class="a" style="left:239.60px;top:397.73px" width="14" height="10" viewBox="0 0 14 10"><path d="M3.7 3.8 C3.5 2.0 4.6 1.5 5.8 1.5 C6.9 1.5 7.5 2.2 7.6 3.4" fill="none" stroke="#4a4a4a" stroke-width="1.05"/><path d="M6.0 3.75 H12.0 V5.5 C12.0 7.3 10.3 8.3 9.0 8.35 C7.7 8.3 6.0 7.3 6.0 5.5 Z" fill="#fff" stroke="#4a4a4a" stroke-width="1.05"/><circle cx="9.0" cy="5.8" r="0.6" fill="#4a4a4a"/></svg>
<svg class="a" style="left:256.00px;top:397.73px" width="12" height="10" viewBox="0 0 12 10"><path d="M2.0 4.95 C3.5 1.9 9.1 1.9 10.6 4.95 C9.1 8.0 3.5 8.0 2.0 4.95 Z" fill="#c8c8c8" stroke="#2a2a2a" stroke-width="0.9" stroke-opacity="0.9"/><path d="M1.9 4.9 C3.2 7.6 9.4 7.6 10.7 4.9" fill="none" stroke="#2a2a2a" stroke-width="1.25"/></svg>
<svg class="a" style="left:269.90px;top:397.73px" width="11" height="10" viewBox="0 0 11 10"><path d="M2.0 2.1 H6.2 V4.3 H8.7 V8.2 H2.0 Z" fill="#fff" stroke="#2e2e2e" stroke-width="1.2"/><path d="M6.4 2.0 L8.7 4.0" fill="none" stroke="#2e2e2e" stroke-width="0.7" opacity="0.55"/></svg>
<div class="t" style="left:291.70px;top:399.03px;"><span style="display:inline-block;transform:scaleX(0.9035);transform-origin:0 0;margin-right:-0.373px">1</span></div>
<div class="t dr" style="left:304.80px;top:399.03px;"><span style="display:inline-block;transform:scaleX(0.8695);transform-origin:0 0;margin-right:-1.511px">03_</span><span style="display:inline-block;transform:scaleX(0.8265);transform-origin:0 0;margin-right:-1.003px">М</span><span style="display:inline-block;transform:scaleX(0.9624);transform-origin:0 0;margin-right:-0.728px">ебель</span><span style="display:inline-block;transform:scaleX(0.8695);transform-origin:0 0;margin-right:-0.755px"> / </span><span style="display:inline-block;transform:scaleX(0.8265);transform-origin:0 0;margin-right:-1.539px">ТВ</span></div>
<div class="t de" style="left:510.70px;top:399.03px;"><span style="display:inline-block;transform:scaleX(0.9854);transform-origin:0 0;margin-right:-0.389px">подписи</span></div>
<svg class="a" style="left:239.60px;top:407.49px" width="14" height="10" viewBox="0 0 14 10"><path d="M3.7 3.8 C3.5 2.0 4.6 1.5 5.8 1.5 C6.9 1.5 7.5 2.2 7.6 3.4" fill="none" stroke="#4a4a4a" stroke-width="1.05"/><path d="M6.0 3.75 H12.0 V5.5 C12.0 7.3 10.3 8.3 9.0 8.35 C7.7 8.3 6.0 7.3 6.0 5.5 Z" fill="#fff" stroke="#4a4a4a" stroke-width="1.05"/><circle cx="9.0" cy="5.8" r="0.6" fill="#4a4a4a"/></svg>
<svg class="a" style="left:256.00px;top:407.49px" width="12" height="10" viewBox="0 0 12 10"><path d="M2.0 4.95 C3.5 1.9 9.1 1.9 10.6 4.95 C9.1 8.0 3.5 8.0 2.0 4.95 Z" fill="#c8c8c8" stroke="#2a2a2a" stroke-width="0.9" stroke-opacity="0.9"/><path d="M1.9 4.9 C3.2 7.6 9.4 7.6 10.7 4.9" fill="none" stroke="#2a2a2a" stroke-width="1.25"/></svg>
<svg class="a" style="left:269.90px;top:407.49px" width="11" height="10" viewBox="0 0 11 10"><path d="M2.0 2.1 H6.2 V4.3 H8.7 V8.2 H2.0 Z" fill="#fff" stroke="#2e2e2e" stroke-width="1.2"/><path d="M6.4 2.0 L8.7 4.0" fill="none" stroke="#2e2e2e" stroke-width="0.7" opacity="0.55"/></svg>
<div class="t" style="left:291.70px;top:408.79px;"><span style="display:inline-block;transform:scaleX(0.9035);transform-origin:0 0;margin-right:-0.373px">1</span></div>
<div class="t dr" style="left:304.80px;top:408.79px;"><span style="display:inline-block;transform:scaleX(0.8970);transform-origin:0 0;margin-right:-1.192px">03_</span><span style="display:inline-block;transform:scaleX(0.8527);transform-origin:0 0;margin-right:-0.852px">М</span><span style="display:inline-block;transform:scaleX(0.9929);transform-origin:0 0;margin-right:-0.137px">ебель</span><span style="display:inline-block;transform:scaleX(0.8970);transform-origin:0 0;margin-right:-0.596px"> / </span><span style="display:inline-block;transform:scaleX(0.8527);transform-origin:0 0;margin-right:-0.937px">Ш</span><span style="display:inline-block;transform:scaleX(0.9929);transform-origin:0 0;margin-right:-0.205px">триховка</span></div>
<div class="t de" style="left:510.70px;top:408.79px;"><span style="display:inline-block;transform:scaleX(0.9382);transform-origin:0 0;margin-right:-0.238px">2</span><span style="display:inline-block;transform:scaleX(0.8919);transform-origin:0 0;margin-right:-0.542px">D</span></div>
<svg class="a" style="left:239.60px;top:417.26px" width="14" height="10" viewBox="0 0 14 10"><path d="M3.7 3.8 C3.5 2.0 4.6 1.5 5.8 1.5 C6.9 1.5 7.5 2.2 7.6 3.4" fill="none" stroke="#4a4a4a" stroke-width="1.05"/><path d="M6.0 3.75 H12.0 V5.5 C12.0 7.3 10.3 8.3 9.0 8.35 C7.7 8.3 6.0 7.3 6.0 5.5 Z" fill="#fff" stroke="#4a4a4a" stroke-width="1.05"/><circle cx="9.0" cy="5.8" r="0.6" fill="#4a4a4a"/></svg>
<svg class="a" style="left:256.00px;top:417.26px" width="12" height="10" viewBox="0 0 12 10"><path d="M2.0 4.95 C3.5 1.9 9.1 1.9 10.6 4.95 C9.1 8.0 3.5 8.0 2.0 4.95 Z" fill="#c8c8c8" stroke="#2a2a2a" stroke-width="0.9" stroke-opacity="0.9"/><path d="M1.9 4.9 C3.2 7.6 9.4 7.6 10.7 4.9" fill="none" stroke="#2a2a2a" stroke-width="1.25"/></svg>
<svg class="a" style="left:269.90px;top:417.26px" width="11" height="10" viewBox="0 0 11 10"><path d="M2.0 2.1 H6.2 V4.3 H8.7 V8.2 H2.0 Z" fill="#fff" stroke="#2e2e2e" stroke-width="1.2"/><path d="M6.4 2.0 L8.7 4.0" fill="none" stroke="#2e2e2e" stroke-width="0.7" opacity="0.55"/></svg>
<div class="t" style="left:291.70px;top:418.56px;"><span style="display:inline-block;transform:scaleX(0.9035);transform-origin:0 0;margin-right:-0.373px">1</span></div>
<div class="t dr" style="left:304.80px;top:418.56px;"><span style="display:inline-block;transform:scaleX(0.8892);transform-origin:0 0;margin-right:-1.283px">03_</span><span style="display:inline-block;transform:scaleX(0.8452);transform-origin:0 0;margin-right:-0.836px">О</span><span style="display:inline-block;transform:scaleX(0.9842);transform-origin:0 0;margin-right:-0.116px">си</span><span style="display:inline-block;transform:scaleX(0.8892);transform-origin:0 0;margin-right:-0.214px"> </span><span style="display:inline-block;transform:scaleX(0.9842);transform-origin:0 0;margin-right:-0.562px">симметрии</span><span style="display:inline-block;transform:scaleX(0.8892);transform-origin:0 0;margin-right:-0.641px"> / </span><span style="display:inline-block;transform:scaleX(0.8452);transform-origin:0 0;margin-right:-0.716px">Р</span><span style="display:inline-block;transform:scaleX(0.9842);transform-origin:0 0;margin-right:-0.451px">азвертки</span><span style="display:inline-block;transform:scaleX(0.8892);transform-origin:0 0;margin-right:-0.427px">, </span><span style="display:inline-block;transform:scaleX(0.8452);transform-origin:0 0;margin-right:-1.544px">ИИ</span></div>
<div class="t de" style="left:510.70px;top:418.56px;"><span style="display:inline-block;transform:scaleX(0.9442);transform-origin:0 0;margin-right:-1.305px">размер</span></div>
<svg class="a" style="left:239.60px;top:427.02px" width="14" height="10" viewBox="0 0 14 10"><path d="M3.7 3.8 C3.5 2.0 4.6 1.5 5.8 1.5 C6.9 1.5 7.5 2.2 7.6 3.4" fill="none" stroke="#4a4a4a" stroke-width="1.05"/><path d="M6.0 3.75 H12.0 V5.5 C12.0 7.3 10.3 8.3 9.0 8.35 C7.7 8.3 6.0 7.3 6.0 5.5 Z" fill="#fff" stroke="#4a4a4a" stroke-width="1.05"/><circle cx="9.0" cy="5.8" r="0.6" fill="#4a4a4a"/></svg>
<svg class="a" style="left:256.00px;top:427.02px" width="12" height="10" viewBox="0 0 12 10"><path d="M2.0 4.95 C3.5 1.9 9.1 1.9 10.6 4.95 C9.1 8.0 3.5 8.0 2.0 4.95 Z" fill="#c8c8c8" stroke="#2a2a2a" stroke-width="0.9" stroke-opacity="0.9"/><path d="M1.9 4.9 C3.2 7.6 9.4 7.6 10.7 4.9" fill="none" stroke="#2a2a2a" stroke-width="1.25"/></svg>
<svg class="a" style="left:269.90px;top:427.02px" width="11" height="10" viewBox="0 0 11 10"><path d="M2.0 2.1 H6.2 V4.3 H8.7 V8.2 H2.0 Z" fill="#fff" stroke="#2e2e2e" stroke-width="1.2"/><path d="M6.4 2.0 L8.7 4.0" fill="none" stroke="#2e2e2e" stroke-width="0.7" opacity="0.55"/></svg>
<div class="t" style="left:291.70px;top:428.32px;"><span style="display:inline-block;transform:scaleX(0.9035);transform-origin:0 0;margin-right:-0.373px">2</span></div>
<div class="t dr" style="left:304.80px;top:428.32px;"><span style="display:inline-block;transform:scaleX(0.8784);transform-origin:0 0;margin-right:-1.408px">03_</span><span style="display:inline-block;transform:scaleX(0.8350);transform-origin:0 0;margin-right:-0.891px">О</span><span style="display:inline-block;transform:scaleX(0.9723);transform-origin:0 0;margin-right:-0.204px">си</span><span style="display:inline-block;transform:scaleX(0.8784);transform-origin:0 0;margin-right:-0.234px"> </span><span style="display:inline-block;transform:scaleX(0.9723);transform-origin:0 0;margin-right:-0.984px">симметрии</span><span style="display:inline-block;transform:scaleX(0.8784);transform-origin:0 0;margin-right:-0.234px"> </span><span style="display:inline-block;transform:scaleX(0.9723);transform-origin:0 0;margin-right:-1.033px">помещения</span></div>
<div class="t de" style="left:510.70px;top:428.32px;"><span style="display:inline-block;transform:scaleX(0.9382);transform-origin:0 0;margin-right:-0.238px">2</span><span style="display:inline-block;transform:scaleX(0.8919);transform-origin:0 0;margin-right:-0.542px">D</span></div>
<svg class="a" style="left:239.60px;top:436.78px" width="14" height="10" viewBox="0 0 14 10"><path d="M3.7 3.8 C3.5 2.0 4.6 1.5 5.8 1.5 C6.9 1.5 7.5 2.2 7.6 3.4" fill="none" stroke="#4a4a4a" stroke-width="1.05"/><path d="M6.0 3.75 H12.0 V5.5 C12.0 7.3 10.3 8.3 9.0 8.35 C7.7 8.3 6.0 7.3 6.0 5.5 Z" fill="#fff" stroke="#4a4a4a" stroke-width="1.05"/><circle cx="9.0" cy="5.8" r="0.6" fill="#4a4a4a"/></svg>
<svg class="a" style="left:256.00px;top:436.78px" width="12" height="10" viewBox="0 0 12 10"><path d="M2.0 4.95 C3.5 1.9 9.1 1.9 10.6 4.95 C9.1 8.0 3.5 8.0 2.0 4.95 Z" fill="#c8c8c8" stroke="#2a2a2a" stroke-width="0.9" stroke-opacity="0.9"/><path d="M1.9 4.9 C3.2 7.6 9.4 7.6 10.7 4.9" fill="none" stroke="#2a2a2a" stroke-width="1.25"/></svg>
<svg class="a" style="left:269.90px;top:436.78px" width="11" height="10" viewBox="0 0 11 10"><path d="M2.0 2.1 H6.2 V4.3 H8.7 V8.2 H2.0 Z" fill="#fff" stroke="#2e2e2e" stroke-width="1.2"/><path d="M6.4 2.0 L8.7 4.0" fill="none" stroke="#2e2e2e" stroke-width="0.7" opacity="0.55"/></svg>
<div class="t" style="left:291.70px;top:438.08px;"><span style="display:inline-block;transform:scaleX(0.9035);transform-origin:0 0;margin-right:-0.373px">1</span></div>
<div class="t dr" style="left:304.80px;top:438.08px;"><span style="display:inline-block;transform:scaleX(0.8844);transform-origin:0 0;margin-right:-1.339px">03_</span><span style="display:inline-block;transform:scaleX(0.8407);transform-origin:0 0;margin-right:-0.860px">О</span><span style="display:inline-block;transform:scaleX(0.9789);transform-origin:0 0;margin-right:-0.155px">си</span><span style="display:inline-block;transform:scaleX(0.8844);transform-origin:0 0;margin-right:-0.223px"> </span><span style="display:inline-block;transform:scaleX(0.9789);transform-origin:0 0;margin-right:-0.750px">симметрии</span><span style="display:inline-block;transform:scaleX(0.8844);transform-origin:0 0;margin-right:-0.223px"> </span><span style="display:inline-block;transform:scaleX(0.9789);transform-origin:0 0;margin-right:-0.584px">проемов</span></div>
<div class="t de" style="left:510.70px;top:438.08px;"><span style="display:inline-block;transform:scaleX(0.9382);transform-origin:0 0;margin-right:-0.238px">2</span><span style="display:inline-block;transform:scaleX(0.8919);transform-origin:0 0;margin-right:-0.542px">D</span></div>
<svg class="a" style="left:239.60px;top:446.54px" width="14" height="10" viewBox="0 0 14 10"><path d="M3.7 3.8 C3.5 2.0 4.6 1.5 5.8 1.5 C6.9 1.5 7.5 2.2 7.6 3.4" fill="none" stroke="#4a4a4a" stroke-width="1.05"/><path d="M6.0 3.75 H12.0 V5.5 C12.0 7.3 10.3 8.3 9.0 8.35 C7.7 8.3 6.0 7.3 6.0 5.5 Z" fill="#fff" stroke="#4a4a4a" stroke-width="1.05"/><circle cx="9.0" cy="5.8" r="0.6" fill="#4a4a4a"/></svg>
<svg class="a" style="left:256.00px;top:446.54px" width="12" height="10" viewBox="0 0 12 10"><path d="M2.0 4.95 C3.5 1.9 9.1 1.9 10.6 4.95 C9.1 8.0 3.5 8.0 2.0 4.95 Z" fill="#c8c8c8" stroke="#2a2a2a" stroke-width="0.9" stroke-opacity="0.9"/><path d="M1.9 4.9 C3.2 7.6 9.4 7.6 10.7 4.9" fill="none" stroke="#2a2a2a" stroke-width="1.25"/></svg>
<svg class="a" style="left:269.90px;top:446.54px" width="11" height="10" viewBox="0 0 11 10"><path d="M2.0 2.1 H6.2 V4.3 H8.7 V8.2 H2.0 Z" fill="#fff" stroke="#2e2e2e" stroke-width="1.2"/><path d="M6.4 2.0 L8.7 4.0" fill="none" stroke="#2e2e2e" stroke-width="0.7" opacity="0.55"/></svg>
<div class="t" style="left:291.70px;top:447.84px;"><span style="display:inline-block;transform:scaleX(0.9035);transform-origin:0 0;margin-right:-0.373px">1</span></div>
<div class="t dr" style="left:304.80px;top:447.84px;"><span style="display:inline-block;transform:scaleX(0.8780);transform-origin:0 0;margin-right:-1.413px">03_</span><span style="display:inline-block;transform:scaleX(0.8346);transform-origin:0 0;margin-right:-0.829px">С</span><span style="display:inline-block;transform:scaleX(0.9718);transform-origin:0 0;margin-right:-0.925px">антехника</span><span style="display:inline-block;transform:scaleX(0.8780);transform-origin:0 0;margin-right:-0.706px"> / </span><span style="display:inline-block;transform:scaleX(0.8346);transform-origin:0 0;margin-right:-0.766px">Р</span><span style="display:inline-block;transform:scaleX(0.9718);transform-origin:0 0;margin-right:-0.765px">аковины</span></div>
<div class="t de" style="left:510.70px;top:447.84px;"><span style="display:inline-block;transform:scaleX(0.9382);transform-origin:0 0;margin-right:-0.238px">3</span><span style="display:inline-block;transform:scaleX(0.8919);transform-origin:0 0;margin-right:-0.542px">D</span></div>
<svg class="a" style="left:239.60px;top:456.30px" width="14" height="10" viewBox="0 0 14 10"><path d="M3.7 3.8 C3.5 2.0 4.6 1.5 5.8 1.5 C6.9 1.5 7.5 2.2 7.6 3.4" fill="none" stroke="#4a4a4a" stroke-width="1.05"/><path d="M6.0 3.75 H12.0 V5.5 C12.0 7.3 10.3 8.3 9.0 8.35 C7.7 8.3 6.0 7.3 6.0 5.5 Z" fill="#fff" stroke="#4a4a4a" stroke-width="1.05"/><circle cx="9.0" cy="5.8" r="0.6" fill="#4a4a4a"/></svg>
<svg class="a" style="left:256.00px;top:456.30px" width="12" height="10" viewBox="0 0 12 10"><path d="M2.0 4.95 C3.5 1.9 9.1 1.9 10.6 4.95 C9.1 8.0 3.5 8.0 2.0 4.95 Z" fill="#c8c8c8" stroke="#2a2a2a" stroke-width="0.9" stroke-opacity="0.9"/><path d="M1.9 4.9 C3.2 7.6 9.4 7.6 10.7 4.9" fill="none" stroke="#2a2a2a" stroke-width="1.25"/></svg>
<svg class="a" style="left:269.90px;top:456.30px" width="11" height="10" viewBox="0 0 11 10"><path d="M2.0 2.1 H6.2 V4.3 H8.7 V8.2 H2.0 Z" fill="#fff" stroke="#2e2e2e" stroke-width="1.2"/><path d="M6.4 2.0 L8.7 4.0" fill="none" stroke="#2e2e2e" stroke-width="0.7" opacity="0.55"/></svg>
<div class="t" style="left:291.70px;top:457.60px;"><span style="display:inline-block;transform:scaleX(0.9035);transform-origin:0 0;margin-right:-0.373px">1</span></div>
<div class="t dr" style="left:304.80px;top:457.60px;"><span style="display:inline-block;transform:scaleX(0.8593);transform-origin:0 0;margin-right:-1.629px">03_</span><span style="display:inline-block;transform:scaleX(0.8168);transform-origin:0 0;margin-right:-0.918px">С</span><span style="display:inline-block;transform:scaleX(0.9511);transform-origin:0 0;margin-right:-1.604px">антехника</span><span style="display:inline-block;transform:scaleX(0.8593);transform-origin:0 0;margin-right:-0.814px"> / </span><span style="display:inline-block;transform:scaleX(0.8168);transform-origin:0 0;margin-right:-0.918px">С</span><span style="display:inline-block;transform:scaleX(0.9511);transform-origin:0 0;margin-right:-1.513px">месители</span></div>
<div class="t de" style="left:510.70px;top:457.60px;"><span style="display:inline-block;transform:scaleX(0.9382);transform-origin:0 0;margin-right:-0.238px">3</span><span style="display:inline-block;transform:scaleX(0.8919);transform-origin:0 0;margin-right:-0.542px">D</span></div>
<svg class="a" style="left:239.60px;top:466.07px" width="14" height="10" viewBox="0 0 14 10"><path d="M3.7 3.8 C3.5 2.0 4.6 1.5 5.8 1.5 C6.9 1.5 7.5 2.2 7.6 3.4" fill="none" stroke="#4a4a4a" stroke-width="1.05"/><path d="M6.0 3.75 H12.0 V5.5 C12.0 7.3 10.3 8.3 9.0 8.35 C7.7 8.3 6.0 7.3 6.0 5.5 Z" fill="#fff" stroke="#4a4a4a" stroke-width="1.05"/><circle cx="9.0" cy="5.8" r="0.6" fill="#4a4a4a"/></svg>
<svg class="a" style="left:256.00px;top:466.07px" width="12" height="10" viewBox="0 0 12 10"><path d="M2.0 4.95 C3.5 1.9 9.1 1.9 10.6 4.95 C9.1 8.0 3.5 8.0 2.0 4.95 Z" fill="#c8c8c8" stroke="#2a2a2a" stroke-width="0.9" stroke-opacity="0.9"/><path d="M1.9 4.9 C3.2 7.6 9.4 7.6 10.7 4.9" fill="none" stroke="#2a2a2a" stroke-width="1.25"/></svg>
<svg class="a" style="left:269.90px;top:466.07px" width="11" height="10" viewBox="0 0 11 10"><path d="M2.0 2.1 H6.2 V4.3 H8.7 V8.2 H2.0 Z" fill="#fff" stroke="#2e2e2e" stroke-width="1.2"/><path d="M6.4 2.0 L8.7 4.0" fill="none" stroke="#2e2e2e" stroke-width="0.7" opacity="0.55"/></svg>
<div class="t" style="left:291.70px;top:467.37px;"><span style="display:inline-block;transform:scaleX(0.9035);transform-origin:0 0;margin-right:-0.373px">1</span></div>
<div class="t dr" style="left:304.80px;top:467.37px;"><span style="display:inline-block;transform:scaleX(0.8731);transform-origin:0 0;margin-right:-1.469px">03_</span><span style="display:inline-block;transform:scaleX(0.8299);transform-origin:0 0;margin-right:-0.852px">С</span><span style="display:inline-block;transform:scaleX(0.9664);transform-origin:0 0;margin-right:-1.102px">антехника</span><span style="display:inline-block;transform:scaleX(0.8731);transform-origin:0 0;margin-right:-0.734px"> / </span><span style="display:inline-block;transform:scaleX(0.8299);transform-origin:0 0;margin-right:-0.721px">Т</span><span style="display:inline-block;transform:scaleX(0.9664);transform-origin:0 0;margin-right:-0.858px">ехничка</span></div>
<div class="t de" style="left:510.70px;top:467.37px;"><span style="display:inline-block;transform:scaleX(0.9382);transform-origin:0 0;margin-right:-0.238px">2</span><span style="display:inline-block;transform:scaleX(0.8919);transform-origin:0 0;margin-right:-0.542px">D</span></div>
<svg class="a" style="left:239.60px;top:475.83px" width="14" height="10" viewBox="0 0 14 10"><path d="M3.7 3.8 C3.5 2.0 4.6 1.5 5.8 1.5 C6.9 1.5 7.5 2.2 7.6 3.4" fill="none" stroke="#4a4a4a" stroke-width="1.05"/><path d="M6.0 3.75 H12.0 V5.5 C12.0 7.3 10.3 8.3 9.0 8.35 C7.7 8.3 6.0 7.3 6.0 5.5 Z" fill="#fff" stroke="#4a4a4a" stroke-width="1.05"/><circle cx="9.0" cy="5.8" r="0.6" fill="#4a4a4a"/></svg>
<svg class="a" style="left:256.00px;top:475.83px" width="12" height="10" viewBox="0 0 12 10"><path d="M2.0 4.95 C3.5 1.9 9.1 1.9 10.6 4.95 C9.1 8.0 3.5 8.0 2.0 4.95 Z" fill="#c8c8c8" stroke="#2a2a2a" stroke-width="0.9" stroke-opacity="0.9"/><path d="M1.9 4.9 C3.2 7.6 9.4 7.6 10.7 4.9" fill="none" stroke="#2a2a2a" stroke-width="1.25"/></svg>
<svg class="a" style="left:269.90px;top:475.83px" width="11" height="10" viewBox="0 0 11 10"><path d="M2.0 2.1 H6.2 V4.3 H8.7 V8.2 H2.0 Z" fill="#fff" stroke="#2e2e2e" stroke-width="1.2"/><path d="M6.4 2.0 L8.7 4.0" fill="none" stroke="#2e2e2e" stroke-width="0.7" opacity="0.55"/></svg>
<div class="t" style="left:291.70px;top:477.13px;"><span style="display:inline-block;transform:scaleX(0.9035);transform-origin:0 0;margin-right:-0.373px">1</span></div>
<div class="t dr" style="left:304.80px;top:477.13px;"><span style="display:inline-block;transform:scaleX(0.8559);transform-origin:0 0;margin-right:-1.668px">03_</span><span style="display:inline-block;transform:scaleX(0.8136);transform-origin:0 0;margin-right:-0.934px">С</span><span style="display:inline-block;transform:scaleX(0.9474);transform-origin:0 0;margin-right:-1.726px">антехника</span></div>
<div class="t de" style="left:510.70px;top:477.13px;"><span style="display:inline-block;transform:scaleX(0.9382);transform-origin:0 0;margin-right:-0.238px">3</span><span style="display:inline-block;transform:scaleX(0.8919);transform-origin:0 0;margin-right:-0.542px">D</span></div>
<svg class="a" style="left:239.60px;top:485.59px" width="14" height="10" viewBox="0 0 14 10"><path d="M3.7 3.8 C3.5 2.0 4.6 1.5 5.8 1.5 C6.9 1.5 7.5 2.2 7.6 3.4" fill="none" stroke="#4a4a4a" stroke-width="1.05"/><path d="M6.0 3.75 H12.0 V5.5 C12.0 7.3 10.3 8.3 9.0 8.35 C7.7 8.3 6.0 7.3 6.0 5.5 Z" fill="#fff" stroke="#4a4a4a" stroke-width="1.05"/><circle cx="9.0" cy="5.8" r="0.6" fill="#4a4a4a"/></svg>
<svg class="a" style="left:256.00px;top:485.59px" width="12" height="10" viewBox="0 0 12 10"><path d="M2.0 4.95 C3.5 1.9 9.1 1.9 10.6 4.95 C9.1 8.0 3.5 8.0 2.0 4.95 Z" fill="#c8c8c8" stroke="#2a2a2a" stroke-width="0.9" stroke-opacity="0.9"/><path d="M1.9 4.9 C3.2 7.6 9.4 7.6 10.7 4.9" fill="none" stroke="#2a2a2a" stroke-width="1.25"/></svg>
<svg class="a" style="left:269.90px;top:485.59px" width="11" height="10" viewBox="0 0 11 10"><path d="M2.0 2.1 H6.2 V4.3 H8.7 V8.2 H2.0 Z" fill="#fff" stroke="#2e2e2e" stroke-width="1.2"/><path d="M6.4 2.0 L8.7 4.0" fill="none" stroke="#2e2e2e" stroke-width="0.7" opacity="0.55"/></svg>
<div class="t" style="left:291.70px;top:486.89px;"><span style="display:inline-block;transform:scaleX(0.9035);transform-origin:0 0;margin-right:-0.373px">1</span></div>
<div class="t dr" style="left:304.80px;top:486.89px;"><span style="display:inline-block;transform:scaleX(0.8559);transform-origin:0 0;margin-right:-1.668px">03_</span><span style="display:inline-block;transform:scaleX(0.8136);transform-origin:0 0;margin-right:-0.934px">С</span><span style="display:inline-block;transform:scaleX(0.9474);transform-origin:0 0;margin-right:-1.726px">антехника</span></div>
<div class="t de" style="left:510.70px;top:486.89px;"><span style="display:inline-block;transform:scaleX(0.9908);transform-origin:0 0;margin-right:-0.347px">маркировка</span></div>
<svg class="a" style="left:239.60px;top:495.35px" width="14" height="10" viewBox="0 0 14 10"><path d="M3.7 3.8 C3.5 2.0 4.6 1.5 5.8 1.5 C6.9 1.5 7.5 2.2 7.6 3.4" fill="none" stroke="#4a4a4a" stroke-width="1.05"/><path d="M6.0 3.75 H12.0 V5.5 C12.0 7.3 10.3 8.3 9.0 8.35 C7.7 8.3 6.0 7.3 6.0 5.5 Z" fill="#fff" stroke="#4a4a4a" stroke-width="1.05"/><circle cx="9.0" cy="5.8" r="0.6" fill="#4a4a4a"/></svg>
<svg class="a" style="left:256.00px;top:495.35px" width="12" height="10" viewBox="0 0 12 10"><path d="M2.0 4.95 C3.5 1.9 9.1 1.9 10.6 4.95 C9.1 8.0 3.5 8.0 2.0 4.95 Z" fill="#c8c8c8" stroke="#2a2a2a" stroke-width="0.9" stroke-opacity="0.9"/><path d="M1.9 4.9 C3.2 7.6 9.4 7.6 10.7 4.9" fill="none" stroke="#2a2a2a" stroke-width="1.25"/></svg>
<svg class="a" style="left:269.90px;top:495.35px" width="11" height="10" viewBox="0 0 11 10"><path d="M2.0 2.1 H6.2 V4.3 H8.7 V8.2 H2.0 Z" fill="#fff" stroke="#2e2e2e" stroke-width="1.2"/><path d="M6.4 2.0 L8.7 4.0" fill="none" stroke="#2e2e2e" stroke-width="0.7" opacity="0.55"/></svg>
<div class="t" style="left:291.70px;top:496.65px;"><span style="display:inline-block;transform:scaleX(0.9035);transform-origin:0 0;margin-right:-0.373px">1</span></div>
<div class="t dr" style="left:304.80px;top:496.65px;"><span style="display:inline-block;transform:scaleX(0.8559);transform-origin:0 0;margin-right:-1.668px">03_</span><span style="display:inline-block;transform:scaleX(0.8136);transform-origin:0 0;margin-right:-0.934px">С</span><span style="display:inline-block;transform:scaleX(0.9474);transform-origin:0 0;margin-right:-1.726px">антехника</span></div>
<div class="t de" style="left:510.70px;top:496.65px;"><span style="display:inline-block;transform:scaleX(0.9524);transform-origin:0 0;margin-right:-0.533px">оси</span><span style="display:inline-block;transform:scaleX(0.8605);transform-origin:0 0;margin-right:-0.269px"> </span><span style="display:inline-block;transform:scaleX(0.9524);transform-origin:0 0;margin-right:-0.988px">симме</span><span style="display:inline-block;transform:scaleX(0.8605);transform-origin:0 0;margin-right:-0.807px">...</span></div>
<svg class="a" style="left:239.60px;top:505.11px" width="14" height="10" viewBox="0 0 14 10"><path d="M3.7 3.8 C3.5 2.0 4.6 1.5 5.8 1.5 C6.9 1.5 7.5 2.2 7.6 3.4" fill="none" stroke="#4a4a4a" stroke-width="1.05"/><path d="M6.0 3.75 H12.0 V5.5 C12.0 7.3 10.3 8.3 9.0 8.35 C7.7 8.3 6.0 7.3 6.0 5.5 Z" fill="#fff" stroke="#4a4a4a" stroke-width="1.05"/><circle cx="9.0" cy="5.8" r="0.6" fill="#4a4a4a"/></svg>
<svg class="a" style="left:256.00px;top:505.11px" width="12" height="10" viewBox="0 0 12 10"><path d="M2.0 4.95 C3.5 1.9 9.1 1.9 10.6 4.95 C9.1 8.0 3.5 8.0 2.0 4.95 Z" fill="#c8c8c8" stroke="#2a2a2a" stroke-width="0.9" stroke-opacity="0.9"/><path d="M1.9 4.9 C3.2 7.6 9.4 7.6 10.7 4.9" fill="none" stroke="#2a2a2a" stroke-width="1.25"/></svg>
<svg class="a" style="left:269.90px;top:505.11px" width="11" height="10" viewBox="0 0 11 10"><path d="M2.0 2.1 H6.2 V4.3 H8.7 V8.2 H2.0 Z" fill="#fff" stroke="#2e2e2e" stroke-width="1.2"/><path d="M6.4 2.0 L8.7 4.0" fill="none" stroke="#2e2e2e" stroke-width="0.7" opacity="0.55"/></svg>
<div class="t" style="left:291.70px;top:506.41px;"><span style="display:inline-block;transform:scaleX(0.9035);transform-origin:0 0;margin-right:-0.373px">1</span></div>
<div class="t dr" style="left:304.80px;top:506.41px;"><span style="display:inline-block;transform:scaleX(0.8559);transform-origin:0 0;margin-right:-1.668px">03_</span><span style="display:inline-block;transform:scaleX(0.8136);transform-origin:0 0;margin-right:-0.934px">С</span><span style="display:inline-block;transform:scaleX(0.9474);transform-origin:0 0;margin-right:-1.726px">антехника</span></div>
<div class="t de" style="left:510.70px;top:506.41px;"><span style="display:inline-block;transform:scaleX(0.9854);transform-origin:0 0;margin-right:-0.389px">подписи</span></div>
<svg class="a" style="left:239.60px;top:514.88px" width="14" height="10" viewBox="0 0 14 10"><path d="M3.7 3.8 C3.5 2.0 4.6 1.5 5.8 1.5 C6.9 1.5 7.5 2.2 7.6 3.4" fill="none" stroke="#4a4a4a" stroke-width="1.05"/><path d="M6.0 3.75 H12.0 V5.5 C12.0 7.3 10.3 8.3 9.0 8.35 C7.7 8.3 6.0 7.3 6.0 5.5 Z" fill="#fff" stroke="#4a4a4a" stroke-width="1.05"/><circle cx="9.0" cy="5.8" r="0.6" fill="#4a4a4a"/></svg>
<svg class="a" style="left:256.00px;top:514.88px" width="12" height="10" viewBox="0 0 12 10"><path d="M2.0 4.95 C3.5 1.9 9.1 1.9 10.6 4.95 C9.1 8.0 3.5 8.0 2.0 4.95 Z" fill="#c8c8c8" stroke="#2a2a2a" stroke-width="0.9" stroke-opacity="0.9"/><path d="M1.9 4.9 C3.2 7.6 9.4 7.6 10.7 4.9" fill="none" stroke="#2a2a2a" stroke-width="1.25"/></svg>
<svg class="a" style="left:269.90px;top:514.88px" width="11" height="10" viewBox="0 0 11 10"><path d="M2.0 2.1 H6.2 V4.3 H8.7 V8.2 H2.0 Z" fill="#fff" stroke="#2e2e2e" stroke-width="1.2"/><path d="M6.4 2.0 L8.7 4.0" fill="none" stroke="#2e2e2e" stroke-width="0.7" opacity="0.55"/></svg>
<div class="t" style="left:291.70px;top:516.18px;"><span style="display:inline-block;transform:scaleX(0.9035);transform-origin:0 0;margin-right:-0.373px">1</span></div>
<div class="t dr" style="left:304.80px;top:516.18px;"><span style="display:inline-block;transform:scaleX(0.8559);transform-origin:0 0;margin-right:-1.668px">03_</span><span style="display:inline-block;transform:scaleX(0.8136);transform-origin:0 0;margin-right:-0.934px">С</span><span style="display:inline-block;transform:scaleX(0.9474);transform-origin:0 0;margin-right:-1.726px">антехника</span></div>
<div class="t de" style="left:510.70px;top:516.18px;"><span style="display:inline-block;transform:scaleX(0.9334);transform-origin:0 0;margin-right:-1.890px">размеры</span></div>
<div class="a" style="left:549.90px;top:56.00px;width:9.00px;height:151.70px;background:#cdcdcd"></div>
<svg class="a" style="left:551.5px;top:49.0px" width="7" height="5" viewBox="0 0 7 5"><path d="M1.0 3.8 L3.4 1.4 L5.8 3.8" fill="none" stroke="#333" stroke-width="1.25"/></svg>
<svg class="a" style="left:551.5px;top:516.5px" width="7" height="5" viewBox="0 0 7 5"><path d="M1.0 1.2 L3.4 3.6 L5.8 1.2" fill="none" stroke="#333" stroke-width="1.25"/></svg>
<svg class="a" style="left:567.8px;top:40px" width="6" height="7" viewBox="0 0 6 7"><path d="M0.5 0.6 H5.5 L3.6 3.3 V6.5 L2.4 5.7 V3.3 Z" fill="none" stroke="#b4b4b4" stroke-width="0.9"/></svg>
<div class="a" style="left:577.60px;top:37.40px;width:66.00px;height:10.80px;background:#e1e1e1;border:1px solid #bdbdbd;box-sizing:border-box"></div><div class="t" style="left:580.50px;top:38.90px;color:#1c1c1c"><span style="display:inline-block;transform:scaleX(0.8073);transform-origin:0 0;margin-right:-0.961px">П</span><span style="display:inline-block;transform:scaleX(0.9400);transform-origin:0 0;margin-right:-1.996px">оказывать</span><span style="display:inline-block;transform:scaleX(0.8493);transform-origin:0 0;margin-right:-0.291px"> </span><span style="display:inline-block;transform:scaleX(0.9400);transform-origin:0 0;margin-right:-0.661px">все</span><span style="display:inline-block;transform:scaleX(0.8493);transform-origin:0 0;margin-right:-1.163px"> ...</span></div>
<svg class="a" style="left:638.6px;top:40.6px" width="4" height="5" viewBox="0 0 4 5"><path d="M0.6 0.3 L3.3 2.5 L0.6 4.7 Z" fill="#1a1a1a"/></svg>
<div class="a" style="left:567.00px;top:53.10px;width:76.60px;height:12.10px;background:#e1e1e1;border:1px solid #bdbdbd;box-sizing:border-box"></div><div class="t c" style="left:545.30px;width:120px;top:55.25px;color:#1c1c1c"><span style="display:inline-block;transform:scaleX(0.8588);transform-origin:0 0;margin-right:-0.708px">Н</span>овый<span style="display:inline-block;transform:scaleX(0.9035);transform-origin:0 0;margin-right:-0.558px">...</span></div>
<div class="a" style="left:567.00px;top:69.20px;width:76.60px;height:12.00px;background:#cccccc;border:1px solid #cacaca;box-sizing:border-box"></div><div class="t c" style="left:545.30px;width:120px;top:71.30px;color:#a3a3a3;-webkit-text-stroke:0.1px #a3a3a3"><span style="display:inline-block;transform:scaleX(0.8588);transform-origin:0 0;margin-right:-0.623px">У</span>далить<span style="display:inline-block;transform:scaleX(0.9035);transform-origin:0 0;margin-right:-0.558px">...</span></div>
<div class="a" style="left:566.90px;top:434.20px;width:77.00px;height:12.50px;background:#e1e1e1;border:1px solid #bdbdbd;box-sizing:border-box"></div><div class="t c" style="left:545.40px;width:120px;top:436.55px;color:#1c1c1c"><span style="display:inline-block;transform:scaleX(0.8588);transform-origin:0 0;margin-right:-0.654px">В</span>ыбрать<span style="display:inline-block;transform:scaleX(0.9035);transform-origin:0 0;margin-right:-0.186px"> </span><span style="display:inline-block;transform:scaleX(0.8588);transform-origin:0 0;margin-right:-0.654px">В</span>се</div>
<div class="a" style="left:566.90px;top:450.60px;width:77.00px;height:12.10px;background:#e1e1e1;border:1px solid #bdbdbd;box-sizing:border-box"></div><div class="t c" style="left:545.40px;width:120px;top:452.75px;color:#1c1c1c"><span style="display:inline-block;transform:scaleX(0.8588);transform-origin:0 0;margin-right:-0.762px">О</span>тмена<span style="display:inline-block;transform:scaleX(0.9035);transform-origin:0 0;margin-right:-0.186px"> </span><span style="display:inline-block;transform:scaleX(0.8588);transform-origin:0 0;margin-right:-0.654px">В</span>ыбора</div>
<div class="a" style="left:578.10px;top:472.70px;width:25.20px;height:12.20px;background:#cccccc"></div>
<svg class="a" style="left:582.30px;top:473.80px" width="14" height="10" viewBox="0 0 14 10"><path d="M3.7 3.8 C3.5 2.0 4.6 1.5 5.8 1.5 C6.9 1.5 7.5 2.2 7.6 3.4" fill="none" stroke="#9c9c9c" stroke-width="1.05"/><path d="M6.0 3.75 H12.0 V5.5 C12.0 7.3 10.3 8.3 9.0 8.35 C7.7 8.3 6.0 7.3 6.0 5.5 Z" fill="none" stroke="#9c9c9c" stroke-width="1.05"/><circle cx="9.0" cy="5.8" r="0.6" fill="#9c9c9c"/></svg>
<div class="a" style="left:606.30px;top:472.70px;width:25.60px;height:12.20px;background:#cccccc"></div>
<svg class="a" style="left:610.35px;top:473.80px" width="14" height="10" viewBox="0 0 14 10"><path d="M7.3 4.0 V3.0 C7.3 2.1 7.9 1.7 8.75 1.7 C9.6 1.7 10.2 2.1 10.2 3.0 V4.0" fill="none" stroke="#9c9c9c" stroke-width="1.05"/><path d="M5.8 4.3 H11.7 V6.2 C11.7 8.1 10.4 8.9 8.75 8.9 C7.1 8.9 5.8 8.1 5.8 6.2 Z" fill="none" stroke="#9c9c9c" stroke-width="1.05"/><path d="M8.75 5.4 V7.0" stroke="#9c9c9c" stroke-width="0.9"/></svg>
<div class="a" style="left:578.10px;top:488.90px;width:25.20px;height:12.10px;background:#cccccc"></div>
<svg class="a" style="left:584.50px;top:490.00px" width="12" height="10" viewBox="0 0 12 10"><path d="M1.9 4.95 C3.3 1.7 9.1 1.7 10.5 4.95 C9.1 8.2 3.3 8.2 1.9 4.95 Z" fill="none" stroke="#9c9c9c" stroke-width="1.0"/><circle cx="6.2" cy="4.95" r="1.55" fill="none" stroke="#9c9c9c" stroke-width="0.9"/></svg>
<div class="a" style="left:606.30px;top:488.90px;width:25.60px;height:12.10px;background:#cccccc"></div>
<svg class="a" style="left:612.90px;top:490.00px" width="12" height="10" viewBox="0 0 12 10"><path d="M2.0 4.95 C3.5 1.9 9.1 1.9 10.6 4.95 C9.1 8.0 3.5 8.0 2.0 4.95 Z" fill="#dadada" stroke="#8a8a8a" stroke-width="0.9" stroke-opacity="0.9"/><path d="M1.9 4.9 C3.2 7.6 9.4 7.6 10.7 4.9" fill="none" stroke="#8a8a8a" stroke-width="1.25"/></svg>
<div class="a" style="left:566.90px;top:511.20px;width:77.00px;height:12.50px;background:#e1e1e1;border:1px solid #bdbdbd;box-sizing:border-box"></div><div class="t c" style="left:545.40px;width:120px;top:513.55px;color:#1c1c1c"><span style="display:inline-block;transform:scaleX(0.8588);transform-origin:0 0;margin-right:-0.708px">Н</span>апечатать<span style="display:inline-block;transform:scaleX(0.9035);transform-origin:0 0;margin-right:-0.558px">...</span></div>
<div class="a" style="left:238.50px;top:533.10px;width:407.80px;height:0.80px;background:#cbcbcb"></div>
<div class="a" style="left:536.40px;top:537.60px;width:47.20px;height:12.00px;background:#e1e1e1;border:1px solid #bdbdbd;box-sizing:border-box"></div><div class="t c" style="left:500.00px;width:120px;top:539.70px;color:#1c1c1c"><span style="display:inline-block;transform:scaleX(0.8588);transform-origin:0 0;margin-right:-0.762px">О</span>тменить</div>
<div class="a" style="left:594.40px;top:537.60px;width:47.40px;height:12.00px;background:#e5e5e5;border:1.4px solid #2c6fc2;box-sizing:border-box"></div>
<div class="t c" style="left:558.1px;width:120px;top:539.7px;color:#1c1c1c"><span style="display:inline-block;transform:scaleX(0.8588);transform-origin:0 0;margin-right:-1.416px">OK</span></div>
<div class="a" style="left:647.50px;top:549.50px;width:0.90px;height:0.90px;background:#b0b0b0"></div>
<div class="a" style="left:645.50px;top:551.50px;width:0.90px;height:0.90px;background:#b0b0b0"></div>
<div class="a" style="left:647.50px;top:551.50px;width:0.90px;height:0.90px;background:#b0b0b0"></div>
<div class="a" style="left:643.50px;top:553.00px;width:0.90px;height:0.90px;background:#b0b0b0"></div>
<div class="a" style="left:645.50px;top:553.00px;width:0.90px;height:0.90px;background:#b0b0b0"></div>
<div class="a" style="left:647.50px;top:553.00px;width:0.90px;height:0.90px;background:#b0b0b0"></div>
<div class="a" style="left:0.00px;top:553.60px;width:650.00px;height:1.20px;background:#f7efe6"></div>
<div class="a" style="left:0.00px;top:554.80px;width:650.00px;height:2.20px;background:#dcbcad"></div>
<div class="a" style="left:548.00px;top:555.20px;width:102.00px;height:1.80px;background:#b89a8a"></div>
</body></html>
